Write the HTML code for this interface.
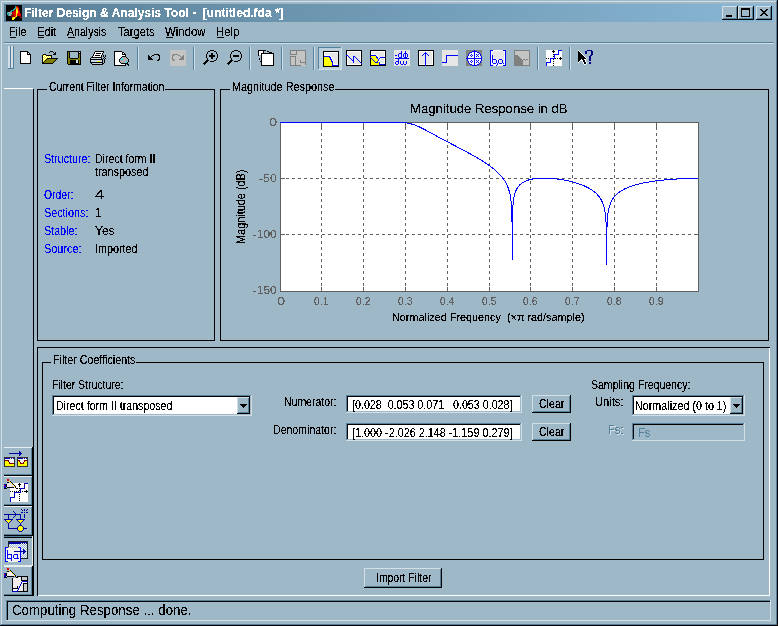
<!DOCTYPE html>
<html><head><meta charset="utf-8"><title>Filter Design &amp; Analysis Tool</title>
<style>
html,body{margin:0;padding:0;width:778px;height:626px;overflow:hidden;background:#9EB8C8}
#w{position:relative;width:778px;height:626px;overflow:hidden;will-change:transform}
#w>div{position:absolute}
.t{filter:url(#thr)}
</style></head><body><svg width="0" height="0" style="position:absolute"><filter id="thr"><feComponentTransfer><feFuncA type="discrete" tableValues="0 0 1 1 1"/></feComponentTransfer></filter></svg><div id="w">
<div style="left:0px;top:0px;width:778px;height:626px;background:#9EB8C8;"></div>
<div style="left:0px;top:0px;width:778px;height:1px;background:#9EB8C8;"></div>
<div style="left:0px;top:0px;width:1px;height:626px;background:#9EB8C8;"></div>
<div style="left:1px;top:1px;width:776px;height:1px;background:#D3DFE7;"></div>
<div style="left:1px;top:1px;width:1px;height:624px;background:#D3DFE7;"></div>
<div style="left:776px;top:1px;width:1px;height:624px;background:#54809C;"></div>
<div style="left:1px;top:624px;width:776px;height:1px;background:#54809C;"></div>
<div style="left:777px;top:0px;width:1px;height:626px;background:#000000;"></div>
<div style="left:0px;top:625px;width:778px;height:1px;background:#000000;"></div>
<div style="left:4px;top:4px;width:770px;height:18px;background:#9EB8C8;background:linear-gradient(to right,#5A8098,#88B6D4)"></div>
<svg style="position:absolute;left:6px;top:5px;" width="16" height="16" viewBox="0 0 16 16" shape-rendering="crispEdges"><rect x="0" y="0" width="16" height="1" fill="#000000"/><rect x="0" y="1" width="9" height="1" fill="#000000"/><rect x="9" y="1" width="1" height="1" fill="#20A8A8"/><rect x="10" y="1" width="1" height="1" fill="#900000"/><rect x="11" y="1" width="1" height="1" fill="#E00000"/><rect x="12" y="1" width="4" height="1" fill="#000000"/><rect x="0" y="2" width="9" height="1" fill="#000000"/><rect x="9" y="2" width="1" height="1" fill="#20A8A8"/><rect x="10" y="2" width="1" height="1" fill="#FF8000"/><rect x="11" y="2" width="1" height="1" fill="#E00000"/><rect x="12" y="2" width="1" height="1" fill="#900000"/><rect x="13" y="2" width="3" height="1" fill="#000000"/><rect x="0" y="3" width="8" height="1" fill="#000000"/><rect x="8" y="3" width="2" height="1" fill="#20A8A8"/><rect x="10" y="3" width="2" height="1" fill="#FF8000"/><rect x="12" y="3" width="1" height="1" fill="#E00000"/><rect x="13" y="3" width="3" height="1" fill="#000000"/><rect x="0" y="4" width="7" height="1" fill="#000000"/><rect x="7" y="4" width="2" height="1" fill="#20A8A8"/><rect x="9" y="4" width="1" height="1" fill="#900000"/><rect x="10" y="4" width="1" height="1" fill="#FFFF00"/><rect x="11" y="4" width="1" height="1" fill="#FF8000"/><rect x="12" y="4" width="1" height="1" fill="#E00000"/><rect x="13" y="4" width="3" height="1" fill="#000000"/><rect x="0" y="5" width="5" height="1" fill="#000000"/><rect x="5" y="5" width="3" height="1" fill="#20A8A8"/><rect x="8" y="5" width="2" height="1" fill="#900000"/><rect x="10" y="5" width="2" height="1" fill="#FFFF00"/><rect x="12" y="5" width="1" height="1" fill="#E00000"/><rect x="13" y="5" width="1" height="1" fill="#900000"/><rect x="14" y="5" width="2" height="1" fill="#000000"/><rect x="0" y="6" width="4" height="1" fill="#000000"/><rect x="4" y="6" width="2" height="1" fill="#20A8A8"/><rect x="6" y="6" width="1" height="1" fill="#000000"/><rect x="7" y="6" width="1" height="1" fill="#900000"/><rect x="8" y="6" width="2" height="1" fill="#E00000"/><rect x="10" y="6" width="2" height="1" fill="#FFFF00"/><rect x="12" y="6" width="2" height="1" fill="#E00000"/><rect x="14" y="6" width="2" height="1" fill="#000000"/><rect x="0" y="7" width="1" height="1" fill="#000000"/><rect x="1" y="7" width="1" height="1" fill="#20A8A8"/><rect x="2" y="7" width="4" height="1" fill="#A0A8A8"/><rect x="6" y="7" width="1" height="1" fill="#900000"/><rect x="7" y="7" width="3" height="1" fill="#E00000"/><rect x="10" y="7" width="2" height="1" fill="#FFFF00"/><rect x="12" y="7" width="2" height="1" fill="#E00000"/><rect x="14" y="7" width="2" height="1" fill="#000000"/><rect x="0" y="8" width="1" height="1" fill="#000000"/><rect x="1" y="8" width="2" height="1" fill="#20A8A8"/><rect x="3" y="8" width="3" height="1" fill="#A0A8A8"/><rect x="6" y="8" width="1" height="1" fill="#900000"/><rect x="7" y="8" width="3" height="1" fill="#E00000"/><rect x="10" y="8" width="1" height="1" fill="#FFFF00"/><rect x="11" y="8" width="1" height="1" fill="#FF8000"/><rect x="12" y="8" width="2" height="1" fill="#E00000"/><rect x="14" y="8" width="1" height="1" fill="#900000"/><rect x="15" y="8" width="1" height="1" fill="#000000"/><rect x="0" y="9" width="1" height="1" fill="#000000"/><rect x="1" y="9" width="2" height="1" fill="#20A8A8"/><rect x="3" y="9" width="2" height="1" fill="#A0A8A8"/><rect x="5" y="9" width="1" height="1" fill="#20A8A8"/><rect x="6" y="9" width="1" height="1" fill="#900000"/><rect x="7" y="9" width="3" height="1" fill="#E00000"/><rect x="10" y="9" width="1" height="1" fill="#FFFF00"/><rect x="11" y="9" width="4" height="1" fill="#E00000"/><rect x="15" y="9" width="1" height="1" fill="#000000"/><rect x="0" y="10" width="2" height="1" fill="#000000"/><rect x="2" y="10" width="1" height="1" fill="#20A8A8"/><rect x="3" y="10" width="2" height="1" fill="#A0A8A8"/><rect x="5" y="10" width="3" height="1" fill="#900000"/><rect x="8" y="10" width="2" height="1" fill="#E00000"/><rect x="10" y="10" width="1" height="1" fill="#FFFF00"/><rect x="11" y="10" width="4" height="1" fill="#E00000"/><rect x="15" y="10" width="1" height="1" fill="#000000"/><rect x="0" y="11" width="5" height="1" fill="#000000"/><rect x="5" y="11" width="4" height="1" fill="#900000"/><rect x="9" y="11" width="1" height="1" fill="#FF8000"/><rect x="10" y="11" width="1" height="1" fill="#FFFF00"/><rect x="11" y="11" width="2" height="1" fill="#000000"/><rect x="13" y="11" width="2" height="1" fill="#900000"/><rect x="15" y="11" width="1" height="1" fill="#000000"/><rect x="0" y="12" width="6" height="1" fill="#000000"/><rect x="6" y="12" width="1" height="1" fill="#FF8000"/><rect x="7" y="12" width="2" height="1" fill="#FFFF00"/><rect x="9" y="12" width="1" height="1" fill="#FF8000"/><rect x="10" y="12" width="4" height="1" fill="#000000"/><rect x="14" y="12" width="2" height="1" fill="#900000"/><rect x="0" y="13" width="6" height="1" fill="#000000"/><rect x="6" y="13" width="3" height="1" fill="#FFFF00"/><rect x="9" y="13" width="7" height="1" fill="#000000"/><rect x="0" y="14" width="6" height="1" fill="#000000"/><rect x="6" y="14" width="2" height="1" fill="#FFFF00"/><rect x="8" y="14" width="8" height="1" fill="#000000"/><rect x="0" y="15" width="16" height="1" fill="#000000"/></svg>
<div class="t" style="left:24px;top:7px;font:bold 12px/12px 'Liberation Sans', sans-serif;color:#FFF;white-space:pre;transform-origin:0 0;transform:scaleX(1.0009);">Filter Design &amp; Analysis Tool -  [untitled.fda *]</div>
<div style="left:722px;top:6px;width:16px;height:14px;background:#9EB8C8;"></div>
<div style="left:722px;top:6px;width:16px;height:1px;background:#D3DFE7;"></div>
<div style="left:722px;top:6px;width:1px;height:14px;background:#D3DFE7;"></div>
<div style="left:722px;top:19px;width:16px;height:1px;background:#000000;"></div>
<div style="left:737px;top:6px;width:1px;height:14px;background:#000000;"></div>
<div style="left:723px;top:7px;width:14px;height:1px;background:#9EB8C8;"></div>
<div style="left:723px;top:7px;width:1px;height:12px;background:#9EB8C8;"></div>
<div style="left:723px;top:18px;width:14px;height:1px;background:#54809C;"></div>
<div style="left:736px;top:7px;width:1px;height:12px;background:#54809C;"></div>
<div style="left:738px;top:6px;width:16px;height:14px;background:#9EB8C8;"></div>
<div style="left:738px;top:6px;width:16px;height:1px;background:#D3DFE7;"></div>
<div style="left:738px;top:6px;width:1px;height:14px;background:#D3DFE7;"></div>
<div style="left:738px;top:19px;width:16px;height:1px;background:#000000;"></div>
<div style="left:753px;top:6px;width:1px;height:14px;background:#000000;"></div>
<div style="left:739px;top:7px;width:14px;height:1px;background:#9EB8C8;"></div>
<div style="left:739px;top:7px;width:1px;height:12px;background:#9EB8C8;"></div>
<div style="left:739px;top:18px;width:14px;height:1px;background:#54809C;"></div>
<div style="left:752px;top:7px;width:1px;height:12px;background:#54809C;"></div>
<div style="left:756px;top:6px;width:16px;height:14px;background:#9EB8C8;"></div>
<div style="left:756px;top:6px;width:16px;height:1px;background:#D3DFE7;"></div>
<div style="left:756px;top:6px;width:1px;height:14px;background:#D3DFE7;"></div>
<div style="left:756px;top:19px;width:16px;height:1px;background:#000000;"></div>
<div style="left:771px;top:6px;width:1px;height:14px;background:#000000;"></div>
<div style="left:757px;top:7px;width:14px;height:1px;background:#9EB8C8;"></div>
<div style="left:757px;top:7px;width:1px;height:12px;background:#9EB8C8;"></div>
<div style="left:757px;top:18px;width:14px;height:1px;background:#54809C;"></div>
<div style="left:770px;top:7px;width:1px;height:12px;background:#54809C;"></div>
<div style="left:726px;top:15px;width:6px;height:2px;background:#000000;"></div>
<div style="left:741px;top:8px;width:9px;height:2px;background:#000000;"></div>
<div style="left:741px;top:8px;width:1px;height:9px;background:#000000;"></div>
<div style="left:749px;top:8px;width:1px;height:9px;background:#000000;"></div>
<div style="left:741px;top:16px;width:9px;height:1px;background:#000000;"></div>
<svg style="position:absolute;left:760px;top:9px;" width="8" height="7" viewBox="0 0 8 7" shape-rendering="crispEdges"><rect x="0" y="0" width="2" height="1" fill="#000000"/><rect x="6" y="0" width="2" height="1" fill="#000000"/><rect x="1" y="1" width="2" height="1" fill="#000000"/><rect x="5" y="1" width="2" height="1" fill="#000000"/><rect x="2" y="2" width="4" height="1" fill="#000000"/><rect x="3" y="3" width="2" height="1" fill="#000000"/><rect x="2" y="4" width="4" height="1" fill="#000000"/><rect x="1" y="5" width="2" height="1" fill="#000000"/><rect x="5" y="5" width="2" height="1" fill="#000000"/><rect x="0" y="6" width="2" height="1" fill="#000000"/><rect x="6" y="6" width="2" height="1" fill="#000000"/></svg>
<div class="t" style="left:9px;top:26px;font:normal 12px/12px 'Liberation Sans', sans-serif;color:#000;white-space:pre;transform-origin:0 0;transform:scaleX(0.9017);">File</div>
<div style="left:10px;top:37px;width:6px;height:1px;background:#000000;"></div>
<div class="t" style="left:37px;top:26px;font:normal 12px/12px 'Liberation Sans', sans-serif;color:#000;white-space:pre;transform-origin:0 0;transform:scaleX(0.9430);">Edit</div>
<div style="left:38px;top:37px;width:6px;height:1px;background:#000000;"></div>
<div class="t" style="left:67px;top:26px;font:normal 12px/12px 'Liberation Sans', sans-serif;color:#000;white-space:pre;transform-origin:0 0;transform:scaleX(0.8819);">Analysis</div>
<div style="left:68px;top:37px;width:7px;height:1px;background:#000000;"></div>
<div class="t" style="left:118px;top:26px;font:normal 12px/12px 'Liberation Sans', sans-serif;color:#000;white-space:pre;transform-origin:0 0;transform:scaleX(0.9269);">Targets</div>
<div style="left:132px;top:37px;width:6px;height:1px;background:#000000;"></div>
<div class="t" style="left:165px;top:26px;font:normal 12px/12px 'Liberation Sans', sans-serif;color:#000;white-space:pre;transform-origin:0 0;transform:scaleX(0.9492);">Window</div>
<div style="left:166px;top:37px;width:7px;height:1px;background:#000000;"></div>
<div class="t" style="left:216px;top:26px;font:normal 12px/12px 'Liberation Sans', sans-serif;color:#000;white-space:pre;transform-origin:0 0;transform:scaleX(0.9529);">Help</div>
<div style="left:217px;top:37px;width:7px;height:1px;background:#000000;"></div>
<div style="left:4px;top:42px;width:770px;height:1px;background:#54809C;"></div>
<div style="left:4px;top:43px;width:770px;height:1px;background:#D3DFE7;"></div>
<div style="left:8px;top:46px;width:1px;height:23px;background:#D3DFE7;"></div>
<div style="left:9px;top:46px;width:1px;height:23px;background:#D3DFE7;"></div>
<div style="left:10px;top:46px;width:1px;height:23px;background:#54809C;"></div>
<div style="left:8px;top:68px;width:3px;height:1px;background:#54809C;"></div>
<div style="left:11px;top:46px;width:1px;height:23px;background:#D3DFE7;"></div>
<div style="left:12px;top:46px;width:1px;height:23px;background:#D3DFE7;"></div>
<div style="left:13px;top:46px;width:1px;height:23px;background:#54809C;"></div>
<div style="left:11px;top:68px;width:3px;height:1px;background:#54809C;"></div>
<div style="left:137px;top:47px;width:1px;height:23px;background:#54809C;"></div>
<div style="left:138px;top:47px;width:1px;height:23px;background:#D3DFE7;"></div>
<div style="left:193px;top:47px;width:1px;height:23px;background:#54809C;"></div>
<div style="left:194px;top:47px;width:1px;height:23px;background:#D3DFE7;"></div>
<div style="left:249px;top:47px;width:1px;height:23px;background:#54809C;"></div>
<div style="left:250px;top:47px;width:1px;height:23px;background:#D3DFE7;"></div>
<div style="left:281px;top:47px;width:1px;height:23px;background:#54809C;"></div>
<div style="left:282px;top:47px;width:1px;height:23px;background:#D3DFE7;"></div>
<div style="left:313px;top:47px;width:1px;height:23px;background:#54809C;"></div>
<div style="left:314px;top:47px;width:1px;height:23px;background:#D3DFE7;"></div>
<div style="left:537px;top:47px;width:1px;height:23px;background:#54809C;"></div>
<div style="left:538px;top:47px;width:1px;height:23px;background:#D3DFE7;"></div>
<div style="left:569px;top:47px;width:1px;height:23px;background:#54809C;"></div>
<div style="left:570px;top:47px;width:1px;height:23px;background:#D3DFE7;"></div>
<svg style="position:absolute;left:18px;top:50px;" width="16" height="14" viewBox="0 0 16 14" shape-rendering="crispEdges"><rect x="2" y="1" width="8" height="1" fill="#000000"/><rect x="2" y="2" width="1" height="1" fill="#000000"/><rect x="3" y="2" width="6" height="1" fill="#FFFFFF"/><rect x="9" y="2" width="2" height="1" fill="#000000"/><rect x="2" y="3" width="1" height="1" fill="#000000"/><rect x="3" y="3" width="6" height="1" fill="#FFFFFF"/><rect x="9" y="3" width="1" height="1" fill="#000000"/><rect x="10" y="3" width="1" height="1" fill="#FFFFFF"/><rect x="11" y="3" width="1" height="1" fill="#000000"/><rect x="2" y="4" width="1" height="1" fill="#000000"/><rect x="3" y="4" width="6" height="1" fill="#FFFFFF"/><rect x="9" y="4" width="4" height="1" fill="#000000"/><rect x="2" y="5" width="1" height="1" fill="#000000"/><rect x="3" y="5" width="9" height="1" fill="#FFFFFF"/><rect x="12" y="5" width="1" height="1" fill="#000000"/><rect x="2" y="6" width="1" height="1" fill="#000000"/><rect x="3" y="6" width="9" height="1" fill="#FFFFFF"/><rect x="12" y="6" width="1" height="1" fill="#000000"/><rect x="2" y="7" width="1" height="1" fill="#000000"/><rect x="3" y="7" width="9" height="1" fill="#FFFFFF"/><rect x="12" y="7" width="1" height="1" fill="#000000"/><rect x="2" y="8" width="1" height="1" fill="#000000"/><rect x="3" y="8" width="9" height="1" fill="#FFFFFF"/><rect x="12" y="8" width="1" height="1" fill="#000000"/><rect x="2" y="9" width="1" height="1" fill="#000000"/><rect x="3" y="9" width="9" height="1" fill="#FFFFFF"/><rect x="12" y="9" width="1" height="1" fill="#000000"/><rect x="2" y="10" width="1" height="1" fill="#000000"/><rect x="3" y="10" width="9" height="1" fill="#FFFFFF"/><rect x="12" y="10" width="1" height="1" fill="#000000"/><rect x="2" y="11" width="1" height="1" fill="#000000"/><rect x="3" y="11" width="9" height="1" fill="#FFFFFF"/><rect x="12" y="11" width="1" height="1" fill="#000000"/><rect x="2" y="12" width="1" height="1" fill="#000000"/><rect x="3" y="12" width="9" height="1" fill="#FFFFFF"/><rect x="12" y="12" width="1" height="1" fill="#000000"/><rect x="2" y="13" width="11" height="1" fill="#000000"/></svg>
<svg style="position:absolute;left:42px;top:50px;" width="16" height="14" viewBox="0 0 16 14" shape-rendering="crispEdges"><rect x="8" y="1" width="3" height="1" fill="#000000"/><rect x="7" y="2" width="1" height="1" fill="#000000"/><rect x="11" y="2" width="1" height="1" fill="#000000"/><rect x="13" y="2" width="1" height="1" fill="#000000"/><rect x="12" y="3" width="2" height="1" fill="#000000"/><rect x="1" y="4" width="3" height="1" fill="#000000"/><rect x="11" y="4" width="3" height="1" fill="#000000"/><rect x="0" y="5" width="1" height="1" fill="#000000"/><rect x="1" y="5" width="1" height="1" fill="#FFFF00"/><rect x="2" y="5" width="1" height="1" fill="#FFFFFF"/><rect x="3" y="5" width="1" height="1" fill="#FFFF00"/><rect x="4" y="5" width="6" height="1" fill="#000000"/><rect x="0" y="6" width="1" height="1" fill="#000000"/><rect x="1" y="6" width="1" height="1" fill="#FFFFFF"/><rect x="2" y="6" width="1" height="1" fill="#FFFF00"/><rect x="3" y="6" width="1" height="1" fill="#FFFFFF"/><rect x="4" y="6" width="1" height="1" fill="#FFFF00"/><rect x="5" y="6" width="1" height="1" fill="#FFFFFF"/><rect x="6" y="6" width="1" height="1" fill="#FFFF00"/><rect x="7" y="6" width="1" height="1" fill="#FFFFFF"/><rect x="8" y="6" width="1" height="1" fill="#FFFF00"/><rect x="9" y="6" width="1" height="1" fill="#000000"/><rect x="0" y="7" width="1" height="1" fill="#000000"/><rect x="1" y="7" width="1" height="1" fill="#FFFF00"/><rect x="2" y="7" width="1" height="1" fill="#FFFFFF"/><rect x="3" y="7" width="1" height="1" fill="#FFFF00"/><rect x="4" y="7" width="1" height="1" fill="#FFFFFF"/><rect x="5" y="7" width="1" height="1" fill="#FFFF00"/><rect x="6" y="7" width="1" height="1" fill="#FFFFFF"/><rect x="7" y="7" width="1" height="1" fill="#FFFF00"/><rect x="8" y="7" width="1" height="1" fill="#FFFFFF"/><rect x="9" y="7" width="1" height="1" fill="#000000"/><rect x="0" y="8" width="1" height="1" fill="#000000"/><rect x="1" y="8" width="1" height="1" fill="#FFFFFF"/><rect x="2" y="8" width="1" height="1" fill="#FFFF00"/><rect x="3" y="8" width="1" height="1" fill="#FFFFFF"/><rect x="4" y="8" width="1" height="1" fill="#FFFF00"/><rect x="5" y="8" width="11" height="1" fill="#000000"/><rect x="0" y="9" width="1" height="1" fill="#000000"/><rect x="1" y="9" width="1" height="1" fill="#FFFF00"/><rect x="2" y="9" width="1" height="1" fill="#FFFFFF"/><rect x="3" y="9" width="1" height="1" fill="#FFFF00"/><rect x="4" y="9" width="1" height="1" fill="#000000"/><rect x="5" y="9" width="9" height="1" fill="#808000"/><rect x="14" y="9" width="1" height="1" fill="#000000"/><rect x="0" y="10" width="1" height="1" fill="#000000"/><rect x="1" y="10" width="1" height="1" fill="#FFFFFF"/><rect x="2" y="10" width="1" height="1" fill="#FFFF00"/><rect x="3" y="10" width="1" height="1" fill="#000000"/><rect x="4" y="10" width="9" height="1" fill="#808000"/><rect x="13" y="10" width="1" height="1" fill="#000000"/><rect x="0" y="11" width="1" height="1" fill="#000000"/><rect x="1" y="11" width="1" height="1" fill="#FFFF00"/><rect x="2" y="11" width="1" height="1" fill="#000000"/><rect x="3" y="11" width="9" height="1" fill="#808000"/><rect x="12" y="11" width="1" height="1" fill="#000000"/><rect x="0" y="12" width="2" height="1" fill="#000000"/><rect x="2" y="12" width="9" height="1" fill="#808000"/><rect x="11" y="12" width="1" height="1" fill="#000000"/><rect x="0" y="13" width="11" height="1" fill="#000000"/></svg>
<svg style="position:absolute;left:66px;top:50px;" width="16" height="15" viewBox="0 0 16 15" shape-rendering="crispEdges"><rect x="1" y="1" width="14" height="1" fill="#000000"/><rect x="1" y="2" width="1" height="1" fill="#000000"/><rect x="2" y="2" width="1" height="1" fill="#808000"/><rect x="3" y="2" width="1" height="1" fill="#000000"/><rect x="12" y="2" width="1" height="1" fill="#000000"/><rect x="13" y="2" width="1" height="1" fill="#D8E6EE"/><rect x="14" y="2" width="1" height="1" fill="#000000"/><rect x="1" y="3" width="1" height="1" fill="#000000"/><rect x="2" y="3" width="1" height="1" fill="#808000"/><rect x="3" y="3" width="1" height="1" fill="#000000"/><rect x="12" y="3" width="3" height="1" fill="#000000"/><rect x="1" y="4" width="1" height="1" fill="#000000"/><rect x="2" y="4" width="1" height="1" fill="#808000"/><rect x="3" y="4" width="1" height="1" fill="#000000"/><rect x="12" y="4" width="1" height="1" fill="#000000"/><rect x="13" y="4" width="1" height="1" fill="#808000"/><rect x="14" y="4" width="1" height="1" fill="#000000"/><rect x="1" y="5" width="1" height="1" fill="#000000"/><rect x="2" y="5" width="1" height="1" fill="#808000"/><rect x="3" y="5" width="1" height="1" fill="#000000"/><rect x="12" y="5" width="1" height="1" fill="#000000"/><rect x="13" y="5" width="1" height="1" fill="#808000"/><rect x="14" y="5" width="1" height="1" fill="#000000"/><rect x="1" y="6" width="1" height="1" fill="#000000"/><rect x="2" y="6" width="1" height="1" fill="#808000"/><rect x="3" y="6" width="1" height="1" fill="#000000"/><rect x="12" y="6" width="1" height="1" fill="#000000"/><rect x="13" y="6" width="1" height="1" fill="#808000"/><rect x="14" y="6" width="1" height="1" fill="#000000"/><rect x="1" y="7" width="1" height="1" fill="#000000"/><rect x="2" y="7" width="1" height="1" fill="#808000"/><rect x="3" y="7" width="1" height="1" fill="#000000"/><rect x="12" y="7" width="1" height="1" fill="#000000"/><rect x="13" y="7" width="1" height="1" fill="#808000"/><rect x="14" y="7" width="1" height="1" fill="#000000"/><rect x="1" y="8" width="1" height="1" fill="#000000"/><rect x="2" y="8" width="2" height="1" fill="#808000"/><rect x="4" y="8" width="8" height="1" fill="#000000"/><rect x="12" y="8" width="2" height="1" fill="#808000"/><rect x="14" y="8" width="1" height="1" fill="#000000"/><rect x="1" y="9" width="1" height="1" fill="#000000"/><rect x="2" y="9" width="12" height="1" fill="#808000"/><rect x="14" y="9" width="1" height="1" fill="#000000"/><rect x="1" y="10" width="1" height="1" fill="#000000"/><rect x="2" y="10" width="2" height="1" fill="#808000"/><rect x="4" y="10" width="6" height="1" fill="#000000"/><rect x="10" y="10" width="2" height="1" fill="#D8E6EE"/><rect x="12" y="10" width="1" height="1" fill="#000000"/><rect x="13" y="10" width="1" height="1" fill="#808000"/><rect x="14" y="10" width="1" height="1" fill="#000000"/><rect x="1" y="11" width="1" height="1" fill="#000000"/><rect x="2" y="11" width="2" height="1" fill="#808000"/><rect x="4" y="11" width="6" height="1" fill="#000000"/><rect x="10" y="11" width="2" height="1" fill="#D8E6EE"/><rect x="12" y="11" width="1" height="1" fill="#000000"/><rect x="13" y="11" width="1" height="1" fill="#808000"/><rect x="14" y="11" width="1" height="1" fill="#000000"/><rect x="1" y="12" width="1" height="1" fill="#000000"/><rect x="2" y="12" width="2" height="1" fill="#808000"/><rect x="4" y="12" width="6" height="1" fill="#000000"/><rect x="10" y="12" width="2" height="1" fill="#D8E6EE"/><rect x="12" y="12" width="1" height="1" fill="#000000"/><rect x="13" y="12" width="1" height="1" fill="#808000"/><rect x="14" y="12" width="1" height="1" fill="#000000"/><rect x="1" y="13" width="1" height="1" fill="#000000"/><rect x="2" y="13" width="2" height="1" fill="#808000"/><rect x="4" y="13" width="9" height="1" fill="#000000"/><rect x="13" y="13" width="1" height="1" fill="#808000"/><rect x="14" y="13" width="1" height="1" fill="#000000"/><rect x="2" y="14" width="13" height="1" fill="#000000"/></svg>
<svg style="position:absolute;left:90px;top:50px;" width="16" height="15" viewBox="0 0 16 15" shape-rendering="crispEdges"><rect x="5" y="1" width="9" height="1" fill="#000000"/><rect x="4" y="2" width="1" height="1" fill="#000000"/><rect x="5" y="2" width="8" height="1" fill="#FFFFFF"/><rect x="13" y="2" width="1" height="1" fill="#000000"/><rect x="4" y="3" width="1" height="1" fill="#000000"/><rect x="5" y="3" width="1" height="1" fill="#FFFFFF"/><rect x="6" y="3" width="5" height="1" fill="#000000"/><rect x="11" y="3" width="1" height="1" fill="#FFFFFF"/><rect x="12" y="3" width="1" height="1" fill="#000000"/><rect x="3" y="4" width="1" height="1" fill="#000000"/><rect x="4" y="4" width="8" height="1" fill="#FFFFFF"/><rect x="12" y="4" width="1" height="1" fill="#000000"/><rect x="3" y="5" width="1" height="1" fill="#000000"/><rect x="4" y="5" width="1" height="1" fill="#FFFFFF"/><rect x="5" y="5" width="5" height="1" fill="#000000"/><rect x="10" y="5" width="1" height="1" fill="#FFFFFF"/><rect x="11" y="5" width="1" height="1" fill="#000000"/><rect x="13" y="5" width="1" height="1" fill="#000000"/><rect x="15" y="5" width="1" height="1" fill="#000000"/><rect x="2" y="6" width="1" height="1" fill="#000000"/><rect x="3" y="6" width="8" height="1" fill="#FFFFFF"/><rect x="11" y="6" width="1" height="1" fill="#000000"/><rect x="13" y="6" width="1" height="1" fill="#000000"/><rect x="15" y="6" width="1" height="1" fill="#000000"/><rect x="1" y="7" width="11" height="1" fill="#000000"/><rect x="14" y="7" width="1" height="1" fill="#000000"/><rect x="0" y="8" width="1" height="1" fill="#000000"/><rect x="1" y="8" width="10" height="1" fill="#C0D8E6"/><rect x="11" y="8" width="1" height="1" fill="#000000"/><rect x="13" y="8" width="1" height="1" fill="#000000"/><rect x="15" y="8" width="1" height="1" fill="#000000"/><rect x="0" y="9" width="13" height="1" fill="#000000"/><rect x="14" y="9" width="1" height="1" fill="#000000"/><rect x="0" y="10" width="1" height="1" fill="#000000"/><rect x="1" y="10" width="11" height="1" fill="#C0D8E6"/><rect x="12" y="10" width="1" height="1" fill="#000000"/><rect x="14" y="10" width="1" height="1" fill="#000000"/><rect x="0" y="11" width="1" height="1" fill="#000000"/><rect x="1" y="11" width="6" height="1" fill="#C0D8E6"/><rect x="7" y="11" width="3" height="1" fill="#FFFF00"/><rect x="10" y="11" width="2" height="1" fill="#C0D8E6"/><rect x="12" y="11" width="1" height="1" fill="#000000"/><rect x="14" y="11" width="1" height="1" fill="#000000"/><rect x="0" y="12" width="13" height="1" fill="#000000"/><rect x="14" y="12" width="1" height="1" fill="#000000"/><rect x="1" y="13" width="1" height="1" fill="#000000"/><rect x="2" y="13" width="10" height="1" fill="#C0D8E6"/><rect x="12" y="13" width="2" height="1" fill="#000000"/><rect x="2" y="14" width="11" height="1" fill="#000000"/></svg>
<svg style="position:absolute;left:113px;top:50px;" width="16" height="16" viewBox="0 0 16 16" shape-rendering="crispEdges"><rect x="1" y="1" width="8" height="1" fill="#000000"/><rect x="1" y="2" width="1" height="1" fill="#000000"/><rect x="2" y="2" width="7" height="1" fill="#FFFFFF"/><rect x="9" y="2" width="2" height="1" fill="#000000"/><rect x="1" y="3" width="1" height="1" fill="#000000"/><rect x="2" y="3" width="7" height="1" fill="#FFFFFF"/><rect x="9" y="3" width="1" height="1" fill="#000000"/><rect x="10" y="3" width="1" height="1" fill="#FFFFFF"/><rect x="11" y="3" width="1" height="1" fill="#000000"/><rect x="1" y="4" width="1" height="1" fill="#000000"/><rect x="2" y="4" width="7" height="1" fill="#FFFFFF"/><rect x="9" y="4" width="4" height="1" fill="#000000"/><rect x="1" y="5" width="1" height="1" fill="#000000"/><rect x="2" y="5" width="10" height="1" fill="#FFFFFF"/><rect x="12" y="5" width="1" height="1" fill="#000000"/><rect x="1" y="6" width="1" height="1" fill="#000000"/><rect x="2" y="6" width="7" height="1" fill="#FFFFFF"/><rect x="9" y="6" width="4" height="1" fill="#000000"/><rect x="1" y="7" width="1" height="1" fill="#000000"/><rect x="2" y="7" width="6" height="1" fill="#FFFFFF"/><rect x="8" y="7" width="1" height="1" fill="#000000"/><rect x="9" y="7" width="4" height="1" fill="#B0B0B0"/><rect x="13" y="7" width="1" height="1" fill="#000000"/><rect x="1" y="8" width="1" height="1" fill="#000000"/><rect x="2" y="8" width="5" height="1" fill="#FFFFFF"/><rect x="7" y="8" width="1" height="1" fill="#000000"/><rect x="8" y="8" width="2" height="1" fill="#40E0F0"/><rect x="10" y="8" width="4" height="1" fill="#B0B0B0"/><rect x="14" y="8" width="1" height="1" fill="#000000"/><rect x="1" y="9" width="1" height="1" fill="#000000"/><rect x="2" y="9" width="4" height="1" fill="#FFFFFF"/><rect x="6" y="9" width="1" height="1" fill="#000000"/><rect x="7" y="9" width="1" height="1" fill="#B0B0B0"/><rect x="8" y="9" width="2" height="1" fill="#40E0F0"/><rect x="10" y="9" width="5" height="1" fill="#B0B0B0"/><rect x="15" y="9" width="1" height="1" fill="#000000"/><rect x="1" y="10" width="1" height="1" fill="#000000"/><rect x="2" y="10" width="4" height="1" fill="#FFFFFF"/><rect x="6" y="10" width="1" height="1" fill="#000000"/><rect x="7" y="10" width="8" height="1" fill="#B0B0B0"/><rect x="15" y="10" width="1" height="1" fill="#000000"/><rect x="1" y="11" width="1" height="1" fill="#000000"/><rect x="2" y="11" width="4" height="1" fill="#FFFFFF"/><rect x="6" y="11" width="1" height="1" fill="#000000"/><rect x="7" y="11" width="6" height="1" fill="#B0B0B0"/><rect x="13" y="11" width="1" height="1" fill="#40E0F0"/><rect x="14" y="11" width="1" height="1" fill="#B0B0B0"/><rect x="15" y="11" width="1" height="1" fill="#000000"/><rect x="1" y="12" width="1" height="1" fill="#000000"/><rect x="2" y="12" width="5" height="1" fill="#FFFFFF"/><rect x="7" y="12" width="1" height="1" fill="#000000"/><rect x="8" y="12" width="4" height="1" fill="#B0B0B0"/><rect x="12" y="12" width="2" height="1" fill="#40E0F0"/><rect x="14" y="12" width="1" height="1" fill="#000000"/><rect x="1" y="13" width="1" height="1" fill="#000000"/><rect x="2" y="13" width="6" height="1" fill="#FFFFFF"/><rect x="8" y="13" width="7" height="1" fill="#000000"/><rect x="1" y="14" width="1" height="1" fill="#000000"/><rect x="2" y="14" width="10" height="1" fill="#FFFFFF"/><rect x="12" y="14" width="1" height="1" fill="#000000"/><rect x="14" y="14" width="2" height="1" fill="#000000"/><rect x="1" y="15" width="12" height="1" fill="#000000"/><rect x="15" y="15" width="1" height="1" fill="#000000"/></svg>
<svg style="position:absolute;left:146px;top:50px;" width="16" height="11" viewBox="0 0 16 11" shape-rendering="crispEdges"><rect x="8" y="4" width="5" height="1" fill="#000000"/><rect x="2" y="5" width="1" height="1" fill="#000000"/><rect x="6" y="5" width="2" height="1" fill="#000000"/><rect x="12" y="5" width="2" height="1" fill="#000000"/><rect x="2" y="6" width="2" height="1" fill="#000000"/><rect x="5" y="6" width="1" height="1" fill="#000000"/><rect x="13" y="6" width="1" height="1" fill="#000000"/><rect x="2" y="7" width="3" height="1" fill="#000000"/><rect x="13" y="7" width="1" height="1" fill="#000000"/><rect x="2" y="8" width="4" height="1" fill="#000000"/><rect x="13" y="8" width="1" height="1" fill="#000000"/><rect x="2" y="9" width="5" height="1" fill="#000000"/><rect x="12" y="9" width="2" height="1" fill="#000000"/><rect x="11" y="10" width="2" height="1" fill="#000000"/></svg>
<div style="left:170px;top:50px;width:16px;height:16px;background:#C4C4C4;"></div>
<svg style="position:absolute;left:170px;top:50px;" width="16" height="11" viewBox="0 0 16 11" shape-rendering="crispEdges"><rect x="3" y="4" width="5" height="1" fill="#808080"/><rect x="2" y="5" width="2" height="1" fill="#808080"/><rect x="8" y="5" width="2" height="1" fill="#808080"/><rect x="13" y="5" width="1" height="1" fill="#808080"/><rect x="2" y="6" width="1" height="1" fill="#808080"/><rect x="10" y="6" width="1" height="1" fill="#808080"/><rect x="12" y="6" width="2" height="1" fill="#808080"/><rect x="2" y="7" width="1" height="1" fill="#808080"/><rect x="11" y="7" width="3" height="1" fill="#808080"/><rect x="2" y="8" width="1" height="1" fill="#808080"/><rect x="10" y="8" width="4" height="1" fill="#808080"/><rect x="2" y="9" width="2" height="1" fill="#808080"/><rect x="9" y="9" width="5" height="1" fill="#808080"/><rect x="3" y="10" width="2" height="1" fill="#808080"/></svg>
<svg style="position:absolute;left:202px;top:50px;" width="16" height="15" viewBox="0 0 16 15" shape-rendering="crispEdges"><rect x="8" y="0" width="4" height="1" fill="#000000"/><rect x="6" y="1" width="2" height="1" fill="#000000"/><rect x="12" y="1" width="2" height="1" fill="#000000"/><rect x="5" y="2" width="1" height="1" fill="#000000"/><rect x="14" y="2" width="1" height="1" fill="#000000"/><rect x="5" y="3" width="1" height="1" fill="#000000"/><rect x="9" y="3" width="2" height="1" fill="#000000"/><rect x="14" y="3" width="1" height="1" fill="#000000"/><rect x="4" y="4" width="1" height="1" fill="#000000"/><rect x="9" y="4" width="2" height="1" fill="#000000"/><rect x="15" y="4" width="1" height="1" fill="#000000"/><rect x="4" y="5" width="1" height="1" fill="#000000"/><rect x="7" y="5" width="6" height="1" fill="#000000"/><rect x="15" y="5" width="1" height="1" fill="#000000"/><rect x="4" y="6" width="1" height="1" fill="#000000"/><rect x="7" y="6" width="6" height="1" fill="#000000"/><rect x="15" y="6" width="1" height="1" fill="#000000"/><rect x="4" y="7" width="1" height="1" fill="#000000"/><rect x="9" y="7" width="2" height="1" fill="#000000"/><rect x="15" y="7" width="1" height="1" fill="#000000"/><rect x="5" y="8" width="1" height="1" fill="#000000"/><rect x="9" y="8" width="2" height="1" fill="#000000"/><rect x="14" y="8" width="1" height="1" fill="#000000"/><rect x="5" y="9" width="1" height="1" fill="#000000"/><rect x="14" y="9" width="1" height="1" fill="#000000"/><rect x="4" y="10" width="3" height="1" fill="#000000"/><rect x="12" y="10" width="2" height="1" fill="#000000"/><rect x="3" y="11" width="3" height="1" fill="#000000"/><rect x="8" y="11" width="4" height="1" fill="#000000"/><rect x="2" y="12" width="3" height="1" fill="#000000"/><rect x="1" y="13" width="3" height="1" fill="#000000"/><rect x="2" y="14" width="1" height="1" fill="#000000"/></svg>
<svg style="position:absolute;left:226px;top:50px;" width="16" height="15" viewBox="0 0 16 15" shape-rendering="crispEdges"><rect x="8" y="0" width="4" height="1" fill="#000000"/><rect x="6" y="1" width="2" height="1" fill="#000000"/><rect x="12" y="1" width="2" height="1" fill="#000000"/><rect x="5" y="2" width="1" height="1" fill="#000000"/><rect x="14" y="2" width="1" height="1" fill="#000000"/><rect x="5" y="3" width="1" height="1" fill="#000000"/><rect x="14" y="3" width="1" height="1" fill="#000000"/><rect x="4" y="4" width="1" height="1" fill="#000000"/><rect x="15" y="4" width="1" height="1" fill="#000000"/><rect x="4" y="5" width="1" height="1" fill="#000000"/><rect x="7" y="5" width="6" height="1" fill="#000000"/><rect x="15" y="5" width="1" height="1" fill="#000000"/><rect x="4" y="6" width="1" height="1" fill="#000000"/><rect x="7" y="6" width="6" height="1" fill="#000000"/><rect x="15" y="6" width="1" height="1" fill="#000000"/><rect x="4" y="7" width="1" height="1" fill="#000000"/><rect x="15" y="7" width="1" height="1" fill="#000000"/><rect x="5" y="8" width="1" height="1" fill="#000000"/><rect x="14" y="8" width="1" height="1" fill="#000000"/><rect x="5" y="9" width="1" height="1" fill="#000000"/><rect x="14" y="9" width="1" height="1" fill="#000000"/><rect x="4" y="10" width="3" height="1" fill="#000000"/><rect x="12" y="10" width="2" height="1" fill="#000000"/><rect x="3" y="11" width="3" height="1" fill="#000000"/><rect x="8" y="11" width="4" height="1" fill="#000000"/><rect x="2" y="12" width="3" height="1" fill="#000000"/><rect x="1" y="13" width="3" height="1" fill="#000000"/><rect x="2" y="14" width="1" height="1" fill="#000000"/></svg>
<svg style="position:absolute;left:258px;top:50px;" width="16" height="16" viewBox="0 0 16 16" shape-rendering="crispEdges"><rect x="0" y="0" width="8" height="1" fill="#000000"/><rect x="0" y="1" width="1" height="1" fill="#000000"/><rect x="1" y="1" width="4" height="1" fill="#FFFFFF"/><rect x="5" y="1" width="1" height="1" fill="#000000"/><rect x="9" y="1" width="2" height="1" fill="#000000"/><rect x="0" y="2" width="1" height="1" fill="#000000"/><rect x="1" y="2" width="4" height="1" fill="#FFFFFF"/><rect x="5" y="2" width="1" height="1" fill="#000000"/><rect x="11" y="2" width="3" height="1" fill="#000000"/><rect x="0" y="3" width="1" height="1" fill="#000000"/><rect x="1" y="3" width="2" height="1" fill="#FFFFFF"/><rect x="3" y="3" width="13" height="1" fill="#000000"/><rect x="0" y="4" width="1" height="1" fill="#000000"/><rect x="1" y="4" width="2" height="1" fill="#FFFFFF"/><rect x="3" y="4" width="1" height="1" fill="#000000"/><rect x="4" y="4" width="11" height="1" fill="#FFFFFF"/><rect x="15" y="4" width="1" height="1" fill="#000000"/><rect x="0" y="5" width="1" height="1" fill="#000000"/><rect x="3" y="5" width="1" height="1" fill="#000000"/><rect x="4" y="5" width="11" height="1" fill="#FFFFFF"/><rect x="15" y="5" width="1" height="1" fill="#000000"/><rect x="3" y="6" width="1" height="1" fill="#000000"/><rect x="4" y="6" width="11" height="1" fill="#FFFFFF"/><rect x="15" y="6" width="1" height="1" fill="#000000"/><rect x="3" y="7" width="1" height="1" fill="#000000"/><rect x="4" y="7" width="11" height="1" fill="#FFFFFF"/><rect x="15" y="7" width="1" height="1" fill="#000000"/><rect x="1" y="8" width="1" height="1" fill="#000000"/><rect x="3" y="8" width="1" height="1" fill="#000000"/><rect x="4" y="8" width="11" height="1" fill="#FFFFFF"/><rect x="15" y="8" width="1" height="1" fill="#000000"/><rect x="1" y="9" width="1" height="1" fill="#000000"/><rect x="3" y="9" width="1" height="1" fill="#000000"/><rect x="4" y="9" width="11" height="1" fill="#FFFFFF"/><rect x="15" y="9" width="1" height="1" fill="#000000"/><rect x="3" y="10" width="1" height="1" fill="#000000"/><rect x="4" y="10" width="11" height="1" fill="#FFFFFF"/><rect x="15" y="10" width="1" height="1" fill="#000000"/><rect x="2" y="11" width="2" height="1" fill="#000000"/><rect x="4" y="11" width="11" height="1" fill="#FFFFFF"/><rect x="15" y="11" width="1" height="1" fill="#000000"/><rect x="3" y="12" width="1" height="1" fill="#000000"/><rect x="4" y="12" width="11" height="1" fill="#FFFFFF"/><rect x="15" y="12" width="1" height="1" fill="#000000"/><rect x="3" y="13" width="1" height="1" fill="#000000"/><rect x="4" y="13" width="11" height="1" fill="#FFFFFF"/><rect x="15" y="13" width="1" height="1" fill="#000000"/><rect x="3" y="14" width="1" height="1" fill="#000000"/><rect x="4" y="14" width="11" height="1" fill="#FFFFFF"/><rect x="15" y="14" width="1" height="1" fill="#000000"/><rect x="3" y="15" width="13" height="1" fill="#000000"/></svg>
<svg style="position:absolute;left:290px;top:50px;" width="16" height="16" viewBox="0 0 16 16" shape-rendering="crispEdges"><rect x="0" y="0" width="16" height="1" fill="#808080"/><rect x="0" y="1" width="1" height="1" fill="#808080"/><rect x="1" y="1" width="5" height="1" fill="#C4C4C4"/><rect x="6" y="1" width="1" height="1" fill="#808080"/><rect x="7" y="1" width="8" height="1" fill="#C4C4C4"/><rect x="15" y="1" width="1" height="1" fill="#808080"/><rect x="0" y="2" width="1" height="1" fill="#808080"/><rect x="1" y="2" width="5" height="1" fill="#C4C4C4"/><rect x="6" y="2" width="1" height="1" fill="#808080"/><rect x="7" y="2" width="8" height="1" fill="#C4C4C4"/><rect x="15" y="2" width="1" height="1" fill="#808080"/><rect x="0" y="3" width="1" height="1" fill="#808080"/><rect x="1" y="3" width="5" height="1" fill="#C4C4C4"/><rect x="6" y="3" width="1" height="1" fill="#808080"/><rect x="7" y="3" width="8" height="1" fill="#C4C4C4"/><rect x="15" y="3" width="1" height="1" fill="#808080"/><rect x="0" y="4" width="7" height="1" fill="#808080"/><rect x="7" y="4" width="8" height="1" fill="#C4C4C4"/><rect x="15" y="4" width="1" height="1" fill="#808080"/><rect x="0" y="5" width="15" height="1" fill="#C4C4C4"/><rect x="15" y="5" width="1" height="1" fill="#808080"/><rect x="0" y="6" width="6" height="1" fill="#808080"/><rect x="6" y="6" width="9" height="1" fill="#C4C4C4"/><rect x="15" y="6" width="1" height="1" fill="#808080"/><rect x="0" y="7" width="1" height="1" fill="#808080"/><rect x="1" y="7" width="4" height="1" fill="#C4C4C4"/><rect x="5" y="7" width="1" height="1" fill="#808080"/><rect x="6" y="7" width="9" height="1" fill="#C4C4C4"/><rect x="15" y="7" width="1" height="1" fill="#808080"/><rect x="0" y="8" width="1" height="1" fill="#808080"/><rect x="1" y="8" width="4" height="1" fill="#C4C4C4"/><rect x="5" y="8" width="1" height="1" fill="#808080"/><rect x="6" y="8" width="9" height="1" fill="#C4C4C4"/><rect x="15" y="8" width="1" height="1" fill="#808080"/><rect x="0" y="9" width="1" height="1" fill="#808080"/><rect x="1" y="9" width="4" height="1" fill="#C4C4C4"/><rect x="5" y="9" width="1" height="1" fill="#808080"/><rect x="6" y="9" width="9" height="1" fill="#C4C4C4"/><rect x="15" y="9" width="1" height="1" fill="#808080"/><rect x="0" y="10" width="1" height="1" fill="#808080"/><rect x="1" y="10" width="4" height="1" fill="#C4C4C4"/><rect x="5" y="10" width="1" height="1" fill="#808080"/><rect x="6" y="10" width="4" height="1" fill="#C4C4C4"/><rect x="10" y="10" width="1" height="1" fill="#808080"/><rect x="11" y="10" width="4" height="1" fill="#C4C4C4"/><rect x="15" y="10" width="1" height="1" fill="#808080"/><rect x="0" y="11" width="1" height="1" fill="#808080"/><rect x="1" y="11" width="4" height="1" fill="#C4C4C4"/><rect x="5" y="11" width="1" height="1" fill="#808080"/><rect x="6" y="11" width="4" height="1" fill="#C4C4C4"/><rect x="10" y="11" width="1" height="1" fill="#808080"/><rect x="11" y="11" width="4" height="1" fill="#C4C4C4"/><rect x="15" y="11" width="1" height="1" fill="#808080"/><rect x="0" y="12" width="1" height="1" fill="#808080"/><rect x="1" y="12" width="4" height="1" fill="#C4C4C4"/><rect x="5" y="12" width="1" height="1" fill="#808080"/><rect x="6" y="12" width="4" height="1" fill="#C4C4C4"/><rect x="10" y="12" width="6" height="1" fill="#808080"/><rect x="0" y="13" width="1" height="1" fill="#808080"/><rect x="1" y="13" width="4" height="1" fill="#C4C4C4"/><rect x="5" y="13" width="1" height="1" fill="#808080"/><rect x="6" y="13" width="9" height="1" fill="#C4C4C4"/><rect x="15" y="13" width="1" height="1" fill="#808080"/><rect x="0" y="14" width="1" height="1" fill="#808080"/><rect x="1" y="14" width="4" height="1" fill="#C4C4C4"/><rect x="5" y="14" width="1" height="1" fill="#808080"/><rect x="6" y="14" width="9" height="1" fill="#C4C4C4"/><rect x="15" y="14" width="1" height="1" fill="#808080"/><rect x="0" y="15" width="11" height="1" fill="#808080"/><rect x="11" y="15" width="5" height="1" fill="#C4C4C4"/></svg>
<div style="left:318px;top:47px;width:24px;height:23px;background:#BCD0DC;"></div>
<div style="left:318px;top:47px;width:24px;height:1px;background:#54809C;"></div>
<div style="left:318px;top:47px;width:1px;height:23px;background:#54809C;"></div>
<div style="left:318px;top:69px;width:24px;height:1px;background:#D3DFE7;"></div>
<div style="left:341px;top:47px;width:1px;height:23px;background:#D3DFE7;"></div>
<svg style="position:absolute;left:323px;top:51px;" width="16" height="16" viewBox="0 0 16 16" shape-rendering="crispEdges"><rect x="0" y="0" width="16" height="1" fill="#000000"/><rect x="0" y="1" width="1" height="1" fill="#000000"/><rect x="1" y="1" width="14" height="1" fill="#FFFFFF"/><rect x="15" y="1" width="1" height="1" fill="#000000"/><rect x="0" y="2" width="1" height="1" fill="#000000"/><rect x="1" y="2" width="1" height="1" fill="#FFFFFF"/><rect x="2" y="2" width="13" height="1" fill="#E6E6E6"/><rect x="15" y="2" width="1" height="1" fill="#000000"/><rect x="0" y="3" width="1" height="1" fill="#000000"/><rect x="1" y="3" width="1" height="1" fill="#FFFFFF"/><rect x="2" y="3" width="13" height="1" fill="#E6E6E6"/><rect x="15" y="3" width="1" height="1" fill="#000000"/><rect x="0" y="4" width="1" height="1" fill="#000000"/><rect x="1" y="4" width="5" height="1" fill="#FFFFFF"/><rect x="6" y="4" width="9" height="1" fill="#E6E6E6"/><rect x="15" y="4" width="1" height="1" fill="#000000"/><rect x="0" y="5" width="1" height="1" fill="#000000"/><rect x="1" y="5" width="6" height="1" fill="#0000FF"/><rect x="7" y="5" width="1" height="1" fill="#FFFFFF"/><rect x="8" y="5" width="7" height="1" fill="#E6E6E6"/><rect x="15" y="5" width="1" height="1" fill="#000000"/><rect x="0" y="6" width="1" height="1" fill="#000000"/><rect x="1" y="6" width="5" height="1" fill="#FFFF00"/><rect x="6" y="6" width="2" height="1" fill="#0000FF"/><rect x="8" y="6" width="1" height="1" fill="#FFFFFF"/><rect x="9" y="6" width="6" height="1" fill="#E6E6E6"/><rect x="15" y="6" width="1" height="1" fill="#000000"/><rect x="0" y="7" width="1" height="1" fill="#000000"/><rect x="1" y="7" width="6" height="1" fill="#FFFF00"/><rect x="7" y="7" width="1" height="1" fill="#0000FF"/><rect x="8" y="7" width="1" height="1" fill="#FFFFFF"/><rect x="9" y="7" width="6" height="1" fill="#E6E6E6"/><rect x="15" y="7" width="1" height="1" fill="#000000"/><rect x="0" y="8" width="1" height="1" fill="#000000"/><rect x="1" y="8" width="6" height="1" fill="#FFFF00"/><rect x="7" y="8" width="2" height="1" fill="#0000FF"/><rect x="9" y="8" width="1" height="1" fill="#FFFFFF"/><rect x="10" y="8" width="5" height="1" fill="#E6E6E6"/><rect x="15" y="8" width="1" height="1" fill="#000000"/><rect x="0" y="9" width="1" height="1" fill="#000000"/><rect x="1" y="9" width="7" height="1" fill="#FFFF00"/><rect x="8" y="9" width="1" height="1" fill="#0000FF"/><rect x="9" y="9" width="1" height="1" fill="#FFFFFF"/><rect x="10" y="9" width="5" height="1" fill="#E6E6E6"/><rect x="15" y="9" width="1" height="1" fill="#000000"/><rect x="0" y="10" width="1" height="1" fill="#000000"/><rect x="1" y="10" width="7" height="1" fill="#FFFF00"/><rect x="8" y="10" width="2" height="1" fill="#0000FF"/><rect x="10" y="10" width="1" height="1" fill="#FFFFFF"/><rect x="11" y="10" width="4" height="1" fill="#E6E6E6"/><rect x="15" y="10" width="1" height="1" fill="#000000"/><rect x="0" y="11" width="1" height="1" fill="#000000"/><rect x="1" y="11" width="8" height="1" fill="#FFFF00"/><rect x="9" y="11" width="1" height="1" fill="#0000FF"/><rect x="10" y="11" width="1" height="1" fill="#FFFFFF"/><rect x="11" y="11" width="4" height="1" fill="#E6E6E6"/><rect x="15" y="11" width="1" height="1" fill="#000000"/><rect x="0" y="12" width="1" height="1" fill="#000000"/><rect x="1" y="12" width="8" height="1" fill="#FFFF00"/><rect x="9" y="12" width="1" height="1" fill="#0000FF"/><rect x="10" y="12" width="1" height="1" fill="#FFFFFF"/><rect x="11" y="12" width="4" height="1" fill="#E6E6E6"/><rect x="15" y="12" width="1" height="1" fill="#000000"/><rect x="0" y="13" width="1" height="1" fill="#000000"/><rect x="1" y="13" width="8" height="1" fill="#FFFF00"/><rect x="9" y="13" width="1" height="1" fill="#0000FF"/><rect x="10" y="13" width="5" height="1" fill="#FFFFFF"/><rect x="15" y="13" width="1" height="1" fill="#000000"/><rect x="0" y="14" width="1" height="1" fill="#000000"/><rect x="1" y="14" width="8" height="1" fill="#FFFF00"/><rect x="9" y="14" width="6" height="1" fill="#0000FF"/><rect x="15" y="14" width="1" height="1" fill="#000000"/><rect x="0" y="15" width="16" height="1" fill="#000000"/></svg>
<svg style="position:absolute;left:346px;top:50px;" width="16" height="16" viewBox="0 0 16 16" shape-rendering="crispEdges"><rect x="0" y="0" width="16" height="1" fill="#000000"/><rect x="0" y="1" width="1" height="1" fill="#000000"/><rect x="1" y="1" width="14" height="1" fill="#FFFFFF"/><rect x="15" y="1" width="1" height="1" fill="#000000"/><rect x="0" y="2" width="1" height="1" fill="#000000"/><rect x="1" y="2" width="1" height="1" fill="#FFFFFF"/><rect x="2" y="2" width="12" height="1" fill="#E6E6E6"/><rect x="14" y="2" width="1" height="1" fill="#FFFFFF"/><rect x="15" y="2" width="1" height="1" fill="#000000"/><rect x="0" y="3" width="1" height="1" fill="#000000"/><rect x="1" y="3" width="1" height="1" fill="#FFFFFF"/><rect x="2" y="3" width="12" height="1" fill="#E6E6E6"/><rect x="14" y="3" width="1" height="1" fill="#FFFFFF"/><rect x="15" y="3" width="1" height="1" fill="#000000"/><rect x="0" y="4" width="1" height="1" fill="#000000"/><rect x="1" y="4" width="1" height="1" fill="#FFFFFF"/><rect x="2" y="4" width="12" height="1" fill="#E6E6E6"/><rect x="14" y="4" width="1" height="1" fill="#FFFFFF"/><rect x="15" y="4" width="1" height="1" fill="#000000"/><rect x="0" y="5" width="2" height="1" fill="#0000FF"/><rect x="2" y="5" width="12" height="1" fill="#E6E6E6"/><rect x="14" y="5" width="1" height="1" fill="#FFFFFF"/><rect x="15" y="5" width="1" height="1" fill="#000000"/><rect x="0" y="6" width="1" height="1" fill="#000000"/><rect x="1" y="6" width="1" height="1" fill="#FFFFFF"/><rect x="2" y="6" width="1" height="1" fill="#0000FF"/><rect x="3" y="6" width="4" height="1" fill="#E6E6E6"/><rect x="7" y="6" width="2" height="1" fill="#0000FF"/><rect x="9" y="6" width="5" height="1" fill="#E6E6E6"/><rect x="14" y="6" width="1" height="1" fill="#FFFFFF"/><rect x="15" y="6" width="1" height="1" fill="#000000"/><rect x="0" y="7" width="1" height="1" fill="#000000"/><rect x="1" y="7" width="1" height="1" fill="#FFFFFF"/><rect x="2" y="7" width="1" height="1" fill="#E6E6E6"/><rect x="3" y="7" width="1" height="1" fill="#0000FF"/><rect x="4" y="7" width="3" height="1" fill="#E6E6E6"/><rect x="7" y="7" width="1" height="1" fill="#0000FF"/><rect x="8" y="7" width="1" height="1" fill="#E6E6E6"/><rect x="9" y="7" width="1" height="1" fill="#0000FF"/><rect x="10" y="7" width="4" height="1" fill="#E6E6E6"/><rect x="14" y="7" width="1" height="1" fill="#FFFFFF"/><rect x="15" y="7" width="1" height="1" fill="#000000"/><rect x="0" y="8" width="1" height="1" fill="#000000"/><rect x="1" y="8" width="1" height="1" fill="#FFFFFF"/><rect x="2" y="8" width="2" height="1" fill="#E6E6E6"/><rect x="4" y="8" width="1" height="1" fill="#0000FF"/><rect x="5" y="8" width="2" height="1" fill="#E6E6E6"/><rect x="7" y="8" width="1" height="1" fill="#0000FF"/><rect x="8" y="8" width="2" height="1" fill="#E6E6E6"/><rect x="10" y="8" width="1" height="1" fill="#0000FF"/><rect x="11" y="8" width="3" height="1" fill="#E6E6E6"/><rect x="14" y="8" width="1" height="1" fill="#FFFFFF"/><rect x="15" y="8" width="1" height="1" fill="#000000"/><rect x="0" y="9" width="1" height="1" fill="#000000"/><rect x="1" y="9" width="1" height="1" fill="#FFFFFF"/><rect x="2" y="9" width="3" height="1" fill="#E6E6E6"/><rect x="5" y="9" width="1" height="1" fill="#0000FF"/><rect x="6" y="9" width="1" height="1" fill="#E6E6E6"/><rect x="7" y="9" width="1" height="1" fill="#0000FF"/><rect x="8" y="9" width="3" height="1" fill="#E6E6E6"/><rect x="11" y="9" width="1" height="1" fill="#0000FF"/><rect x="12" y="9" width="2" height="1" fill="#E6E6E6"/><rect x="14" y="9" width="1" height="1" fill="#FFFFFF"/><rect x="15" y="9" width="1" height="1" fill="#000000"/><rect x="0" y="10" width="1" height="1" fill="#000000"/><rect x="1" y="10" width="1" height="1" fill="#FFFFFF"/><rect x="2" y="10" width="4" height="1" fill="#E6E6E6"/><rect x="6" y="10" width="2" height="1" fill="#0000FF"/><rect x="8" y="10" width="4" height="1" fill="#E6E6E6"/><rect x="12" y="10" width="1" height="1" fill="#0000FF"/><rect x="13" y="10" width="1" height="1" fill="#E6E6E6"/><rect x="14" y="10" width="1" height="1" fill="#FFFFFF"/><rect x="15" y="10" width="1" height="1" fill="#000000"/><rect x="0" y="11" width="1" height="1" fill="#000000"/><rect x="1" y="11" width="1" height="1" fill="#FFFFFF"/><rect x="2" y="11" width="5" height="1" fill="#E6E6E6"/><rect x="7" y="11" width="1" height="1" fill="#0000FF"/><rect x="8" y="11" width="5" height="1" fill="#E6E6E6"/><rect x="13" y="11" width="1" height="1" fill="#0000FF"/><rect x="14" y="11" width="1" height="1" fill="#FFFFFF"/><rect x="15" y="11" width="1" height="1" fill="#000000"/><rect x="0" y="12" width="1" height="1" fill="#000000"/><rect x="1" y="12" width="1" height="1" fill="#FFFFFF"/><rect x="2" y="12" width="5" height="1" fill="#E6E6E6"/><rect x="7" y="12" width="1" height="1" fill="#0000FF"/><rect x="8" y="12" width="6" height="1" fill="#E6E6E6"/><rect x="14" y="12" width="1" height="1" fill="#0000FF"/><rect x="15" y="12" width="1" height="1" fill="#000000"/><rect x="0" y="13" width="1" height="1" fill="#000000"/><rect x="1" y="13" width="1" height="1" fill="#FFFFFF"/><rect x="2" y="13" width="12" height="1" fill="#E6E6E6"/><rect x="14" y="13" width="1" height="1" fill="#FFFFFF"/><rect x="15" y="13" width="1" height="1" fill="#0000FF"/><rect x="0" y="14" width="1" height="1" fill="#000000"/><rect x="1" y="14" width="14" height="1" fill="#FFFFFF"/><rect x="15" y="14" width="1" height="1" fill="#000000"/><rect x="0" y="15" width="16" height="1" fill="#000000"/></svg>
<svg style="position:absolute;left:370px;top:50px;" width="16" height="16" viewBox="0 0 16 16" shape-rendering="crispEdges"><rect x="0" y="0" width="16" height="1" fill="#000000"/><rect x="0" y="1" width="1" height="1" fill="#000000"/><rect x="1" y="1" width="14" height="1" fill="#FFFFFF"/><rect x="15" y="1" width="1" height="1" fill="#000000"/><rect x="0" y="2" width="1" height="1" fill="#000000"/><rect x="1" y="2" width="1" height="1" fill="#FFFFFF"/><rect x="2" y="2" width="12" height="1" fill="#E6E6E6"/><rect x="14" y="2" width="1" height="1" fill="#FFFFFF"/><rect x="15" y="2" width="1" height="1" fill="#000000"/><rect x="0" y="3" width="1" height="1" fill="#000000"/><rect x="1" y="3" width="1" height="1" fill="#FFFFFF"/><rect x="2" y="3" width="12" height="1" fill="#E6E6E6"/><rect x="14" y="3" width="1" height="1" fill="#FFFFFF"/><rect x="15" y="3" width="1" height="1" fill="#000000"/><rect x="0" y="4" width="1" height="1" fill="#000000"/><rect x="1" y="4" width="5" height="1" fill="#FFFFFF"/><rect x="6" y="4" width="8" height="1" fill="#E6E6E6"/><rect x="14" y="4" width="1" height="1" fill="#FFFFFF"/><rect x="15" y="4" width="1" height="1" fill="#000000"/><rect x="0" y="5" width="6" height="1" fill="#0000FF"/><rect x="6" y="5" width="1" height="1" fill="#FFFFFF"/><rect x="7" y="5" width="7" height="1" fill="#E6E6E6"/><rect x="14" y="5" width="1" height="1" fill="#FFFFFF"/><rect x="15" y="5" width="1" height="1" fill="#000000"/><rect x="0" y="6" width="1" height="1" fill="#000000"/><rect x="1" y="6" width="5" height="1" fill="#FFFF00"/><rect x="6" y="6" width="1" height="1" fill="#0000FF"/><rect x="7" y="6" width="1" height="1" fill="#FFFFFF"/><rect x="8" y="6" width="6" height="1" fill="#E6E6E6"/><rect x="14" y="6" width="1" height="1" fill="#FFFFFF"/><rect x="15" y="6" width="1" height="1" fill="#000000"/><rect x="0" y="7" width="1" height="1" fill="#0000FF"/><rect x="1" y="7" width="5" height="1" fill="#FFFF00"/><rect x="6" y="7" width="2" height="1" fill="#0000FF"/><rect x="8" y="7" width="1" height="1" fill="#E6E6E6"/><rect x="9" y="7" width="1" height="1" fill="#FFFFFF"/><rect x="10" y="7" width="5" height="1" fill="#0000FF"/><rect x="15" y="7" width="1" height="1" fill="#000000"/><rect x="0" y="8" width="1" height="1" fill="#000000"/><rect x="1" y="8" width="1" height="1" fill="#0000FF"/><rect x="2" y="8" width="5" height="1" fill="#FFFF00"/><rect x="7" y="8" width="1" height="1" fill="#0000FF"/><rect x="8" y="8" width="1" height="1" fill="#FFFFFF"/><rect x="9" y="8" width="1" height="1" fill="#0000FF"/><rect x="10" y="8" width="1" height="1" fill="#FFFFFF"/><rect x="11" y="8" width="3" height="1" fill="#E6E6E6"/><rect x="14" y="8" width="1" height="1" fill="#FFFFFF"/><rect x="15" y="8" width="1" height="1" fill="#000000"/><rect x="0" y="9" width="1" height="1" fill="#000000"/><rect x="1" y="9" width="1" height="1" fill="#FFFF00"/><rect x="2" y="9" width="1" height="1" fill="#0000FF"/><rect x="3" y="9" width="5" height="1" fill="#FFFF00"/><rect x="8" y="9" width="1" height="1" fill="#0000FF"/><rect x="9" y="9" width="1" height="1" fill="#E6E6E6"/><rect x="10" y="9" width="1" height="1" fill="#FFFFFF"/><rect x="11" y="9" width="3" height="1" fill="#E6E6E6"/><rect x="14" y="9" width="1" height="1" fill="#FFFFFF"/><rect x="15" y="9" width="1" height="1" fill="#000000"/><rect x="0" y="10" width="1" height="1" fill="#000000"/><rect x="1" y="10" width="2" height="1" fill="#FFFF00"/><rect x="3" y="10" width="1" height="1" fill="#0000FF"/><rect x="4" y="10" width="4" height="1" fill="#FFFF00"/><rect x="8" y="10" width="1" height="1" fill="#0000FF"/><rect x="9" y="10" width="1" height="1" fill="#FFFFFF"/><rect x="10" y="10" width="4" height="1" fill="#E6E6E6"/><rect x="14" y="10" width="1" height="1" fill="#FFFFFF"/><rect x="15" y="10" width="1" height="1" fill="#000000"/><rect x="0" y="11" width="1" height="1" fill="#000000"/><rect x="1" y="11" width="3" height="1" fill="#FFFF00"/><rect x="4" y="11" width="1" height="1" fill="#0000FF"/><rect x="5" y="11" width="2" height="1" fill="#FFFF00"/><rect x="7" y="11" width="1" height="1" fill="#0000FF"/><rect x="8" y="11" width="2" height="1" fill="#FFFFFF"/><rect x="10" y="11" width="4" height="1" fill="#E6E6E6"/><rect x="14" y="11" width="1" height="1" fill="#FFFFFF"/><rect x="15" y="11" width="1" height="1" fill="#000000"/><rect x="0" y="12" width="1" height="1" fill="#000000"/><rect x="1" y="12" width="4" height="1" fill="#FFFF00"/><rect x="5" y="12" width="3" height="1" fill="#0000FF"/><rect x="8" y="12" width="1" height="1" fill="#FFFF00"/><rect x="9" y="12" width="1" height="1" fill="#0000FF"/><rect x="10" y="12" width="1" height="1" fill="#FFFFFF"/><rect x="11" y="12" width="3" height="1" fill="#E6E6E6"/><rect x="14" y="12" width="1" height="1" fill="#FFFFFF"/><rect x="15" y="12" width="1" height="1" fill="#000000"/><rect x="0" y="13" width="1" height="1" fill="#000000"/><rect x="1" y="13" width="8" height="1" fill="#FFFF00"/><rect x="9" y="13" width="1" height="1" fill="#0000FF"/><rect x="10" y="13" width="5" height="1" fill="#FFFFFF"/><rect x="15" y="13" width="1" height="1" fill="#000000"/><rect x="0" y="14" width="1" height="1" fill="#000000"/><rect x="1" y="14" width="8" height="1" fill="#FFFF00"/><rect x="9" y="14" width="6" height="1" fill="#0000FF"/><rect x="15" y="14" width="1" height="1" fill="#000000"/><rect x="0" y="15" width="16" height="1" fill="#000000"/></svg>
<svg style="position:absolute;left:394px;top:50px;" width="16" height="16" viewBox="0 0 16 16" shape-rendering="crispEdges"><rect x="0" y="0" width="16" height="1" fill="#E6E6E6"/><rect x="0" y="1" width="7" height="1" fill="#E6E6E6"/><rect x="7" y="1" width="1" height="1" fill="#0000FF"/><rect x="8" y="1" width="3" height="1" fill="#E6E6E6"/><rect x="11" y="1" width="1" height="1" fill="#0000FF"/><rect x="12" y="1" width="4" height="1" fill="#E6E6E6"/><rect x="0" y="2" width="7" height="1" fill="#E6E6E6"/><rect x="7" y="2" width="1" height="1" fill="#0000FF"/><rect x="8" y="2" width="3" height="1" fill="#E6E6E6"/><rect x="11" y="2" width="1" height="1" fill="#0000FF"/><rect x="12" y="2" width="4" height="1" fill="#E6E6E6"/><rect x="0" y="3" width="5" height="1" fill="#E6E6E6"/><rect x="5" y="3" width="3" height="1" fill="#0000FF"/><rect x="8" y="3" width="2" height="1" fill="#E6E6E6"/><rect x="10" y="3" width="3" height="1" fill="#0000FF"/><rect x="13" y="3" width="3" height="1" fill="#E6E6E6"/><rect x="0" y="4" width="4" height="1" fill="#E6E6E6"/><rect x="4" y="4" width="1" height="1" fill="#0000FF"/><rect x="5" y="4" width="2" height="1" fill="#E6E6E6"/><rect x="7" y="4" width="1" height="1" fill="#0000FF"/><rect x="8" y="4" width="1" height="1" fill="#E6E6E6"/><rect x="9" y="4" width="1" height="1" fill="#0000FF"/><rect x="10" y="4" width="1" height="1" fill="#E6E6E6"/><rect x="11" y="4" width="1" height="1" fill="#0000FF"/><rect x="12" y="4" width="1" height="1" fill="#E6E6E6"/><rect x="13" y="4" width="1" height="1" fill="#0000FF"/><rect x="14" y="4" width="2" height="1" fill="#E6E6E6"/><rect x="0" y="5" width="1" height="1" fill="#E6E6E6"/><rect x="1" y="5" width="2" height="1" fill="#0000FF"/><rect x="3" y="5" width="1" height="1" fill="#E6E6E6"/><rect x="4" y="5" width="1" height="1" fill="#0000FF"/><rect x="5" y="5" width="2" height="1" fill="#E6E6E6"/><rect x="7" y="5" width="1" height="1" fill="#0000FF"/><rect x="8" y="5" width="1" height="1" fill="#E6E6E6"/><rect x="9" y="5" width="1" height="1" fill="#0000FF"/><rect x="10" y="5" width="1" height="1" fill="#E6E6E6"/><rect x="11" y="5" width="1" height="1" fill="#0000FF"/><rect x="12" y="5" width="1" height="1" fill="#E6E6E6"/><rect x="13" y="5" width="1" height="1" fill="#0000FF"/><rect x="14" y="5" width="2" height="1" fill="#E6E6E6"/><rect x="0" y="6" width="4" height="1" fill="#E6E6E6"/><rect x="4" y="6" width="1" height="1" fill="#0000FF"/><rect x="5" y="6" width="2" height="1" fill="#E6E6E6"/><rect x="7" y="6" width="1" height="1" fill="#0000FF"/><rect x="8" y="6" width="1" height="1" fill="#E6E6E6"/><rect x="9" y="6" width="1" height="1" fill="#0000FF"/><rect x="10" y="6" width="1" height="1" fill="#E6E6E6"/><rect x="11" y="6" width="1" height="1" fill="#0000FF"/><rect x="12" y="6" width="1" height="1" fill="#E6E6E6"/><rect x="13" y="6" width="1" height="1" fill="#0000FF"/><rect x="14" y="6" width="2" height="1" fill="#E6E6E6"/><rect x="0" y="7" width="5" height="1" fill="#E6E6E6"/><rect x="5" y="7" width="3" height="1" fill="#0000FF"/><rect x="8" y="7" width="2" height="1" fill="#E6E6E6"/><rect x="10" y="7" width="3" height="1" fill="#0000FF"/><rect x="13" y="7" width="3" height="1" fill="#E6E6E6"/><rect x="0" y="8" width="1" height="1" fill="#E6E6E6"/><rect x="1" y="8" width="14" height="1" fill="#0000FF"/><rect x="15" y="8" width="1" height="1" fill="#E6E6E6"/><rect x="0" y="9" width="4" height="1" fill="#E6E6E6"/><rect x="4" y="9" width="1" height="1" fill="#0000FF"/><rect x="5" y="9" width="11" height="1" fill="#E6E6E6"/><rect x="0" y="10" width="4" height="1" fill="#E6E6E6"/><rect x="4" y="10" width="1" height="1" fill="#0000FF"/><rect x="5" y="10" width="11" height="1" fill="#E6E6E6"/><rect x="0" y="11" width="2" height="1" fill="#E6E6E6"/><rect x="2" y="11" width="3" height="1" fill="#0000FF"/><rect x="5" y="11" width="1" height="1" fill="#E6E6E6"/><rect x="6" y="11" width="1" height="1" fill="#0000FF"/><rect x="7" y="11" width="2" height="1" fill="#E6E6E6"/><rect x="9" y="11" width="1" height="1" fill="#0000FF"/><rect x="10" y="11" width="2" height="1" fill="#E6E6E6"/><rect x="12" y="11" width="1" height="1" fill="#0000FF"/><rect x="13" y="11" width="3" height="1" fill="#E6E6E6"/><rect x="0" y="12" width="1" height="1" fill="#E6E6E6"/><rect x="1" y="12" width="1" height="1" fill="#0000FF"/><rect x="2" y="12" width="2" height="1" fill="#E6E6E6"/><rect x="4" y="12" width="1" height="1" fill="#0000FF"/><rect x="5" y="12" width="1" height="1" fill="#E6E6E6"/><rect x="6" y="12" width="1" height="1" fill="#0000FF"/><rect x="7" y="12" width="2" height="1" fill="#E6E6E6"/><rect x="9" y="12" width="1" height="1" fill="#0000FF"/><rect x="10" y="12" width="2" height="1" fill="#E6E6E6"/><rect x="12" y="12" width="1" height="1" fill="#0000FF"/><rect x="13" y="12" width="3" height="1" fill="#E6E6E6"/><rect x="0" y="13" width="1" height="1" fill="#E6E6E6"/><rect x="1" y="13" width="1" height="1" fill="#0000FF"/><rect x="2" y="13" width="2" height="1" fill="#E6E6E6"/><rect x="4" y="13" width="1" height="1" fill="#0000FF"/><rect x="5" y="13" width="1" height="1" fill="#E6E6E6"/><rect x="6" y="13" width="1" height="1" fill="#0000FF"/><rect x="7" y="13" width="2" height="1" fill="#E6E6E6"/><rect x="9" y="13" width="1" height="1" fill="#0000FF"/><rect x="10" y="13" width="2" height="1" fill="#E6E6E6"/><rect x="12" y="13" width="1" height="1" fill="#0000FF"/><rect x="13" y="13" width="3" height="1" fill="#E6E6E6"/><rect x="0" y="14" width="2" height="1" fill="#E6E6E6"/><rect x="2" y="14" width="2" height="1" fill="#0000FF"/><rect x="4" y="14" width="3" height="1" fill="#E6E6E6"/><rect x="7" y="14" width="2" height="1" fill="#0000FF"/><rect x="9" y="14" width="1" height="1" fill="#E6E6E6"/><rect x="10" y="14" width="2" height="1" fill="#0000FF"/><rect x="12" y="14" width="4" height="1" fill="#E6E6E6"/><rect x="0" y="15" width="16" height="1" fill="#E6E6E6"/></svg>
<svg style="position:absolute;left:418px;top:50px;" width="16" height="16" viewBox="0 0 16 16" shape-rendering="crispEdges"><rect x="0" y="0" width="16" height="1" fill="#000000"/><rect x="0" y="1" width="1" height="1" fill="#000000"/><rect x="1" y="1" width="14" height="1" fill="#FFFFFF"/><rect x="15" y="1" width="1" height="1" fill="#000000"/><rect x="0" y="2" width="1" height="1" fill="#000000"/><rect x="1" y="2" width="1" height="1" fill="#FFFFFF"/><rect x="2" y="2" width="5" height="1" fill="#E6E6E6"/><rect x="7" y="2" width="1" height="1" fill="#0000FF"/><rect x="8" y="2" width="6" height="1" fill="#E6E6E6"/><rect x="14" y="2" width="1" height="1" fill="#FFFFFF"/><rect x="15" y="2" width="1" height="1" fill="#000000"/><rect x="0" y="3" width="1" height="1" fill="#000000"/><rect x="1" y="3" width="1" height="1" fill="#FFFFFF"/><rect x="2" y="3" width="4" height="1" fill="#E6E6E6"/><rect x="6" y="3" width="3" height="1" fill="#0000FF"/><rect x="9" y="3" width="5" height="1" fill="#E6E6E6"/><rect x="14" y="3" width="1" height="1" fill="#FFFFFF"/><rect x="15" y="3" width="1" height="1" fill="#000000"/><rect x="0" y="4" width="1" height="1" fill="#000000"/><rect x="1" y="4" width="1" height="1" fill="#FFFFFF"/><rect x="2" y="4" width="3" height="1" fill="#E6E6E6"/><rect x="5" y="4" width="1" height="1" fill="#0000FF"/><rect x="6" y="4" width="1" height="1" fill="#E6E6E6"/><rect x="7" y="4" width="1" height="1" fill="#0000FF"/><rect x="8" y="4" width="1" height="1" fill="#E6E6E6"/><rect x="9" y="4" width="1" height="1" fill="#0000FF"/><rect x="10" y="4" width="4" height="1" fill="#E6E6E6"/><rect x="14" y="4" width="1" height="1" fill="#FFFFFF"/><rect x="15" y="4" width="1" height="1" fill="#000000"/><rect x="0" y="5" width="1" height="1" fill="#000000"/><rect x="1" y="5" width="1" height="1" fill="#FFFFFF"/><rect x="2" y="5" width="2" height="1" fill="#E6E6E6"/><rect x="4" y="5" width="1" height="1" fill="#0000FF"/><rect x="5" y="5" width="2" height="1" fill="#E6E6E6"/><rect x="7" y="5" width="1" height="1" fill="#0000FF"/><rect x="8" y="5" width="2" height="1" fill="#E6E6E6"/><rect x="10" y="5" width="1" height="1" fill="#0000FF"/><rect x="11" y="5" width="3" height="1" fill="#E6E6E6"/><rect x="14" y="5" width="1" height="1" fill="#FFFFFF"/><rect x="15" y="5" width="1" height="1" fill="#000000"/><rect x="0" y="6" width="1" height="1" fill="#000000"/><rect x="1" y="6" width="1" height="1" fill="#FFFFFF"/><rect x="2" y="6" width="5" height="1" fill="#E6E6E6"/><rect x="7" y="6" width="1" height="1" fill="#0000FF"/><rect x="8" y="6" width="6" height="1" fill="#E6E6E6"/><rect x="14" y="6" width="1" height="1" fill="#FFFFFF"/><rect x="15" y="6" width="1" height="1" fill="#000000"/><rect x="0" y="7" width="1" height="1" fill="#000000"/><rect x="1" y="7" width="1" height="1" fill="#FFFFFF"/><rect x="2" y="7" width="5" height="1" fill="#E6E6E6"/><rect x="7" y="7" width="1" height="1" fill="#0000FF"/><rect x="8" y="7" width="6" height="1" fill="#E6E6E6"/><rect x="14" y="7" width="1" height="1" fill="#FFFFFF"/><rect x="15" y="7" width="1" height="1" fill="#000000"/><rect x="0" y="8" width="1" height="1" fill="#000000"/><rect x="1" y="8" width="1" height="1" fill="#FFFFFF"/><rect x="2" y="8" width="5" height="1" fill="#E6E6E6"/><rect x="7" y="8" width="1" height="1" fill="#0000FF"/><rect x="8" y="8" width="6" height="1" fill="#E6E6E6"/><rect x="14" y="8" width="1" height="1" fill="#FFFFFF"/><rect x="15" y="8" width="1" height="1" fill="#000000"/><rect x="0" y="9" width="1" height="1" fill="#000000"/><rect x="1" y="9" width="1" height="1" fill="#FFFFFF"/><rect x="2" y="9" width="5" height="1" fill="#E6E6E6"/><rect x="7" y="9" width="1" height="1" fill="#0000FF"/><rect x="8" y="9" width="6" height="1" fill="#E6E6E6"/><rect x="14" y="9" width="1" height="1" fill="#FFFFFF"/><rect x="15" y="9" width="1" height="1" fill="#000000"/><rect x="0" y="10" width="1" height="1" fill="#000000"/><rect x="1" y="10" width="1" height="1" fill="#FFFFFF"/><rect x="2" y="10" width="5" height="1" fill="#E6E6E6"/><rect x="7" y="10" width="1" height="1" fill="#0000FF"/><rect x="8" y="10" width="6" height="1" fill="#E6E6E6"/><rect x="14" y="10" width="1" height="1" fill="#FFFFFF"/><rect x="15" y="10" width="1" height="1" fill="#000000"/><rect x="0" y="11" width="1" height="1" fill="#000000"/><rect x="1" y="11" width="1" height="1" fill="#FFFFFF"/><rect x="2" y="11" width="5" height="1" fill="#E6E6E6"/><rect x="7" y="11" width="1" height="1" fill="#0000FF"/><rect x="8" y="11" width="6" height="1" fill="#E6E6E6"/><rect x="14" y="11" width="1" height="1" fill="#FFFFFF"/><rect x="15" y="11" width="1" height="1" fill="#000000"/><rect x="0" y="12" width="1" height="1" fill="#000000"/><rect x="1" y="12" width="1" height="1" fill="#FFFFFF"/><rect x="2" y="12" width="5" height="1" fill="#E6E6E6"/><rect x="7" y="12" width="1" height="1" fill="#0000FF"/><rect x="8" y="12" width="6" height="1" fill="#E6E6E6"/><rect x="14" y="12" width="1" height="1" fill="#FFFFFF"/><rect x="15" y="12" width="1" height="1" fill="#000000"/><rect x="0" y="13" width="1" height="1" fill="#000000"/><rect x="1" y="13" width="1" height="1" fill="#FFFFFF"/><rect x="2" y="13" width="5" height="1" fill="#E6E6E6"/><rect x="7" y="13" width="1" height="1" fill="#0000FF"/><rect x="8" y="13" width="6" height="1" fill="#E6E6E6"/><rect x="14" y="13" width="1" height="1" fill="#FFFFFF"/><rect x="15" y="13" width="1" height="1" fill="#000000"/><rect x="0" y="14" width="1" height="1" fill="#000000"/><rect x="1" y="14" width="6" height="1" fill="#FFFFFF"/><rect x="7" y="14" width="1" height="1" fill="#0000FF"/><rect x="8" y="14" width="7" height="1" fill="#FFFFFF"/><rect x="15" y="14" width="1" height="1" fill="#000000"/><rect x="0" y="15" width="7" height="1" fill="#000000"/><rect x="7" y="15" width="1" height="1" fill="#0000FF"/><rect x="8" y="15" width="8" height="1" fill="#000000"/></svg>
<svg style="position:absolute;left:442px;top:50px;" width="16" height="16" viewBox="0 0 16 16" shape-rendering="crispEdges"><rect x="0" y="0" width="16" height="1" fill="#E6E6E6"/><rect x="0" y="1" width="16" height="1" fill="#E6E6E6"/><rect x="0" y="2" width="16" height="1" fill="#E6E6E6"/><rect x="0" y="3" width="16" height="1" fill="#E6E6E6"/><rect x="0" y="4" width="16" height="1" fill="#E6E6E6"/><rect x="0" y="5" width="4" height="1" fill="#E6E6E6"/><rect x="4" y="5" width="12" height="1" fill="#0000FF"/><rect x="0" y="6" width="4" height="1" fill="#E6E6E6"/><rect x="4" y="6" width="1" height="1" fill="#0000FF"/><rect x="5" y="6" width="11" height="1" fill="#E6E6E6"/><rect x="0" y="7" width="4" height="1" fill="#E6E6E6"/><rect x="4" y="7" width="1" height="1" fill="#0000FF"/><rect x="5" y="7" width="11" height="1" fill="#E6E6E6"/><rect x="0" y="8" width="4" height="1" fill="#E6E6E6"/><rect x="4" y="8" width="1" height="1" fill="#0000FF"/><rect x="5" y="8" width="11" height="1" fill="#E6E6E6"/><rect x="0" y="9" width="4" height="1" fill="#E6E6E6"/><rect x="4" y="9" width="1" height="1" fill="#0000FF"/><rect x="5" y="9" width="11" height="1" fill="#E6E6E6"/><rect x="0" y="10" width="4" height="1" fill="#E6E6E6"/><rect x="4" y="10" width="1" height="1" fill="#0000FF"/><rect x="5" y="10" width="11" height="1" fill="#E6E6E6"/><rect x="0" y="11" width="4" height="1" fill="#E6E6E6"/><rect x="4" y="11" width="1" height="1" fill="#0000FF"/><rect x="5" y="11" width="11" height="1" fill="#E6E6E6"/><rect x="0" y="12" width="5" height="1" fill="#0000FF"/><rect x="5" y="12" width="11" height="1" fill="#E6E6E6"/><rect x="0" y="13" width="16" height="1" fill="#E6E6E6"/><rect x="0" y="14" width="16" height="1" fill="#E6E6E6"/><rect x="0" y="15" width="16" height="1" fill="#E6E6E6"/></svg>
<svg style="position:absolute;left:466px;top:50px;" width="16" height="16" viewBox="0 0 16 16" shape-rendering="crispEdges"><rect x="0" y="0" width="8" height="1" fill="#808080"/><rect x="8" y="0" width="1" height="1" fill="#0000FF"/><rect x="9" y="0" width="7" height="1" fill="#808080"/><rect x="0" y="1" width="6" height="1" fill="#808080"/><rect x="6" y="1" width="5" height="1" fill="#0000FF"/><rect x="11" y="1" width="5" height="1" fill="#808080"/><rect x="0" y="2" width="4" height="1" fill="#808080"/><rect x="4" y="2" width="2" height="1" fill="#0000FF"/><rect x="6" y="2" width="2" height="1" fill="#FFFFFF"/><rect x="8" y="2" width="1" height="1" fill="#0000FF"/><rect x="9" y="2" width="2" height="1" fill="#FFFFFF"/><rect x="11" y="2" width="2" height="1" fill="#0000FF"/><rect x="13" y="2" width="3" height="1" fill="#808080"/><rect x="0" y="3" width="3" height="1" fill="#808080"/><rect x="3" y="3" width="1" height="1" fill="#0000FF"/><rect x="4" y="3" width="4" height="1" fill="#FFFFFF"/><rect x="8" y="3" width="1" height="1" fill="#0000FF"/><rect x="9" y="3" width="4" height="1" fill="#FFFFFF"/><rect x="13" y="3" width="1" height="1" fill="#0000FF"/><rect x="14" y="3" width="2" height="1" fill="#808080"/><rect x="0" y="4" width="2" height="1" fill="#808080"/><rect x="2" y="4" width="1" height="1" fill="#0000FF"/><rect x="3" y="4" width="2" height="1" fill="#FFFFFF"/><rect x="5" y="4" width="1" height="1" fill="#0000FF"/><rect x="6" y="4" width="2" height="1" fill="#FFFFFF"/><rect x="8" y="4" width="1" height="1" fill="#0000FF"/><rect x="9" y="4" width="1" height="1" fill="#FFFFFF"/><rect x="10" y="4" width="1" height="1" fill="#0000FF"/><rect x="11" y="4" width="1" height="1" fill="#FFFFFF"/><rect x="12" y="4" width="1" height="1" fill="#0000FF"/><rect x="13" y="4" width="1" height="1" fill="#FFFFFF"/><rect x="14" y="4" width="1" height="1" fill="#0000FF"/><rect x="15" y="4" width="1" height="1" fill="#808080"/><rect x="0" y="5" width="2" height="1" fill="#808080"/><rect x="2" y="5" width="1" height="1" fill="#0000FF"/><rect x="3" y="5" width="1" height="1" fill="#FFFFFF"/><rect x="4" y="5" width="1" height="1" fill="#0000FF"/><rect x="5" y="5" width="1" height="1" fill="#FFFFFF"/><rect x="6" y="5" width="1" height="1" fill="#0000FF"/><rect x="7" y="5" width="1" height="1" fill="#FFFFFF"/><rect x="8" y="5" width="1" height="1" fill="#0000FF"/><rect x="9" y="5" width="2" height="1" fill="#FFFFFF"/><rect x="11" y="5" width="1" height="1" fill="#0000FF"/><rect x="12" y="5" width="2" height="1" fill="#FFFFFF"/><rect x="14" y="5" width="1" height="1" fill="#0000FF"/><rect x="15" y="5" width="1" height="1" fill="#808080"/><rect x="0" y="6" width="1" height="1" fill="#808080"/><rect x="1" y="6" width="1" height="1" fill="#0000FF"/><rect x="2" y="6" width="3" height="1" fill="#FFFFFF"/><rect x="5" y="6" width="1" height="1" fill="#0000FF"/><rect x="6" y="6" width="2" height="1" fill="#FFFFFF"/><rect x="8" y="6" width="1" height="1" fill="#0000FF"/><rect x="9" y="6" width="1" height="1" fill="#FFFFFF"/><rect x="10" y="6" width="1" height="1" fill="#0000FF"/><rect x="11" y="6" width="1" height="1" fill="#FFFFFF"/><rect x="12" y="6" width="1" height="1" fill="#0000FF"/><rect x="13" y="6" width="2" height="1" fill="#FFFFFF"/><rect x="15" y="6" width="1" height="1" fill="#0000FF"/><rect x="0" y="7" width="1" height="1" fill="#808080"/><rect x="1" y="7" width="1" height="1" fill="#0000FF"/><rect x="2" y="7" width="6" height="1" fill="#FFFFFF"/><rect x="8" y="7" width="1" height="1" fill="#0000FF"/><rect x="9" y="7" width="6" height="1" fill="#FFFFFF"/><rect x="15" y="7" width="1" height="1" fill="#0000FF"/><rect x="0" y="8" width="16" height="1" fill="#0000FF"/><rect x="0" y="9" width="1" height="1" fill="#808080"/><rect x="1" y="9" width="1" height="1" fill="#0000FF"/><rect x="2" y="9" width="6" height="1" fill="#FFFFFF"/><rect x="8" y="9" width="1" height="1" fill="#0000FF"/><rect x="9" y="9" width="6" height="1" fill="#FFFFFF"/><rect x="15" y="9" width="1" height="1" fill="#0000FF"/><rect x="0" y="10" width="1" height="1" fill="#808080"/><rect x="1" y="10" width="1" height="1" fill="#0000FF"/><rect x="2" y="10" width="3" height="1" fill="#FFFFFF"/><rect x="5" y="10" width="1" height="1" fill="#0000FF"/><rect x="6" y="10" width="2" height="1" fill="#FFFFFF"/><rect x="8" y="10" width="1" height="1" fill="#0000FF"/><rect x="9" y="10" width="1" height="1" fill="#FFFFFF"/><rect x="10" y="10" width="1" height="1" fill="#0000FF"/><rect x="11" y="10" width="1" height="1" fill="#FFFFFF"/><rect x="12" y="10" width="1" height="1" fill="#0000FF"/><rect x="13" y="10" width="2" height="1" fill="#FFFFFF"/><rect x="15" y="10" width="1" height="1" fill="#0000FF"/><rect x="0" y="11" width="2" height="1" fill="#808080"/><rect x="2" y="11" width="1" height="1" fill="#0000FF"/><rect x="3" y="11" width="1" height="1" fill="#FFFFFF"/><rect x="4" y="11" width="1" height="1" fill="#0000FF"/><rect x="5" y="11" width="1" height="1" fill="#FFFFFF"/><rect x="6" y="11" width="1" height="1" fill="#0000FF"/><rect x="7" y="11" width="1" height="1" fill="#FFFFFF"/><rect x="8" y="11" width="1" height="1" fill="#0000FF"/><rect x="9" y="11" width="2" height="1" fill="#FFFFFF"/><rect x="11" y="11" width="1" height="1" fill="#0000FF"/><rect x="12" y="11" width="2" height="1" fill="#FFFFFF"/><rect x="14" y="11" width="1" height="1" fill="#0000FF"/><rect x="15" y="11" width="1" height="1" fill="#808080"/><rect x="0" y="12" width="2" height="1" fill="#808080"/><rect x="2" y="12" width="1" height="1" fill="#0000FF"/><rect x="3" y="12" width="2" height="1" fill="#FFFFFF"/><rect x="5" y="12" width="1" height="1" fill="#0000FF"/><rect x="6" y="12" width="2" height="1" fill="#FFFFFF"/><rect x="8" y="12" width="1" height="1" fill="#0000FF"/><rect x="9" y="12" width="1" height="1" fill="#FFFFFF"/><rect x="10" y="12" width="1" height="1" fill="#0000FF"/><rect x="11" y="12" width="1" height="1" fill="#FFFFFF"/><rect x="12" y="12" width="1" height="1" fill="#0000FF"/><rect x="13" y="12" width="1" height="1" fill="#FFFFFF"/><rect x="14" y="12" width="1" height="1" fill="#0000FF"/><rect x="15" y="12" width="1" height="1" fill="#808080"/><rect x="0" y="13" width="3" height="1" fill="#808080"/><rect x="3" y="13" width="1" height="1" fill="#0000FF"/><rect x="4" y="13" width="4" height="1" fill="#FFFFFF"/><rect x="8" y="13" width="1" height="1" fill="#0000FF"/><rect x="9" y="13" width="4" height="1" fill="#FFFFFF"/><rect x="13" y="13" width="1" height="1" fill="#0000FF"/><rect x="14" y="13" width="2" height="1" fill="#808080"/><rect x="0" y="14" width="4" height="1" fill="#808080"/><rect x="4" y="14" width="2" height="1" fill="#0000FF"/><rect x="6" y="14" width="2" height="1" fill="#FFFFFF"/><rect x="8" y="14" width="1" height="1" fill="#0000FF"/><rect x="9" y="14" width="2" height="1" fill="#FFFFFF"/><rect x="11" y="14" width="2" height="1" fill="#0000FF"/><rect x="13" y="14" width="3" height="1" fill="#808080"/><rect x="0" y="15" width="6" height="1" fill="#808080"/><rect x="6" y="15" width="5" height="1" fill="#0000FF"/><rect x="11" y="15" width="5" height="1" fill="#808080"/></svg>
<svg style="position:absolute;left:490px;top:50px;" width="16" height="16" viewBox="0 0 16 16" shape-rendering="crispEdges"><rect x="0" y="0" width="3" height="1" fill="#0000FF"/><rect x="3" y="0" width="10" height="1" fill="#FFFFFF"/><rect x="13" y="0" width="3" height="1" fill="#0000FF"/><rect x="0" y="1" width="1" height="1" fill="#0000FF"/><rect x="1" y="1" width="3" height="1" fill="#FFFFFF"/><rect x="4" y="1" width="9" height="1" fill="#E6E6E6"/><rect x="13" y="1" width="2" height="1" fill="#FFFFFF"/><rect x="15" y="1" width="1" height="1" fill="#0000FF"/><rect x="0" y="2" width="1" height="1" fill="#0000FF"/><rect x="1" y="2" width="1" height="1" fill="#FFFFFF"/><rect x="2" y="2" width="12" height="1" fill="#E6E6E6"/><rect x="14" y="2" width="1" height="1" fill="#FFFFFF"/><rect x="15" y="2" width="1" height="1" fill="#0000FF"/><rect x="0" y="3" width="1" height="1" fill="#0000FF"/><rect x="1" y="3" width="1" height="1" fill="#FFFFFF"/><rect x="2" y="3" width="12" height="1" fill="#E6E6E6"/><rect x="14" y="3" width="1" height="1" fill="#FFFFFF"/><rect x="15" y="3" width="1" height="1" fill="#0000FF"/><rect x="0" y="4" width="1" height="1" fill="#0000FF"/><rect x="1" y="4" width="1" height="1" fill="#FFFFFF"/><rect x="2" y="4" width="12" height="1" fill="#E6E6E6"/><rect x="14" y="4" width="1" height="1" fill="#FFFFFF"/><rect x="15" y="4" width="1" height="1" fill="#0000FF"/><rect x="0" y="5" width="1" height="1" fill="#0000FF"/><rect x="1" y="5" width="1" height="1" fill="#FFFFFF"/><rect x="2" y="5" width="1" height="1" fill="#0000FF"/><rect x="3" y="5" width="11" height="1" fill="#E6E6E6"/><rect x="14" y="5" width="1" height="1" fill="#FFFFFF"/><rect x="15" y="5" width="1" height="1" fill="#0000FF"/><rect x="0" y="6" width="1" height="1" fill="#0000FF"/><rect x="1" y="6" width="1" height="1" fill="#FFFFFF"/><rect x="2" y="6" width="1" height="1" fill="#0000FF"/><rect x="3" y="6" width="11" height="1" fill="#E6E6E6"/><rect x="14" y="6" width="1" height="1" fill="#FFFFFF"/><rect x="15" y="6" width="1" height="1" fill="#0000FF"/><rect x="0" y="7" width="1" height="1" fill="#0000FF"/><rect x="1" y="7" width="1" height="1" fill="#FFFFFF"/><rect x="2" y="7" width="1" height="1" fill="#0000FF"/><rect x="3" y="7" width="11" height="1" fill="#E6E6E6"/><rect x="14" y="7" width="1" height="1" fill="#FFFFFF"/><rect x="15" y="7" width="1" height="1" fill="#0000FF"/><rect x="0" y="8" width="1" height="1" fill="#0000FF"/><rect x="1" y="8" width="1" height="1" fill="#FFFFFF"/><rect x="2" y="8" width="1" height="1" fill="#0000FF"/><rect x="3" y="8" width="11" height="1" fill="#E6E6E6"/><rect x="14" y="8" width="1" height="1" fill="#FFFFFF"/><rect x="15" y="8" width="1" height="1" fill="#0000FF"/><rect x="0" y="9" width="1" height="1" fill="#0000FF"/><rect x="1" y="9" width="1" height="1" fill="#FFFFFF"/><rect x="2" y="9" width="4" height="1" fill="#0000FF"/><rect x="6" y="9" width="1" height="1" fill="#FFFFFF"/><rect x="7" y="9" width="2" height="1" fill="#E6E6E6"/><rect x="9" y="9" width="3" height="1" fill="#0000FF"/><rect x="12" y="9" width="2" height="1" fill="#E6E6E6"/><rect x="14" y="9" width="1" height="1" fill="#FFFFFF"/><rect x="15" y="9" width="1" height="1" fill="#0000FF"/><rect x="0" y="10" width="1" height="1" fill="#0000FF"/><rect x="1" y="10" width="1" height="1" fill="#FFFFFF"/><rect x="2" y="10" width="1" height="1" fill="#0000FF"/><rect x="3" y="10" width="1" height="1" fill="#FFFFFF"/><rect x="4" y="10" width="2" height="1" fill="#E6E6E6"/><rect x="6" y="10" width="1" height="1" fill="#0000FF"/><rect x="7" y="10" width="1" height="1" fill="#FFFFFF"/><rect x="8" y="10" width="1" height="1" fill="#0000FF"/><rect x="9" y="10" width="1" height="1" fill="#FFFFFF"/><rect x="10" y="10" width="2" height="1" fill="#E6E6E6"/><rect x="12" y="10" width="1" height="1" fill="#0000FF"/><rect x="13" y="10" width="1" height="1" fill="#E6E6E6"/><rect x="14" y="10" width="1" height="1" fill="#FFFFFF"/><rect x="15" y="10" width="1" height="1" fill="#0000FF"/><rect x="0" y="11" width="1" height="1" fill="#0000FF"/><rect x="1" y="11" width="1" height="1" fill="#FFFFFF"/><rect x="2" y="11" width="1" height="1" fill="#0000FF"/><rect x="3" y="11" width="1" height="1" fill="#FFFFFF"/><rect x="4" y="11" width="2" height="1" fill="#E6E6E6"/><rect x="6" y="11" width="1" height="1" fill="#0000FF"/><rect x="7" y="11" width="1" height="1" fill="#FFFFFF"/><rect x="8" y="11" width="1" height="1" fill="#0000FF"/><rect x="9" y="11" width="1" height="1" fill="#FFFFFF"/><rect x="10" y="11" width="2" height="1" fill="#E6E6E6"/><rect x="12" y="11" width="1" height="1" fill="#0000FF"/><rect x="13" y="11" width="1" height="1" fill="#E6E6E6"/><rect x="14" y="11" width="1" height="1" fill="#FFFFFF"/><rect x="15" y="11" width="1" height="1" fill="#0000FF"/><rect x="0" y="12" width="1" height="1" fill="#0000FF"/><rect x="1" y="12" width="1" height="1" fill="#FFFFFF"/><rect x="2" y="12" width="1" height="1" fill="#0000FF"/><rect x="3" y="12" width="1" height="1" fill="#FFFFFF"/><rect x="4" y="12" width="2" height="1" fill="#E6E6E6"/><rect x="6" y="12" width="1" height="1" fill="#0000FF"/><rect x="7" y="12" width="1" height="1" fill="#FFFFFF"/><rect x="8" y="12" width="1" height="1" fill="#0000FF"/><rect x="9" y="12" width="1" height="1" fill="#FFFFFF"/><rect x="10" y="12" width="2" height="1" fill="#E6E6E6"/><rect x="12" y="12" width="1" height="1" fill="#0000FF"/><rect x="13" y="12" width="1" height="1" fill="#E6E6E6"/><rect x="14" y="12" width="1" height="1" fill="#FFFFFF"/><rect x="15" y="12" width="1" height="1" fill="#0000FF"/><rect x="0" y="13" width="1" height="1" fill="#0000FF"/><rect x="1" y="13" width="2" height="1" fill="#FFFFFF"/><rect x="3" y="13" width="3" height="1" fill="#0000FF"/><rect x="6" y="13" width="1" height="1" fill="#FFFFFF"/><rect x="7" y="13" width="1" height="1" fill="#0000FF"/><rect x="8" y="13" width="1" height="1" fill="#FFFFFF"/><rect x="9" y="13" width="3" height="1" fill="#0000FF"/><rect x="12" y="13" width="1" height="1" fill="#FFFFFF"/><rect x="13" y="13" width="1" height="1" fill="#0000FF"/><rect x="14" y="13" width="1" height="1" fill="#FFFFFF"/><rect x="15" y="13" width="1" height="1" fill="#0000FF"/><rect x="0" y="14" width="1" height="1" fill="#0000FF"/><rect x="1" y="14" width="6" height="1" fill="#FFFFFF"/><rect x="7" y="14" width="1" height="1" fill="#0000FF"/><rect x="8" y="14" width="7" height="1" fill="#FFFFFF"/><rect x="15" y="14" width="1" height="1" fill="#0000FF"/><rect x="0" y="15" width="3" height="1" fill="#0000FF"/><rect x="3" y="15" width="3" height="1" fill="#FFFFFF"/><rect x="6" y="15" width="1" height="1" fill="#0000FF"/><rect x="7" y="15" width="6" height="1" fill="#FFFFFF"/><rect x="13" y="15" width="3" height="1" fill="#0000FF"/></svg>
<svg style="position:absolute;left:514px;top:50px;" width="16" height="16" viewBox="0 0 16 16" shape-rendering="crispEdges"><rect x="0" y="0" width="16" height="1" fill="#808080"/><rect x="0" y="1" width="1" height="1" fill="#808080"/><rect x="1" y="1" width="14" height="1" fill="#C4C4C4"/><rect x="15" y="1" width="1" height="1" fill="#808080"/><rect x="0" y="2" width="1" height="1" fill="#808080"/><rect x="1" y="2" width="14" height="1" fill="#C4C4C4"/><rect x="15" y="2" width="1" height="1" fill="#808080"/><rect x="0" y="3" width="1" height="1" fill="#808080"/><rect x="1" y="3" width="14" height="1" fill="#C4C4C4"/><rect x="15" y="3" width="1" height="1" fill="#808080"/><rect x="0" y="4" width="1" height="1" fill="#808080"/><rect x="1" y="4" width="14" height="1" fill="#C4C4C4"/><rect x="15" y="4" width="1" height="1" fill="#808080"/><rect x="0" y="5" width="4" height="1" fill="#808080"/><rect x="4" y="5" width="11" height="1" fill="#C4C4C4"/><rect x="15" y="5" width="1" height="1" fill="#808080"/><rect x="0" y="6" width="5" height="1" fill="#808080"/><rect x="5" y="6" width="10" height="1" fill="#C4C4C4"/><rect x="15" y="6" width="1" height="1" fill="#808080"/><rect x="0" y="7" width="6" height="1" fill="#808080"/><rect x="6" y="7" width="9" height="1" fill="#C4C4C4"/><rect x="15" y="7" width="1" height="1" fill="#808080"/><rect x="0" y="8" width="7" height="1" fill="#808080"/><rect x="7" y="8" width="8" height="1" fill="#C4C4C4"/><rect x="15" y="8" width="1" height="1" fill="#808080"/><rect x="0" y="9" width="8" height="1" fill="#808080"/><rect x="8" y="9" width="1" height="1" fill="#C4C4C4"/><rect x="9" y="9" width="2" height="1" fill="#808080"/><rect x="11" y="9" width="1" height="1" fill="#C4C4C4"/><rect x="12" y="9" width="2" height="1" fill="#808080"/><rect x="14" y="9" width="1" height="1" fill="#C4C4C4"/><rect x="15" y="9" width="1" height="1" fill="#808080"/><rect x="0" y="10" width="9" height="1" fill="#808080"/><rect x="9" y="10" width="2" height="1" fill="#C4C4C4"/><rect x="11" y="10" width="1" height="1" fill="#808080"/><rect x="12" y="10" width="3" height="1" fill="#C4C4C4"/><rect x="15" y="10" width="1" height="1" fill="#808080"/><rect x="0" y="11" width="9" height="1" fill="#808080"/><rect x="9" y="11" width="6" height="1" fill="#C4C4C4"/><rect x="15" y="11" width="1" height="1" fill="#808080"/><rect x="0" y="12" width="9" height="1" fill="#808080"/><rect x="9" y="12" width="6" height="1" fill="#C4C4C4"/><rect x="15" y="12" width="1" height="1" fill="#808080"/><rect x="0" y="13" width="9" height="1" fill="#808080"/><rect x="9" y="13" width="6" height="1" fill="#C4C4C4"/><rect x="15" y="13" width="1" height="1" fill="#808080"/><rect x="0" y="14" width="9" height="1" fill="#808080"/><rect x="9" y="14" width="6" height="1" fill="#C4C4C4"/><rect x="15" y="14" width="1" height="1" fill="#808080"/><rect x="0" y="15" width="16" height="1" fill="#808080"/></svg>
<svg style="position:absolute;left:546px;top:50px;" width="16" height="16" viewBox="0 0 16 16" shape-rendering="crispEdges"><rect x="0" y="0" width="7" height="1" fill="#FFFFFF"/><rect x="7" y="0" width="1" height="1" fill="#000000"/><rect x="8" y="0" width="4" height="1" fill="#FFFFFF"/><rect x="12" y="0" width="4" height="1" fill="#0000FF"/><rect x="0" y="1" width="6" height="1" fill="#FFFFFF"/><rect x="6" y="1" width="3" height="1" fill="#000000"/><rect x="9" y="1" width="3" height="1" fill="#FFFFFF"/><rect x="12" y="1" width="1" height="1" fill="#0000FF"/><rect x="13" y="1" width="3" height="1" fill="#FFFFFF"/><rect x="0" y="2" width="7" height="1" fill="#FFFFFF"/><rect x="7" y="2" width="1" height="1" fill="#000000"/><rect x="8" y="2" width="4" height="1" fill="#FFFFFF"/><rect x="12" y="2" width="1" height="1" fill="#0000FF"/><rect x="13" y="2" width="3" height="1" fill="#FFFFFF"/><rect x="0" y="3" width="12" height="1" fill="#FFFFFF"/><rect x="12" y="3" width="1" height="1" fill="#0000FF"/><rect x="13" y="3" width="3" height="1" fill="#FFFFFF"/><rect x="0" y="4" width="7" height="1" fill="#FFFFFF"/><rect x="7" y="4" width="1" height="1" fill="#000000"/><rect x="8" y="4" width="5" height="1" fill="#0000FF"/><rect x="13" y="4" width="3" height="1" fill="#FFFFFF"/><rect x="0" y="5" width="8" height="1" fill="#FFFFFF"/><rect x="8" y="5" width="1" height="1" fill="#0000FF"/><rect x="9" y="5" width="7" height="1" fill="#FFFFFF"/><rect x="0" y="6" width="7" height="1" fill="#FFFFFF"/><rect x="7" y="6" width="1" height="1" fill="#000000"/><rect x="8" y="6" width="1" height="1" fill="#0000FF"/><rect x="9" y="6" width="7" height="1" fill="#FFFFFF"/><rect x="0" y="7" width="8" height="1" fill="#FFFFFF"/><rect x="8" y="7" width="1" height="1" fill="#0000FF"/><rect x="9" y="7" width="5" height="1" fill="#FFFFFF"/><rect x="14" y="7" width="1" height="1" fill="#000000"/><rect x="15" y="7" width="1" height="1" fill="#FFFFFF"/><rect x="0" y="8" width="1" height="1" fill="#000000"/><rect x="1" y="8" width="1" height="1" fill="#FFFFFF"/><rect x="2" y="8" width="1" height="1" fill="#000000"/><rect x="3" y="8" width="1" height="1" fill="#FFFFFF"/><rect x="4" y="8" width="5" height="1" fill="#0000FF"/><rect x="9" y="8" width="1" height="1" fill="#000000"/><rect x="10" y="8" width="1" height="1" fill="#FFFFFF"/><rect x="11" y="8" width="1" height="1" fill="#000000"/><rect x="12" y="8" width="1" height="1" fill="#FFFFFF"/><rect x="13" y="8" width="3" height="1" fill="#000000"/><rect x="0" y="9" width="4" height="1" fill="#FFFFFF"/><rect x="4" y="9" width="1" height="1" fill="#0000FF"/><rect x="5" y="9" width="2" height="1" fill="#FFFFFF"/><rect x="7" y="9" width="1" height="1" fill="#000000"/><rect x="8" y="9" width="6" height="1" fill="#FFFFFF"/><rect x="14" y="9" width="1" height="1" fill="#000000"/><rect x="15" y="9" width="1" height="1" fill="#FFFFFF"/><rect x="0" y="10" width="4" height="1" fill="#FFFFFF"/><rect x="4" y="10" width="1" height="1" fill="#0000FF"/><rect x="5" y="10" width="11" height="1" fill="#FFFFFF"/><rect x="0" y="11" width="4" height="1" fill="#FFFFFF"/><rect x="4" y="11" width="1" height="1" fill="#0000FF"/><rect x="5" y="11" width="2" height="1" fill="#FFFFFF"/><rect x="7" y="11" width="1" height="1" fill="#000000"/><rect x="8" y="11" width="8" height="1" fill="#FFFFFF"/><rect x="0" y="12" width="5" height="1" fill="#0000FF"/><rect x="5" y="12" width="11" height="1" fill="#FFFFFF"/><rect x="0" y="13" width="1" height="1" fill="#0000FF"/><rect x="1" y="13" width="6" height="1" fill="#FFFFFF"/><rect x="7" y="13" width="1" height="1" fill="#000000"/><rect x="8" y="13" width="8" height="1" fill="#FFFFFF"/><rect x="0" y="14" width="1" height="1" fill="#0000FF"/><rect x="1" y="14" width="15" height="1" fill="#FFFFFF"/><rect x="0" y="15" width="1" height="1" fill="#0000FF"/><rect x="1" y="15" width="6" height="1" fill="#FFFFFF"/><rect x="7" y="15" width="1" height="1" fill="#000000"/><rect x="8" y="15" width="8" height="1" fill="#FFFFFF"/></svg>
<svg style="position:absolute;left:578px;top:50px;" width="16" height="15" viewBox="0 0 16 15" shape-rendering="crispEdges"><rect x="0" y="0" width="1" height="1" fill="#FFFFFF"/><rect x="9" y="0" width="5" height="1" fill="#000080"/><rect x="0" y="1" width="1" height="1" fill="#000000"/><rect x="1" y="1" width="1" height="1" fill="#FFFFFF"/><rect x="7" y="1" width="2" height="1" fill="#000080"/><rect x="13" y="1" width="2" height="1" fill="#000080"/><rect x="0" y="2" width="2" height="1" fill="#000000"/><rect x="2" y="2" width="1" height="1" fill="#FFFFFF"/><rect x="7" y="2" width="2" height="1" fill="#000080"/><rect x="13" y="2" width="2" height="1" fill="#000080"/><rect x="0" y="3" width="3" height="1" fill="#000000"/><rect x="3" y="3" width="1" height="1" fill="#FFFFFF"/><rect x="7" y="3" width="2" height="1" fill="#000080"/><rect x="13" y="3" width="2" height="1" fill="#000080"/><rect x="0" y="4" width="4" height="1" fill="#000000"/><rect x="4" y="4" width="1" height="1" fill="#FFFFFF"/><rect x="13" y="4" width="2" height="1" fill="#000080"/><rect x="0" y="5" width="5" height="1" fill="#000000"/><rect x="5" y="5" width="1" height="1" fill="#FFFFFF"/><rect x="12" y="5" width="2" height="1" fill="#000080"/><rect x="0" y="6" width="6" height="1" fill="#000000"/><rect x="6" y="6" width="1" height="1" fill="#FFFFFF"/><rect x="11" y="6" width="2" height="1" fill="#000080"/><rect x="0" y="7" width="7" height="1" fill="#000000"/><rect x="7" y="7" width="1" height="1" fill="#FFFFFF"/><rect x="11" y="7" width="2" height="1" fill="#000080"/><rect x="0" y="8" width="8" height="1" fill="#000000"/><rect x="8" y="8" width="1" height="1" fill="#FFFFFF"/><rect x="11" y="8" width="2" height="1" fill="#000080"/><rect x="0" y="9" width="3" height="1" fill="#000000"/><rect x="3" y="9" width="1" height="1" fill="#FFFFFF"/><rect x="4" y="9" width="2" height="1" fill="#000000"/><rect x="6" y="9" width="2" height="1" fill="#FFFFFF"/><rect x="11" y="9" width="2" height="1" fill="#000080"/><rect x="0" y="10" width="2" height="1" fill="#000000"/><rect x="2" y="10" width="3" height="1" fill="#FFFFFF"/><rect x="5" y="10" width="2" height="1" fill="#000000"/><rect x="7" y="10" width="1" height="1" fill="#FFFFFF"/><rect x="11" y="10" width="2" height="1" fill="#000080"/><rect x="0" y="11" width="1" height="1" fill="#000000"/><rect x="1" y="11" width="1" height="1" fill="#FFFFFF"/><rect x="4" y="11" width="1" height="1" fill="#FFFFFF"/><rect x="5" y="11" width="2" height="1" fill="#000000"/><rect x="7" y="11" width="1" height="1" fill="#FFFFFF"/><rect x="0" y="12" width="1" height="1" fill="#FFFFFF"/><rect x="5" y="12" width="1" height="1" fill="#FFFFFF"/><rect x="6" y="12" width="2" height="1" fill="#000000"/><rect x="8" y="12" width="1" height="1" fill="#FFFFFF"/><rect x="11" y="12" width="2" height="1" fill="#000080"/><rect x="5" y="13" width="1" height="1" fill="#FFFFFF"/><rect x="6" y="13" width="2" height="1" fill="#000000"/><rect x="8" y="13" width="1" height="1" fill="#FFFFFF"/><rect x="11" y="13" width="2" height="1" fill="#000080"/><rect x="6" y="14" width="2" height="1" fill="#FFFFFF"/></svg>
<div style="left:4px;top:88px;width:29px;height:1px;background:#FFFFFF;"></div>
<div style="left:33px;top:89px;width:1px;height:507px;background:#000000;"></div>
<div style="left:4px;top:447px;width:29px;height:29px;background:#9EB8C8;"></div>
<div style="left:4px;top:447px;width:29px;height:1px;background:#E6EEF2;"></div>
<div style="left:32px;top:447px;width:1px;height:29px;background:#000000;"></div>
<div style="left:4px;top:475px;width:29px;height:1px;background:#000000;"></div>
<div style="left:31px;top:448px;width:1px;height:27px;background:#54809C;"></div>
<div style="left:4px;top:474px;width:28px;height:1px;background:#54809C;"></div>
<div style="left:4px;top:476px;width:29px;height:30px;background:#9EB8C8;"></div>
<div style="left:4px;top:476px;width:29px;height:1px;background:#E6EEF2;"></div>
<div style="left:32px;top:476px;width:1px;height:30px;background:#000000;"></div>
<div style="left:4px;top:505px;width:29px;height:1px;background:#000000;"></div>
<div style="left:31px;top:477px;width:1px;height:28px;background:#54809C;"></div>
<div style="left:4px;top:504px;width:28px;height:1px;background:#54809C;"></div>
<div style="left:4px;top:506px;width:29px;height:30px;background:#9EB8C8;"></div>
<div style="left:4px;top:506px;width:29px;height:1px;background:#E6EEF2;"></div>
<div style="left:32px;top:506px;width:1px;height:30px;background:#000000;"></div>
<div style="left:4px;top:535px;width:29px;height:1px;background:#000000;"></div>
<div style="left:31px;top:507px;width:1px;height:28px;background:#54809C;"></div>
<div style="left:4px;top:534px;width:28px;height:1px;background:#54809C;"></div>
<div style="left:4px;top:536px;width:29px;height:30px;background:#9EB8C8;"></div>
<div style="left:4px;top:536px;width:29px;height:1px;background:#54809C;"></div>
<div style="left:4px;top:537px;width:29px;height:1px;background:#000000;"></div>
<div style="left:4px;top:565px;width:29px;height:1px;background:#E6EEF2;"></div>
<div style="left:32px;top:536px;width:1px;height:30px;background:#E6EEF2;"></div>
<div style="left:4px;top:566px;width:29px;height:30px;background:#9EB8C8;"></div>
<div style="left:4px;top:566px;width:29px;height:1px;background:#E6EEF2;"></div>
<div style="left:32px;top:566px;width:1px;height:30px;background:#000000;"></div>
<div style="left:4px;top:595px;width:29px;height:1px;background:#000000;"></div>
<div style="left:31px;top:567px;width:1px;height:28px;background:#54809C;"></div>
<div style="left:4px;top:594px;width:28px;height:1px;background:#54809C;"></div>
<svg style="position:absolute;left:4px;top:457px;" width="11" height="10" viewBox="0 0 11 10" shape-rendering="crispEdges"><rect x="0" y="0" width="11" height="1" fill="#303030"/><rect x="0" y="1" width="1" height="1" fill="#303030"/><rect x="1" y="1" width="5" height="1" fill="#0000C0"/><rect x="6" y="1" width="1" height="1" fill="#F4F4F4"/><rect x="7" y="1" width="1" height="1" fill="#0000C0"/><rect x="8" y="1" width="1" height="1" fill="#F4F4F4"/><rect x="9" y="1" width="1" height="1" fill="#0000C0"/><rect x="10" y="1" width="1" height="1" fill="#303030"/><rect x="0" y="2" width="1" height="1" fill="#303030"/><rect x="1" y="2" width="9" height="1" fill="#F4F4F4"/><rect x="10" y="2" width="1" height="1" fill="#303030"/><rect x="0" y="3" width="1" height="1" fill="#303030"/><rect x="1" y="3" width="4" height="1" fill="#800000"/><rect x="5" y="3" width="5" height="1" fill="#F4F4F4"/><rect x="10" y="3" width="1" height="1" fill="#303030"/><rect x="0" y="4" width="1" height="1" fill="#303030"/><rect x="1" y="4" width="3" height="1" fill="#FFFF00"/><rect x="4" y="4" width="1" height="1" fill="#800000"/><rect x="5" y="4" width="5" height="1" fill="#F4F4F4"/><rect x="10" y="4" width="1" height="1" fill="#303030"/><rect x="0" y="5" width="1" height="1" fill="#303030"/><rect x="1" y="5" width="4" height="1" fill="#FFFF00"/><rect x="5" y="5" width="1" height="1" fill="#800000"/><rect x="6" y="5" width="4" height="1" fill="#F4F4F4"/><rect x="10" y="5" width="1" height="1" fill="#303030"/><rect x="0" y="6" width="1" height="1" fill="#303030"/><rect x="1" y="6" width="4" height="1" fill="#FFFF00"/><rect x="5" y="6" width="5" height="1" fill="#800000"/><rect x="10" y="6" width="1" height="1" fill="#303030"/><rect x="0" y="7" width="1" height="1" fill="#303030"/><rect x="1" y="7" width="9" height="1" fill="#FFFF00"/><rect x="10" y="7" width="1" height="1" fill="#303030"/><rect x="0" y="8" width="1" height="1" fill="#303030"/><rect x="1" y="8" width="9" height="1" fill="#FFFF00"/><rect x="10" y="8" width="1" height="1" fill="#303030"/><rect x="0" y="9" width="11" height="1" fill="#303030"/></svg>
<svg style="position:absolute;left:17px;top:457px;" width="11" height="10" viewBox="0 0 11 10" shape-rendering="crispEdges"><rect x="0" y="0" width="11" height="1" fill="#303030"/><rect x="0" y="1" width="1" height="1" fill="#303030"/><rect x="1" y="1" width="5" height="1" fill="#0000C0"/><rect x="6" y="1" width="1" height="1" fill="#F4F4F4"/><rect x="7" y="1" width="1" height="1" fill="#0000C0"/><rect x="8" y="1" width="1" height="1" fill="#F4F4F4"/><rect x="9" y="1" width="1" height="1" fill="#0000C0"/><rect x="10" y="1" width="1" height="1" fill="#303030"/><rect x="0" y="2" width="1" height="1" fill="#303030"/><rect x="1" y="2" width="9" height="1" fill="#F4F4F4"/><rect x="10" y="2" width="1" height="1" fill="#303030"/><rect x="0" y="3" width="1" height="1" fill="#303030"/><rect x="1" y="3" width="2" height="1" fill="#800000"/><rect x="3" y="3" width="4" height="1" fill="#F4F4F4"/><rect x="7" y="3" width="3" height="1" fill="#800000"/><rect x="10" y="3" width="1" height="1" fill="#303030"/><rect x="0" y="4" width="1" height="1" fill="#303030"/><rect x="1" y="4" width="1" height="1" fill="#FFFF00"/><rect x="2" y="4" width="1" height="1" fill="#800000"/><rect x="3" y="4" width="4" height="1" fill="#F4F4F4"/><rect x="7" y="4" width="1" height="1" fill="#800000"/><rect x="8" y="4" width="2" height="1" fill="#FFFF00"/><rect x="10" y="4" width="1" height="1" fill="#303030"/><rect x="0" y="5" width="1" height="1" fill="#303030"/><rect x="1" y="5" width="2" height="1" fill="#FFFF00"/><rect x="3" y="5" width="1" height="1" fill="#800000"/><rect x="4" y="5" width="2" height="1" fill="#F4F4F4"/><rect x="6" y="5" width="1" height="1" fill="#800000"/><rect x="7" y="5" width="3" height="1" fill="#FFFF00"/><rect x="10" y="5" width="1" height="1" fill="#303030"/><rect x="0" y="6" width="1" height="1" fill="#303030"/><rect x="1" y="6" width="2" height="1" fill="#FFFF00"/><rect x="3" y="6" width="4" height="1" fill="#800000"/><rect x="7" y="6" width="3" height="1" fill="#FFFF00"/><rect x="10" y="6" width="1" height="1" fill="#303030"/><rect x="0" y="7" width="1" height="1" fill="#303030"/><rect x="1" y="7" width="9" height="1" fill="#FFFF00"/><rect x="10" y="7" width="1" height="1" fill="#303030"/><rect x="0" y="8" width="1" height="1" fill="#303030"/><rect x="1" y="8" width="9" height="1" fill="#FFFF00"/><rect x="10" y="8" width="1" height="1" fill="#303030"/><rect x="0" y="9" width="11" height="1" fill="#303030"/></svg>
<svg style="position:absolute;left:9px;top:451px;" width="13" height="5" viewBox="0 0 13 5" shape-rendering="crispEdges"><rect x="10" y="0" width="1" height="1" fill="#0000A0"/><rect x="10" y="1" width="2" height="1" fill="#0000A0"/><rect x="0" y="2" width="13" height="1" fill="#0000A0"/><rect x="10" y="3" width="2" height="1" fill="#0000A0"/><rect x="10" y="4" width="1" height="1" fill="#0000A0"/></svg>
<svg style="position:absolute;left:4px;top:476px;" width="30" height="30" viewBox="0 0 30 30" shape-rendering="crispEdges"><rect x="3" y="3" width="2" height="1" fill="#E00000"/><rect x="3" y="4" width="2" height="1" fill="#E00000"/><rect x="5" y="5" width="1" height="1" fill="#FFFF00"/><rect x="6" y="5" width="1" height="1" fill="#000000"/><rect x="3" y="6" width="2" height="1" fill="#000000"/><rect x="6" y="6" width="1" height="1" fill="#FFFF00"/><rect x="7" y="6" width="1" height="1" fill="#000000"/><rect x="3" y="7" width="5" height="1" fill="#E8E4E8"/><rect x="8" y="7" width="1" height="1" fill="#000000"/><rect x="9" y="7" width="6" height="1" fill="#FFFFFF"/><rect x="15" y="7" width="1" height="1" fill="#000000"/><rect x="16" y="7" width="4" height="1" fill="#FFFFFF"/><rect x="20" y="7" width="4" height="1" fill="#0000C0"/><rect x="0" y="8" width="2" height="1" fill="#0000C0"/><rect x="2" y="8" width="1" height="1" fill="#000000"/><rect x="3" y="8" width="5" height="1" fill="#E8E4E8"/><rect x="8" y="8" width="1" height="1" fill="#FFFF00"/><rect x="9" y="8" width="1" height="1" fill="#000000"/><rect x="10" y="8" width="4" height="1" fill="#FFFFFF"/><rect x="14" y="8" width="3" height="1" fill="#000000"/><rect x="17" y="8" width="3" height="1" fill="#FFFFFF"/><rect x="20" y="8" width="1" height="1" fill="#800000"/><rect x="21" y="8" width="3" height="1" fill="#FFFFFF"/><rect x="0" y="9" width="1" height="1" fill="#E00000"/><rect x="1" y="9" width="1" height="1" fill="#0000C0"/><rect x="2" y="9" width="1" height="1" fill="#000000"/><rect x="3" y="9" width="7" height="1" fill="#E8E4E8"/><rect x="10" y="9" width="1" height="1" fill="#000000"/><rect x="11" y="9" width="4" height="1" fill="#FFFFFF"/><rect x="15" y="9" width="1" height="1" fill="#000000"/><rect x="16" y="9" width="4" height="1" fill="#FFFFFF"/><rect x="20" y="9" width="1" height="1" fill="#0000C0"/><rect x="21" y="9" width="3" height="1" fill="#FFFFFF"/><rect x="0" y="10" width="2" height="1" fill="#0000C0"/><rect x="2" y="10" width="1" height="1" fill="#000000"/><rect x="3" y="10" width="7" height="1" fill="#E8E4E8"/><rect x="10" y="10" width="1" height="1" fill="#FFFF00"/><rect x="11" y="10" width="1" height="1" fill="#000000"/><rect x="12" y="10" width="3" height="1" fill="#FFFFFF"/><rect x="15" y="10" width="1" height="1" fill="#000000"/><rect x="16" y="10" width="4" height="1" fill="#FFFFFF"/><rect x="20" y="10" width="1" height="1" fill="#0000C0"/><rect x="21" y="10" width="3" height="1" fill="#FFFFFF"/><rect x="0" y="11" width="2" height="1" fill="#0000C0"/><rect x="3" y="11" width="7" height="1" fill="#000000"/><rect x="10" y="11" width="1" height="1" fill="#FFFFFF"/><rect x="11" y="11" width="1" height="1" fill="#000000"/><rect x="12" y="11" width="8" height="1" fill="#FFFFFF"/><rect x="20" y="11" width="1" height="1" fill="#0000C0"/><rect x="21" y="11" width="3" height="1" fill="#FFFFFF"/><rect x="0" y="12" width="3" height="1" fill="#000000"/><rect x="6" y="12" width="6" height="1" fill="#FFFFFF"/><rect x="12" y="12" width="2" height="1" fill="#000000"/><rect x="14" y="12" width="1" height="1" fill="#FFFFFF"/><rect x="15" y="12" width="1" height="1" fill="#000000"/><rect x="16" y="12" width="4" height="1" fill="#0000C0"/><rect x="20" y="12" width="1" height="1" fill="#800000"/><rect x="21" y="12" width="3" height="1" fill="#FFFFFF"/><rect x="6" y="13" width="10" height="1" fill="#FFFFFF"/><rect x="16" y="13" width="1" height="1" fill="#0000C0"/><rect x="17" y="13" width="7" height="1" fill="#FFFFFF"/><rect x="6" y="14" width="9" height="1" fill="#FFFFFF"/><rect x="15" y="14" width="1" height="1" fill="#000000"/><rect x="16" y="14" width="1" height="1" fill="#0000C0"/><rect x="17" y="14" width="5" height="1" fill="#FFFFFF"/><rect x="22" y="14" width="1" height="1" fill="#000000"/><rect x="23" y="14" width="1" height="1" fill="#FFFFFF"/><rect x="6" y="15" width="1" height="1" fill="#000000"/><rect x="7" y="15" width="1" height="1" fill="#FFFFFF"/><rect x="8" y="15" width="1" height="1" fill="#000000"/><rect x="9" y="15" width="1" height="1" fill="#FFFFFF"/><rect x="10" y="15" width="1" height="1" fill="#000000"/><rect x="11" y="15" width="1" height="1" fill="#FFFFFF"/><rect x="12" y="15" width="1" height="1" fill="#000000"/><rect x="13" y="15" width="1" height="1" fill="#FFFFFF"/><rect x="14" y="15" width="1" height="1" fill="#000000"/><rect x="15" y="15" width="1" height="1" fill="#FFFFFF"/><rect x="16" y="15" width="1" height="1" fill="#0000C0"/><rect x="17" y="15" width="1" height="1" fill="#FFFFFF"/><rect x="18" y="15" width="1" height="1" fill="#000000"/><rect x="19" y="15" width="1" height="1" fill="#FFFFFF"/><rect x="20" y="15" width="4" height="1" fill="#000000"/><rect x="6" y="16" width="4" height="1" fill="#FFFFFF"/><rect x="10" y="16" width="7" height="1" fill="#0000C0"/><rect x="17" y="16" width="5" height="1" fill="#FFFFFF"/><rect x="22" y="16" width="1" height="1" fill="#000000"/><rect x="23" y="16" width="1" height="1" fill="#FFFFFF"/><rect x="6" y="17" width="4" height="1" fill="#FFFFFF"/><rect x="10" y="17" width="1" height="1" fill="#0000C0"/><rect x="11" y="17" width="13" height="1" fill="#FFFFFF"/><rect x="6" y="18" width="4" height="1" fill="#FFFFFF"/><rect x="10" y="18" width="1" height="1" fill="#0000C0"/><rect x="11" y="18" width="4" height="1" fill="#FFFFFF"/><rect x="15" y="18" width="1" height="1" fill="#000000"/><rect x="16" y="18" width="8" height="1" fill="#FFFFFF"/><rect x="6" y="19" width="4" height="1" fill="#FFFFFF"/><rect x="10" y="19" width="1" height="1" fill="#0000C0"/><rect x="11" y="19" width="13" height="1" fill="#FFFFFF"/><rect x="6" y="20" width="4" height="1" fill="#FFFFFF"/><rect x="10" y="20" width="1" height="1" fill="#0000C0"/><rect x="11" y="20" width="4" height="1" fill="#FFFFFF"/><rect x="15" y="20" width="1" height="1" fill="#000000"/><rect x="16" y="20" width="8" height="1" fill="#FFFFFF"/><rect x="6" y="21" width="5" height="1" fill="#0000C0"/><rect x="11" y="21" width="13" height="1" fill="#FFFFFF"/><rect x="6" y="22" width="1" height="1" fill="#0000C0"/><rect x="7" y="22" width="8" height="1" fill="#FFFFFF"/><rect x="15" y="22" width="1" height="1" fill="#000000"/><rect x="16" y="22" width="8" height="1" fill="#FFFFFF"/><rect x="6" y="23" width="1" height="1" fill="#0000C0"/><rect x="7" y="23" width="17" height="1" fill="#FFFFFF"/><rect x="6" y="24" width="1" height="1" fill="#0000C0"/><rect x="7" y="24" width="8" height="1" fill="#FFFFFF"/><rect x="15" y="24" width="1" height="1" fill="#000000"/><rect x="16" y="24" width="8" height="1" fill="#FFFFFF"/><rect x="6" y="25" width="1" height="1" fill="#0000C0"/><rect x="7" y="25" width="17" height="1" fill="#FFFFFF"/></svg>
<svg style="position:absolute;left:4px;top:506px;" width="30" height="30" viewBox="0 0 30 30" shape-rendering="crispEdges"><rect x="17" y="3" width="1" height="1" fill="#0000A0"/><rect x="20" y="3" width="1" height="1" fill="#0000A0"/><rect x="23" y="3" width="1" height="1" fill="#0000A0"/><rect x="18" y="4" width="1" height="1" fill="#0000A0"/><rect x="20" y="4" width="1" height="1" fill="#0000A0"/><rect x="22" y="4" width="1" height="1" fill="#0000A0"/><rect x="9" y="5" width="1" height="1" fill="#0000A0"/><rect x="10" y="6" width="1" height="1" fill="#0000A0"/><rect x="17" y="6" width="2" height="1" fill="#0000A0"/><rect x="20" y="6" width="1" height="1" fill="#0000A0"/><rect x="22" y="6" width="2" height="1" fill="#0000A0"/><rect x="11" y="7" width="1" height="1" fill="#0000A0"/><rect x="0" y="8" width="17" height="1" fill="#0000A0"/><rect x="20" y="8" width="1" height="1" fill="#0000A0"/><rect x="4" y="9" width="1" height="1" fill="#0000A0"/><rect x="11" y="9" width="1" height="1" fill="#0000A0"/><rect x="16" y="9" width="1" height="1" fill="#0000A0"/><rect x="20" y="9" width="1" height="1" fill="#0000A0"/><rect x="4" y="10" width="1" height="1" fill="#0000A0"/><rect x="10" y="10" width="1" height="1" fill="#0000A0"/><rect x="16" y="10" width="1" height="1" fill="#0000A0"/><rect x="20" y="10" width="1" height="1" fill="#0000A0"/><rect x="4" y="11" width="1" height="1" fill="#0000A0"/><rect x="9" y="11" width="1" height="1" fill="#0000A0"/><rect x="16" y="11" width="1" height="1" fill="#0000A0"/><rect x="20" y="11" width="1" height="1" fill="#0000A0"/><rect x="4" y="12" width="1" height="1" fill="#0000A0"/><rect x="16" y="12" width="1" height="1" fill="#0000A0"/><rect x="0" y="13" width="9" height="1" fill="#0000A0"/><rect x="12" y="13" width="9" height="1" fill="#0000A0"/><rect x="1" y="14" width="1" height="1" fill="#0000A0"/><rect x="2" y="14" width="5" height="1" fill="#FFFF00"/><rect x="7" y="14" width="1" height="1" fill="#0000A0"/><rect x="13" y="14" width="1" height="1" fill="#0000A0"/><rect x="14" y="14" width="5" height="1" fill="#FFFF00"/><rect x="19" y="14" width="1" height="1" fill="#0000A0"/><rect x="2" y="15" width="1" height="1" fill="#0000A0"/><rect x="3" y="15" width="3" height="1" fill="#FFFF00"/><rect x="6" y="15" width="1" height="1" fill="#0000A0"/><rect x="14" y="15" width="1" height="1" fill="#0000A0"/><rect x="15" y="15" width="3" height="1" fill="#FFFF00"/><rect x="18" y="15" width="1" height="1" fill="#0000A0"/><rect x="3" y="16" width="1" height="1" fill="#0000A0"/><rect x="4" y="16" width="1" height="1" fill="#FFFF00"/><rect x="5" y="16" width="1" height="1" fill="#0000A0"/><rect x="15" y="16" width="1" height="1" fill="#0000A0"/><rect x="16" y="16" width="1" height="1" fill="#FFFF00"/><rect x="17" y="16" width="1" height="1" fill="#0000A0"/><rect x="4" y="17" width="1" height="1" fill="#0000A0"/><rect x="16" y="17" width="1" height="1" fill="#0000A0"/><rect x="4" y="18" width="1" height="1" fill="#0000A0"/><rect x="16" y="18" width="1" height="1" fill="#0000A0"/><rect x="4" y="19" width="1" height="1" fill="#0000A0"/><rect x="15" y="19" width="3" height="1" fill="#0000A0"/><rect x="4" y="20" width="1" height="1" fill="#0000A0"/><rect x="14" y="20" width="1" height="1" fill="#0000A0"/><rect x="15" y="20" width="3" height="1" fill="#FFFF00"/><rect x="18" y="20" width="1" height="1" fill="#0000A0"/><rect x="4" y="21" width="1" height="1" fill="#0000A0"/><rect x="13" y="21" width="1" height="1" fill="#0000A0"/><rect x="14" y="21" width="5" height="1" fill="#FFFF00"/><rect x="19" y="21" width="1" height="1" fill="#0000A0"/><rect x="4" y="22" width="10" height="1" fill="#0000A0"/><rect x="14" y="22" width="5" height="1" fill="#FFFF00"/><rect x="19" y="22" width="4" height="1" fill="#0000A0"/><rect x="13" y="23" width="1" height="1" fill="#0000A0"/><rect x="14" y="23" width="5" height="1" fill="#FFFF00"/><rect x="19" y="23" width="1" height="1" fill="#0000A0"/><rect x="14" y="24" width="1" height="1" fill="#0000A0"/><rect x="15" y="24" width="3" height="1" fill="#FFFF00"/><rect x="18" y="24" width="1" height="1" fill="#0000A0"/><rect x="15" y="25" width="3" height="1" fill="#0000A0"/></svg>
<svg style="position:absolute;left:4px;top:536px;" width="30" height="30" viewBox="0 0 30 30" shape-rendering="crispEdges"><rect x="4" y="5" width="20" height="1" fill="#202020"/><rect x="4" y="6" width="1" height="1" fill="#202020"/><rect x="5" y="6" width="18" height="1" fill="#0000A0"/><rect x="23" y="6" width="1" height="1" fill="#202020"/><rect x="4" y="7" width="1" height="1" fill="#202020"/><rect x="5" y="7" width="12" height="1" fill="#0000A0"/><rect x="17" y="7" width="1" height="1" fill="#FFFFFF"/><rect x="18" y="7" width="1" height="1" fill="#0000A0"/><rect x="19" y="7" width="1" height="1" fill="#FFFFFF"/><rect x="20" y="7" width="1" height="1" fill="#0000A0"/><rect x="21" y="7" width="1" height="1" fill="#FFFFFF"/><rect x="22" y="7" width="1" height="1" fill="#0000A0"/><rect x="23" y="7" width="1" height="1" fill="#202020"/><rect x="4" y="8" width="1" height="1" fill="#202020"/><rect x="5" y="8" width="1" height="1" fill="#90B4D8"/><rect x="6" y="8" width="1" height="1" fill="#FFFFFF"/><rect x="7" y="8" width="1" height="1" fill="#90B4D8"/><rect x="8" y="8" width="1" height="1" fill="#FFFFFF"/><rect x="9" y="8" width="1" height="1" fill="#90B4D8"/><rect x="10" y="8" width="1" height="1" fill="#FFFFFF"/><rect x="11" y="8" width="1" height="1" fill="#90B4D8"/><rect x="12" y="8" width="1" height="1" fill="#FFFFFF"/><rect x="13" y="8" width="1" height="1" fill="#90B4D8"/><rect x="14" y="8" width="1" height="1" fill="#FFFFFF"/><rect x="15" y="8" width="1" height="1" fill="#90B4D8"/><rect x="16" y="8" width="1" height="1" fill="#FFFFFF"/><rect x="17" y="8" width="1" height="1" fill="#90B4D8"/><rect x="18" y="8" width="1" height="1" fill="#FFFFFF"/><rect x="19" y="8" width="1" height="1" fill="#90B4D8"/><rect x="20" y="8" width="1" height="1" fill="#FFFFFF"/><rect x="21" y="8" width="1" height="1" fill="#90B4D8"/><rect x="22" y="8" width="1" height="1" fill="#FFFFFF"/><rect x="23" y="8" width="1" height="1" fill="#202020"/><rect x="4" y="9" width="1" height="1" fill="#202020"/><rect x="5" y="9" width="1" height="1" fill="#FFFFFF"/><rect x="6" y="9" width="1" height="1" fill="#90B4D8"/><rect x="7" y="9" width="1" height="1" fill="#FFFFFF"/><rect x="8" y="9" width="1" height="1" fill="#90B4D8"/><rect x="9" y="9" width="1" height="1" fill="#FFFFFF"/><rect x="10" y="9" width="1" height="1" fill="#90B4D8"/><rect x="11" y="9" width="1" height="1" fill="#FFFFFF"/><rect x="12" y="9" width="1" height="1" fill="#90B4D8"/><rect x="13" y="9" width="1" height="1" fill="#FFFFFF"/><rect x="14" y="9" width="1" height="1" fill="#90B4D8"/><rect x="15" y="9" width="1" height="1" fill="#FFFFFF"/><rect x="16" y="9" width="1" height="1" fill="#90B4D8"/><rect x="17" y="9" width="1" height="1" fill="#FFFFFF"/><rect x="18" y="9" width="1" height="1" fill="#90B4D8"/><rect x="19" y="9" width="1" height="1" fill="#FFFFFF"/><rect x="20" y="9" width="1" height="1" fill="#90B4D8"/><rect x="21" y="9" width="1" height="1" fill="#FFFFFF"/><rect x="22" y="9" width="1" height="1" fill="#90B4D8"/><rect x="23" y="9" width="1" height="1" fill="#202020"/><rect x="4" y="10" width="1" height="1" fill="#202020"/><rect x="5" y="10" width="1" height="1" fill="#90B4D8"/><rect x="6" y="10" width="1" height="1" fill="#FFFFFF"/><rect x="7" y="10" width="1" height="1" fill="#90B4D8"/><rect x="8" y="10" width="1" height="1" fill="#FFFFFF"/><rect x="9" y="10" width="1" height="1" fill="#90B4D8"/><rect x="10" y="10" width="1" height="1" fill="#FFFFFF"/><rect x="11" y="10" width="1" height="1" fill="#90B4D8"/><rect x="12" y="10" width="1" height="1" fill="#FFFFFF"/><rect x="13" y="10" width="1" height="1" fill="#90B4D8"/><rect x="14" y="10" width="1" height="1" fill="#FFFFFF"/><rect x="15" y="10" width="1" height="1" fill="#90B4D8"/><rect x="16" y="10" width="1" height="1" fill="#FFFFFF"/><rect x="17" y="10" width="1" height="1" fill="#90B4D8"/><rect x="18" y="10" width="1" height="1" fill="#FFFFFF"/><rect x="19" y="10" width="1" height="1" fill="#90B4D8"/><rect x="20" y="10" width="1" height="1" fill="#FFFFFF"/><rect x="21" y="10" width="1" height="1" fill="#90B4D8"/><rect x="22" y="10" width="1" height="1" fill="#FFFFFF"/><rect x="23" y="10" width="1" height="1" fill="#202020"/><rect x="1" y="11" width="3" height="1" fill="#0000FF"/><rect x="4" y="11" width="1" height="1" fill="#C0A080"/><rect x="5" y="11" width="1" height="1" fill="#F4F4EE"/><rect x="6" y="11" width="1" height="1" fill="#C0A080"/><rect x="7" y="11" width="1" height="1" fill="#F4F4EE"/><rect x="8" y="11" width="1" height="1" fill="#C0A080"/><rect x="9" y="11" width="1" height="1" fill="#F4F4EE"/><rect x="10" y="11" width="1" height="1" fill="#C0A080"/><rect x="11" y="11" width="1" height="1" fill="#F4F4EE"/><rect x="12" y="11" width="1" height="1" fill="#C0A080"/><rect x="13" y="11" width="1" height="1" fill="#F4F4EE"/><rect x="14" y="11" width="3" height="1" fill="#0000FF"/><rect x="17" y="11" width="1" height="1" fill="#FFFFFF"/><rect x="18" y="11" width="1" height="1" fill="#90B4D8"/><rect x="19" y="11" width="1" height="1" fill="#FFFFFF"/><rect x="20" y="11" width="1" height="1" fill="#90B4D8"/><rect x="21" y="11" width="1" height="1" fill="#FFFFFF"/><rect x="22" y="11" width="1" height="1" fill="#90B4D8"/><rect x="23" y="11" width="1" height="1" fill="#202020"/><rect x="1" y="12" width="1" height="1" fill="#0000FF"/><rect x="2" y="12" width="14" height="1" fill="#F4F4EE"/><rect x="16" y="12" width="1" height="1" fill="#0000FF"/><rect x="17" y="12" width="1" height="1" fill="#90B4D8"/><rect x="18" y="12" width="1" height="1" fill="#FFFFFF"/><rect x="19" y="12" width="1" height="1" fill="#90B4D8"/><rect x="20" y="12" width="1" height="1" fill="#FFFFFF"/><rect x="21" y="12" width="1" height="1" fill="#90B4D8"/><rect x="22" y="12" width="1" height="1" fill="#FFFFFF"/><rect x="23" y="12" width="1" height="1" fill="#202020"/><rect x="1" y="13" width="1" height="1" fill="#0000FF"/><rect x="2" y="13" width="14" height="1" fill="#F4F4EE"/><rect x="16" y="13" width="1" height="1" fill="#0000FF"/><rect x="17" y="13" width="1" height="1" fill="#FFFFFF"/><rect x="18" y="13" width="1" height="1" fill="#90B4D8"/><rect x="19" y="13" width="1" height="1" fill="#0000A0"/><rect x="20" y="13" width="1" height="1" fill="#90B4D8"/><rect x="21" y="13" width="1" height="1" fill="#FFFFFF"/><rect x="22" y="13" width="1" height="1" fill="#90B4D8"/><rect x="23" y="13" width="1" height="1" fill="#202020"/><rect x="1" y="14" width="1" height="1" fill="#0000FF"/><rect x="2" y="14" width="1" height="1" fill="#F4F4EE"/><rect x="3" y="14" width="1" height="1" fill="#0000FF"/><rect x="4" y="14" width="12" height="1" fill="#F4F4EE"/><rect x="16" y="14" width="1" height="1" fill="#0000FF"/><rect x="17" y="14" width="1" height="1" fill="#90B4D8"/><rect x="18" y="14" width="1" height="1" fill="#FFFFFF"/><rect x="19" y="14" width="2" height="1" fill="#0000A0"/><rect x="21" y="14" width="1" height="1" fill="#90B4D8"/><rect x="22" y="14" width="1" height="1" fill="#FFFFFF"/><rect x="23" y="14" width="1" height="1" fill="#202020"/><rect x="1" y="15" width="1" height="1" fill="#0000FF"/><rect x="2" y="15" width="1" height="1" fill="#F4F4EE"/><rect x="3" y="15" width="1" height="1" fill="#0000FF"/><rect x="4" y="15" width="6" height="1" fill="#F4F4EE"/><rect x="10" y="15" width="12" height="1" fill="#0000A0"/><rect x="22" y="15" width="1" height="1" fill="#90B4D8"/><rect x="23" y="15" width="1" height="1" fill="#202020"/><rect x="1" y="16" width="1" height="1" fill="#0000FF"/><rect x="2" y="16" width="1" height="1" fill="#F4F4EE"/><rect x="3" y="16" width="1" height="1" fill="#0000FF"/><rect x="4" y="16" width="12" height="1" fill="#F4F4EE"/><rect x="16" y="16" width="1" height="1" fill="#0000FF"/><rect x="17" y="16" width="1" height="1" fill="#90B4D8"/><rect x="18" y="16" width="1" height="1" fill="#FFFFFF"/><rect x="19" y="16" width="2" height="1" fill="#0000A0"/><rect x="21" y="16" width="1" height="1" fill="#90B4D8"/><rect x="22" y="16" width="1" height="1" fill="#FFFFFF"/><rect x="23" y="16" width="1" height="1" fill="#202020"/><rect x="1" y="17" width="1" height="1" fill="#0000FF"/><rect x="2" y="17" width="1" height="1" fill="#F4F4EE"/><rect x="3" y="17" width="1" height="1" fill="#0000FF"/><rect x="4" y="17" width="12" height="1" fill="#F4F4EE"/><rect x="16" y="17" width="1" height="1" fill="#0000FF"/><rect x="17" y="17" width="1" height="1" fill="#FFFFFF"/><rect x="18" y="17" width="1" height="1" fill="#90B4D8"/><rect x="19" y="17" width="1" height="1" fill="#0000A0"/><rect x="20" y="17" width="1" height="1" fill="#90B4D8"/><rect x="21" y="17" width="1" height="1" fill="#FFFFFF"/><rect x="22" y="17" width="1" height="1" fill="#90B4D8"/><rect x="23" y="17" width="1" height="1" fill="#202020"/><rect x="1" y="18" width="1" height="1" fill="#0000FF"/><rect x="2" y="18" width="1" height="1" fill="#F4F4EE"/><rect x="3" y="18" width="5" height="1" fill="#0000FF"/><rect x="8" y="18" width="2" height="1" fill="#F4F4EE"/><rect x="10" y="18" width="4" height="1" fill="#0000FF"/><rect x="14" y="18" width="2" height="1" fill="#F4F4EE"/><rect x="16" y="18" width="1" height="1" fill="#0000FF"/><rect x="17" y="18" width="1" height="1" fill="#90B4D8"/><rect x="18" y="18" width="1" height="1" fill="#FFFFFF"/><rect x="19" y="18" width="1" height="1" fill="#90B4D8"/><rect x="20" y="18" width="1" height="1" fill="#FFFFFF"/><rect x="21" y="18" width="1" height="1" fill="#90B4D8"/><rect x="22" y="18" width="1" height="1" fill="#FFFFFF"/><rect x="23" y="18" width="1" height="1" fill="#202020"/><rect x="1" y="19" width="1" height="1" fill="#0000FF"/><rect x="2" y="19" width="1" height="1" fill="#F4F4EE"/><rect x="3" y="19" width="1" height="1" fill="#0000FF"/><rect x="4" y="19" width="3" height="1" fill="#F4F4EE"/><rect x="7" y="19" width="1" height="1" fill="#0000FF"/><rect x="8" y="19" width="1" height="1" fill="#F4F4EE"/><rect x="9" y="19" width="1" height="1" fill="#0000FF"/><rect x="10" y="19" width="3" height="1" fill="#F4F4EE"/><rect x="13" y="19" width="1" height="1" fill="#0000FF"/><rect x="14" y="19" width="2" height="1" fill="#F4F4EE"/><rect x="16" y="19" width="1" height="1" fill="#0000FF"/><rect x="17" y="19" width="1" height="1" fill="#FFFFFF"/><rect x="18" y="19" width="1" height="1" fill="#90B4D8"/><rect x="19" y="19" width="1" height="1" fill="#FFFFFF"/><rect x="20" y="19" width="1" height="1" fill="#90B4D8"/><rect x="21" y="19" width="1" height="1" fill="#FFFFFF"/><rect x="22" y="19" width="1" height="1" fill="#90B4D8"/><rect x="23" y="19" width="1" height="1" fill="#202020"/><rect x="1" y="20" width="1" height="1" fill="#0000FF"/><rect x="2" y="20" width="1" height="1" fill="#F4F4EE"/><rect x="3" y="20" width="1" height="1" fill="#0000FF"/><rect x="4" y="20" width="3" height="1" fill="#F4F4EE"/><rect x="7" y="20" width="1" height="1" fill="#0000FF"/><rect x="8" y="20" width="1" height="1" fill="#F4F4EE"/><rect x="9" y="20" width="1" height="1" fill="#0000FF"/><rect x="10" y="20" width="3" height="1" fill="#F4F4EE"/><rect x="13" y="20" width="1" height="1" fill="#0000FF"/><rect x="14" y="20" width="2" height="1" fill="#F4F4EE"/><rect x="16" y="20" width="1" height="1" fill="#0000FF"/><rect x="17" y="20" width="1" height="1" fill="#90B4D8"/><rect x="18" y="20" width="1" height="1" fill="#FFFFFF"/><rect x="19" y="20" width="1" height="1" fill="#90B4D8"/><rect x="20" y="20" width="1" height="1" fill="#FFFFFF"/><rect x="21" y="20" width="1" height="1" fill="#90B4D8"/><rect x="22" y="20" width="1" height="1" fill="#FFFFFF"/><rect x="23" y="20" width="1" height="1" fill="#202020"/><rect x="1" y="21" width="1" height="1" fill="#0000FF"/><rect x="2" y="21" width="1" height="1" fill="#F4F4EE"/><rect x="3" y="21" width="1" height="1" fill="#0000FF"/><rect x="4" y="21" width="3" height="1" fill="#F4F4EE"/><rect x="7" y="21" width="1" height="1" fill="#0000FF"/><rect x="8" y="21" width="1" height="1" fill="#F4F4EE"/><rect x="9" y="21" width="1" height="1" fill="#0000FF"/><rect x="10" y="21" width="3" height="1" fill="#F4F4EE"/><rect x="13" y="21" width="1" height="1" fill="#0000FF"/><rect x="14" y="21" width="2" height="1" fill="#F4F4EE"/><rect x="16" y="21" width="1" height="1" fill="#0000FF"/><rect x="17" y="21" width="1" height="1" fill="#FFFFFF"/><rect x="18" y="21" width="1" height="1" fill="#90B4D8"/><rect x="19" y="21" width="1" height="1" fill="#FFFFFF"/><rect x="20" y="21" width="1" height="1" fill="#90B4D8"/><rect x="21" y="21" width="1" height="1" fill="#FFFFFF"/><rect x="22" y="21" width="1" height="1" fill="#90B4D8"/><rect x="23" y="21" width="1" height="1" fill="#202020"/><rect x="1" y="22" width="1" height="1" fill="#0000FF"/><rect x="2" y="22" width="1" height="1" fill="#F4F4EE"/><rect x="3" y="22" width="5" height="1" fill="#0000FF"/><rect x="8" y="22" width="2" height="1" fill="#F4F4EE"/><rect x="10" y="22" width="5" height="1" fill="#0000FF"/><rect x="15" y="22" width="1" height="1" fill="#F4F4EE"/><rect x="16" y="22" width="1" height="1" fill="#0000FF"/><rect x="17" y="22" width="7" height="1" fill="#202020"/><rect x="1" y="23" width="1" height="1" fill="#0000FF"/><rect x="2" y="23" width="5" height="1" fill="#F4F4EE"/><rect x="7" y="23" width="1" height="1" fill="#0000FF"/><rect x="8" y="23" width="8" height="1" fill="#F4F4EE"/><rect x="16" y="23" width="1" height="1" fill="#0000FF"/><rect x="1" y="24" width="1" height="1" fill="#0000FF"/><rect x="2" y="24" width="5" height="1" fill="#F4F4EE"/><rect x="7" y="24" width="1" height="1" fill="#0000FF"/><rect x="8" y="24" width="8" height="1" fill="#F4F4EE"/><rect x="16" y="24" width="1" height="1" fill="#0000FF"/><rect x="1" y="25" width="3" height="1" fill="#0000FF"/><rect x="4" y="25" width="10" height="1" fill="#F4F4EE"/><rect x="14" y="25" width="3" height="1" fill="#0000FF"/></svg>
<svg style="position:absolute;left:4px;top:566px;" width="30" height="30" viewBox="0 0 30 30" shape-rendering="crispEdges"><rect x="3" y="2" width="2" height="1" fill="#E00000"/><rect x="3" y="3" width="2" height="1" fill="#E00000"/><rect x="5" y="4" width="1" height="1" fill="#FFFF00"/><rect x="6" y="4" width="1" height="1" fill="#000000"/><rect x="3" y="5" width="2" height="1" fill="#000000"/><rect x="6" y="5" width="1" height="1" fill="#FFFF00"/><rect x="7" y="5" width="1" height="1" fill="#000000"/><rect x="3" y="6" width="5" height="1" fill="#F0ECF0"/><rect x="8" y="6" width="1" height="1" fill="#000000"/><rect x="0" y="7" width="2" height="1" fill="#0000C0"/><rect x="2" y="7" width="1" height="1" fill="#000000"/><rect x="3" y="7" width="5" height="1" fill="#F0ECF0"/><rect x="8" y="7" width="1" height="1" fill="#FFFF00"/><rect x="9" y="7" width="1" height="1" fill="#000000"/><rect x="0" y="8" width="1" height="1" fill="#E00000"/><rect x="1" y="8" width="1" height="1" fill="#0000C0"/><rect x="2" y="8" width="1" height="1" fill="#000000"/><rect x="3" y="8" width="7" height="1" fill="#F0ECF0"/><rect x="10" y="8" width="1" height="1" fill="#000000"/><rect x="0" y="9" width="2" height="1" fill="#0000C0"/><rect x="2" y="9" width="1" height="1" fill="#000000"/><rect x="3" y="9" width="7" height="1" fill="#F0ECF0"/><rect x="10" y="9" width="1" height="1" fill="#FFFF00"/><rect x="11" y="9" width="1" height="1" fill="#000000"/><rect x="0" y="10" width="2" height="1" fill="#0000C0"/><rect x="3" y="10" width="7" height="1" fill="#000000"/><rect x="11" y="10" width="1" height="1" fill="#000000"/><rect x="13" y="10" width="11" height="1" fill="#000000"/><rect x="0" y="11" width="3" height="1" fill="#000000"/><rect x="12" y="11" width="2" height="1" fill="#000000"/><rect x="14" y="11" width="3" height="1" fill="#F0ECF0"/><rect x="17" y="11" width="1" height="1" fill="#000000"/><rect x="18" y="11" width="5" height="1" fill="#C8C8C8"/><rect x="23" y="11" width="1" height="1" fill="#000000"/><rect x="8" y="12" width="1" height="1" fill="#000000"/><rect x="9" y="12" width="8" height="1" fill="#F0ECF0"/><rect x="17" y="12" width="1" height="1" fill="#000000"/><rect x="18" y="12" width="5" height="1" fill="#C8C8C8"/><rect x="23" y="12" width="1" height="1" fill="#000000"/><rect x="8" y="13" width="1" height="1" fill="#000000"/><rect x="9" y="13" width="8" height="1" fill="#F0ECF0"/><rect x="17" y="13" width="1" height="1" fill="#000000"/><rect x="18" y="13" width="5" height="1" fill="#C8C8C8"/><rect x="23" y="13" width="1" height="1" fill="#000000"/><rect x="8" y="14" width="1" height="1" fill="#000000"/><rect x="9" y="14" width="8" height="1" fill="#F0ECF0"/><rect x="17" y="14" width="7" height="1" fill="#000000"/><rect x="8" y="15" width="1" height="1" fill="#000000"/><rect x="9" y="15" width="9" height="1" fill="#F0ECF0"/><rect x="18" y="15" width="6" height="1" fill="#0000C0"/><rect x="8" y="16" width="1" height="1" fill="#000000"/><rect x="9" y="16" width="8" height="1" fill="#F0ECF0"/><rect x="17" y="16" width="1" height="1" fill="#0000C0"/><rect x="18" y="16" width="5" height="1" fill="#F0ECF0"/><rect x="23" y="16" width="1" height="1" fill="#000000"/><rect x="8" y="17" width="1" height="1" fill="#000000"/><rect x="9" y="17" width="8" height="1" fill="#F0ECF0"/><rect x="17" y="17" width="1" height="1" fill="#0000C0"/><rect x="18" y="17" width="1" height="1" fill="#F0ECF0"/><rect x="19" y="17" width="5" height="1" fill="#000000"/><rect x="8" y="18" width="1" height="1" fill="#000000"/><rect x="9" y="18" width="7" height="1" fill="#F0ECF0"/><rect x="16" y="18" width="1" height="1" fill="#0000C0"/><rect x="17" y="18" width="2" height="1" fill="#F0ECF0"/><rect x="19" y="18" width="1" height="1" fill="#000000"/><rect x="20" y="18" width="3" height="1" fill="#C8C8C8"/><rect x="23" y="18" width="1" height="1" fill="#000000"/><rect x="8" y="19" width="1" height="1" fill="#000000"/><rect x="9" y="19" width="7" height="1" fill="#F0ECF0"/><rect x="16" y="19" width="1" height="1" fill="#0000C0"/><rect x="17" y="19" width="2" height="1" fill="#F0ECF0"/><rect x="19" y="19" width="1" height="1" fill="#000000"/><rect x="20" y="19" width="3" height="1" fill="#C8C8C8"/><rect x="23" y="19" width="1" height="1" fill="#000000"/><rect x="8" y="20" width="1" height="1" fill="#000000"/><rect x="9" y="20" width="4" height="1" fill="#F0ECF0"/><rect x="13" y="20" width="1" height="1" fill="#000000"/><rect x="14" y="20" width="1" height="1" fill="#F0ECF0"/><rect x="15" y="20" width="1" height="1" fill="#0000C0"/><rect x="16" y="20" width="3" height="1" fill="#F0ECF0"/><rect x="19" y="20" width="1" height="1" fill="#000000"/><rect x="20" y="20" width="3" height="1" fill="#C8C8C8"/><rect x="23" y="20" width="1" height="1" fill="#000000"/><rect x="8" y="21" width="1" height="1" fill="#000000"/><rect x="9" y="21" width="4" height="1" fill="#F0ECF0"/><rect x="13" y="21" width="1" height="1" fill="#000000"/><rect x="14" y="21" width="1" height="1" fill="#F0ECF0"/><rect x="15" y="21" width="1" height="1" fill="#0000C0"/><rect x="16" y="21" width="3" height="1" fill="#F0ECF0"/><rect x="19" y="21" width="1" height="1" fill="#000000"/><rect x="20" y="21" width="3" height="1" fill="#C8C8C8"/><rect x="23" y="21" width="1" height="1" fill="#000000"/><rect x="8" y="22" width="6" height="1" fill="#000000"/><rect x="14" y="22" width="1" height="1" fill="#0000C0"/><rect x="15" y="22" width="4" height="1" fill="#F0ECF0"/><rect x="19" y="22" width="1" height="1" fill="#000000"/><rect x="20" y="22" width="3" height="1" fill="#C8C8C8"/><rect x="23" y="22" width="1" height="1" fill="#000000"/><rect x="8" y="23" width="1" height="1" fill="#000000"/><rect x="9" y="23" width="4" height="1" fill="#FFFFFF"/><rect x="13" y="23" width="1" height="1" fill="#F0ECF0"/><rect x="14" y="23" width="1" height="1" fill="#0000C0"/><rect x="15" y="23" width="4" height="1" fill="#F0ECF0"/><rect x="19" y="23" width="1" height="1" fill="#000000"/><rect x="20" y="23" width="3" height="1" fill="#C8C8C8"/><rect x="23" y="23" width="1" height="1" fill="#000000"/><rect x="8" y="24" width="1" height="1" fill="#000000"/><rect x="9" y="24" width="4" height="1" fill="#FFFFFF"/><rect x="13" y="24" width="1" height="1" fill="#0000C0"/><rect x="14" y="24" width="5" height="1" fill="#F0ECF0"/><rect x="19" y="24" width="1" height="1" fill="#000000"/><rect x="20" y="24" width="3" height="1" fill="#C8C8C8"/><rect x="23" y="24" width="1" height="1" fill="#000000"/><rect x="8" y="25" width="6" height="1" fill="#0000C0"/><rect x="14" y="25" width="10" height="1" fill="#000000"/></svg>
<div style="left:37px;top:89px;width:178px;height:1px;background:#000000;"></div>
<div style="left:37px;top:340px;width:178px;height:1px;background:#000000;"></div>
<div style="left:37px;top:89px;width:1px;height:252px;background:#000000;"></div>
<div style="left:214px;top:89px;width:1px;height:252px;background:#000000;"></div>
<div style="left:47px;top:89px;width:118px;height:1px;background:#9EB8C8;"></div>
<div class="t" style="left:49px;top:81px;font:normal 12px/12px 'Liberation Sans', sans-serif;color:#000;white-space:pre;transform-origin:0 0;transform:scaleX(0.8650);">Current Filter Information</div>
<div style="left:220px;top:89px;width:549px;height:1px;background:#000000;"></div>
<div style="left:220px;top:340px;width:549px;height:1px;background:#000000;"></div>
<div style="left:220px;top:89px;width:1px;height:252px;background:#000000;"></div>
<div style="left:768px;top:89px;width:1px;height:252px;background:#000000;"></div>
<div style="left:230px;top:89px;width:105px;height:1px;background:#9EB8C8;"></div>
<div class="t" style="left:232px;top:81px;font:normal 12px/12px 'Liberation Sans', sans-serif;color:#000;white-space:pre;transform-origin:0 0;transform:scaleX(0.9032);">Magnitude Response</div>
<div style="left:37px;top:347px;width:733px;height:1px;background:#000000;"></div>
<div style="left:37px;top:347px;width:1px;height:249px;background:#000000;"></div>
<div style="left:769px;top:348px;width:1px;height:248px;background:#FFFFFF;"></div>
<div style="left:38px;top:595px;width:732px;height:1px;background:#FFFFFF;"></div>
<div style="left:42px;top:362px;width:722px;height:1px;background:#000000;"></div>
<div style="left:42px;top:559px;width:722px;height:1px;background:#000000;"></div>
<div style="left:42px;top:362px;width:1px;height:198px;background:#000000;"></div>
<div style="left:763px;top:362px;width:1px;height:198px;background:#000000;"></div>
<div style="left:51px;top:362px;width:85px;height:1px;background:#9EB8C8;"></div>
<div class="t" style="left:53px;top:354px;font:normal 12px/12px 'Liberation Sans', sans-serif;color:#000;white-space:pre;transform-origin:0 0;transform:scaleX(0.8912);">Filter Coefficients</div>
<div class="t" style="left:44px;top:153px;font:normal 12px/12px 'Liberation Sans', sans-serif;color:#0000FF;white-space:pre;transform-origin:0 0;transform:scaleX(0.8923);">Structure:</div>
<div class="t" style="left:95px;top:153px;font:normal 12px/12px 'Liberation Sans', sans-serif;color:#000;white-space:pre;transform-origin:0 0;transform:scaleX(0.8797);">Direct form II</div>
<div class="t" style="left:95px;top:166px;font:normal 12px/12px 'Liberation Sans', sans-serif;color:#000;white-space:pre;transform-origin:0 0;transform:scaleX(0.9000);">transposed</div>
<div class="t" style="left:44px;top:189px;font:normal 12px/12px 'Liberation Sans', sans-serif;color:#0000FF;white-space:pre;transform-origin:0 0;transform:scaleX(0.8638);">Order:</div>
<div class="t" style="left:95px;top:189px;font:normal 12px/12px 'Liberation Sans', sans-serif;color:#000;white-space:pre;transform-origin:0 0;transform:scaleX(1.3759);">4</div>
<div class="t" style="left:44px;top:207px;font:normal 12px/12px 'Liberation Sans', sans-serif;color:#0000FF;white-space:pre;transform-origin:0 0;transform:scaleX(0.9003);">Sections:</div>
<div class="t" style="left:95px;top:207px;font:normal 12px/12px 'Liberation Sans', sans-serif;color:#000;white-space:pre;transform-origin:0 0;transform:scaleX(0.9828);">1</div>
<div class="t" style="left:44px;top:225px;font:normal 12px/12px 'Liberation Sans', sans-serif;color:#0000FF;white-space:pre;transform-origin:0 0;transform:scaleX(0.8949);">Stable:</div>
<div class="t" style="left:95px;top:225px;font:normal 12px/12px 'Liberation Sans', sans-serif;color:#000;white-space:pre;transform-origin:0 0;transform:scaleX(1.0012);">Yes</div>
<div class="t" style="left:44px;top:243px;font:normal 12px/12px 'Liberation Sans', sans-serif;color:#0000FF;white-space:pre;transform-origin:0 0;transform:scaleX(0.9054);">Source:</div>
<div class="t" style="left:95px;top:243px;font:normal 12px/12px 'Liberation Sans', sans-serif;color:#000;white-space:pre;transform-origin:0 0;transform:scaleX(0.8960);">Imported</div>
<div style="left:280px;top:122px;width:419px;height:170px;background:#FFFFFF;"></div>
<svg style="position:absolute;left:280px;top:122px;overflow:visible" width="419" height="170" viewBox="0 0 419 170" shape-rendering="crispEdges"><line x1="41.5" y1="5" x2="41.5" y2="169" stroke="#606060" stroke-dasharray="3 3"/><rect x="41" y="1" width="1" height="4" fill="#606060"/><rect x="41" y="165" width="1" height="4" fill="#606060"/><line x1="83.5" y1="5" x2="83.5" y2="169" stroke="#606060" stroke-dasharray="3 3"/><rect x="83" y="1" width="1" height="4" fill="#606060"/><rect x="83" y="165" width="1" height="4" fill="#606060"/><line x1="125.5" y1="5" x2="125.5" y2="169" stroke="#606060" stroke-dasharray="3 3"/><rect x="125" y="1" width="1" height="4" fill="#606060"/><rect x="125" y="165" width="1" height="4" fill="#606060"/><line x1="167.5" y1="5" x2="167.5" y2="169" stroke="#606060" stroke-dasharray="3 3"/><rect x="167" y="1" width="1" height="4" fill="#606060"/><rect x="167" y="165" width="1" height="4" fill="#606060"/><line x1="209.5" y1="5" x2="209.5" y2="169" stroke="#606060" stroke-dasharray="3 3"/><rect x="209" y="1" width="1" height="4" fill="#606060"/><rect x="209" y="165" width="1" height="4" fill="#606060"/><line x1="250.5" y1="5" x2="250.5" y2="169" stroke="#606060" stroke-dasharray="3 3"/><rect x="250" y="1" width="1" height="4" fill="#606060"/><rect x="250" y="165" width="1" height="4" fill="#606060"/><line x1="292.5" y1="5" x2="292.5" y2="169" stroke="#606060" stroke-dasharray="3 3"/><rect x="292" y="1" width="1" height="4" fill="#606060"/><rect x="292" y="165" width="1" height="4" fill="#606060"/><line x1="334.5" y1="5" x2="334.5" y2="169" stroke="#606060" stroke-dasharray="3 3"/><rect x="334" y="1" width="1" height="4" fill="#606060"/><rect x="334" y="165" width="1" height="4" fill="#606060"/><line x1="376.5" y1="5" x2="376.5" y2="169" stroke="#606060" stroke-dasharray="3 3"/><rect x="376" y="1" width="1" height="4" fill="#606060"/><rect x="376" y="165" width="1" height="4" fill="#606060"/><line x1="6" y1="56.5" x2="418" y2="56.5" stroke="#606060" stroke-dasharray="3 3"/><rect x="1" y="56" width="4" height="1" fill="#606060"/><rect x="414" y="56" width="4" height="1" fill="#606060"/><line x1="6" y1="112.5" x2="418" y2="112.5" stroke="#606060" stroke-dasharray="3 3"/><rect x="1" y="112" width="4" height="1" fill="#606060"/><rect x="414" y="112" width="4" height="1" fill="#606060"/><rect x="0.5" y="0.5" width="418" height="169" fill="none" stroke="#606060"/><path d="M0.00 0.87 L0.42 0.87 L0.84 0.87 L1.25 0.87 L1.67 0.87 L2.09 0.87 L2.51 0.87 L2.93 0.87 L3.34 0.87 L3.76 0.87 L4.18 0.86 L4.60 0.86 L5.02 0.86 L5.44 0.86 L5.85 0.86 L6.27 0.86 L6.69 0.86 L7.11 0.86 L7.53 0.85 L7.94 0.85 L8.36 0.85 L8.78 0.85 L9.20 0.85 L9.62 0.85 L10.03 0.84 L10.45 0.84 L10.87 0.84 L11.29 0.84 L11.71 0.84 L12.13 0.83 L12.54 0.83 L12.96 0.83 L13.38 0.83 L13.80 0.82 L14.22 0.82 L14.63 0.82 L15.05 0.81 L15.47 0.81 L15.89 0.81 L16.31 0.81 L16.72 0.80 L17.14 0.80 L17.56 0.80 L17.98 0.79 L18.40 0.79 L18.81 0.79 L19.23 0.78 L19.65 0.78 L20.07 0.78 L20.49 0.77 L20.91 0.77 L21.32 0.76 L21.74 0.76 L22.16 0.76 L22.58 0.75 L23.00 0.75 L23.41 0.75 L23.83 0.74 L24.25 0.74 L24.67 0.73 L25.09 0.73 L25.50 0.73 L25.92 0.72 L26.34 0.72 L26.76 0.71 L27.18 0.71 L27.59 0.71 L28.01 0.70 L28.43 0.70 L28.85 0.69 L29.27 0.69 L29.69 0.69 L30.10 0.68 L30.52 0.68 L30.94 0.67 L31.36 0.67 L31.78 0.66 L32.19 0.66 L32.61 0.66 L33.03 0.65 L33.45 0.65 L33.87 0.64 L34.28 0.64 L34.70 0.64 L35.12 0.63 L35.54 0.63 L35.96 0.63 L36.38 0.62 L36.79 0.62 L37.21 0.61 L37.63 0.61 L38.05 0.61 L38.47 0.60 L38.88 0.60 L39.30 0.60 L39.72 0.59 L40.14 0.59 L40.56 0.59 L40.97 0.58 L41.39 0.58 L41.81 0.58 L42.23 0.57 L42.65 0.57 L43.06 0.57 L43.48 0.57 L43.90 0.56 L44.32 0.56 L44.74 0.56 L45.16 0.56 L45.57 0.55 L45.99 0.55 L46.41 0.55 L46.83 0.55 L47.25 0.55 L47.66 0.54 L48.08 0.54 L48.50 0.54 L48.92 0.54 L49.34 0.54 L49.75 0.54 L50.17 0.53 L50.59 0.53 L51.01 0.53 L51.43 0.53 L51.84 0.53 L52.26 0.53 L52.68 0.53 L53.10 0.53 L53.52 0.53 L53.94 0.53 L54.35 0.53 L54.77 0.53 L55.19 0.53 L55.61 0.53 L56.03 0.53 L56.44 0.53 L56.86 0.53 L57.28 0.53 L57.70 0.53 L58.12 0.54 L58.53 0.54 L58.95 0.54 L59.37 0.54 L59.79 0.54 L60.21 0.54 L60.63 0.55 L61.04 0.55 L61.46 0.55 L61.88 0.55 L62.30 0.56 L62.72 0.56 L63.13 0.56 L63.55 0.56 L63.97 0.57 L64.39 0.57 L64.81 0.57 L65.22 0.58 L65.64 0.58 L66.06 0.58 L66.48 0.59 L66.90 0.59 L67.31 0.59 L67.73 0.60 L68.15 0.60 L68.57 0.61 L68.99 0.61 L69.41 0.62 L69.82 0.62 L70.24 0.62 L70.66 0.63 L71.08 0.63 L71.50 0.64 L71.91 0.64 L72.33 0.65 L72.75 0.65 L73.17 0.66 L73.59 0.66 L74.00 0.67 L74.42 0.67 L74.84 0.68 L75.26 0.68 L75.68 0.69 L76.10 0.69 L76.51 0.70 L76.93 0.70 L77.35 0.71 L77.77 0.72 L78.19 0.72 L78.60 0.73 L79.02 0.73 L79.44 0.74 L79.86 0.74 L80.28 0.75 L80.69 0.75 L81.11 0.76 L81.53 0.76 L81.95 0.77 L82.37 0.77 L82.78 0.78 L83.20 0.78 L83.62 0.79 L84.04 0.79 L84.46 0.80 L84.88 0.80 L85.29 0.80 L85.71 0.81 L86.13 0.81 L86.55 0.82 L86.97 0.82 L87.38 0.82 L87.80 0.83 L88.22 0.83 L88.64 0.83 L89.06 0.84 L89.47 0.84 L89.89 0.84 L90.31 0.84 L90.73 0.85 L91.15 0.85 L91.56 0.85 L91.98 0.85 L92.40 0.85 L92.82 0.85 L93.24 0.85 L93.66 0.85 L94.07 0.86 L94.49 0.86 L94.91 0.85 L95.33 0.85 L95.75 0.85 L96.16 0.85 L96.58 0.85 L97.00 0.85 L97.42 0.85 L97.84 0.84 L98.25 0.84 L98.67 0.84 L99.09 0.84 L99.51 0.83 L99.93 0.83 L100.35 0.82 L100.76 0.82 L101.18 0.81 L101.60 0.81 L102.02 0.80 L102.44 0.80 L102.85 0.79 L103.27 0.79 L103.69 0.78 L104.11 0.77 L104.53 0.76 L104.94 0.76 L105.36 0.75 L105.78 0.74 L106.20 0.73 L106.62 0.72 L107.03 0.71 L107.45 0.71 L107.87 0.70 L108.29 0.69 L108.71 0.68 L109.13 0.67 L109.54 0.66 L109.96 0.65 L110.38 0.64 L110.80 0.63 L111.22 0.62 L111.63 0.61 L112.05 0.60 L112.47 0.59 L112.89 0.58 L113.31 0.57 L113.72 0.56 L114.14 0.56 L114.56 0.55 L114.98 0.54 L115.40 0.54 L115.81 0.53 L116.23 0.52 L116.65 0.52 L117.07 0.52 L117.49 0.52 L117.91 0.52 L118.32 0.52 L118.74 0.52 L119.16 0.52 L119.58 0.53 L120.00 0.54 L120.41 0.54 L120.83 0.56 L121.25 0.57 L121.67 0.59 L122.09 0.60 L122.50 0.63 L122.92 0.65 L123.34 0.68 L123.76 0.71 L124.18 0.74 L124.60 0.78 L125.01 0.82 L125.43 0.86 L125.85 0.91 L126.27 0.96 L126.69 1.02 L127.10 1.08 L127.52 1.15 L127.94 1.22 L128.36 1.29 L128.78 1.37 L129.19 1.45 L129.61 1.54 L130.03 1.64 L130.45 1.74 L130.87 1.84 L131.28 1.95 L131.70 2.07 L132.12 2.19 L132.54 2.31 L132.96 2.44 L133.38 2.57 L133.79 2.71 L134.21 2.86 L134.63 3.00 L135.05 3.16 L135.47 3.32 L135.88 3.48 L136.30 3.64 L136.72 3.81 L137.14 3.99 L137.56 4.16 L137.97 4.35 L138.39 4.53 L138.81 4.72 L139.23 4.91 L139.65 5.10 L140.07 5.30 L140.48 5.50 L140.90 5.70 L141.32 5.91 L141.74 6.11 L142.16 6.32 L142.57 6.53 L142.99 6.74 L143.41 6.96 L143.83 7.17 L144.25 7.39 L144.66 7.61 L145.08 7.83 L145.50 8.05 L145.92 8.27 L146.34 8.49 L146.75 8.71 L147.17 8.94 L147.59 9.16 L148.01 9.39 L148.43 9.61 L148.85 9.84 L149.26 10.07 L149.68 10.29 L150.10 10.52 L150.52 10.75 L150.94 10.97 L151.35 11.20 L151.77 11.43 L152.19 11.66 L152.61 11.88 L153.03 12.11 L153.44 12.34 L153.86 12.57 L154.28 12.79 L154.70 13.02 L155.12 13.25 L155.53 13.47 L155.95 13.70 L156.37 13.93 L156.79 14.15 L157.21 14.38 L157.63 14.61 L158.04 14.83 L158.46 15.06 L158.88 15.28 L159.30 15.51 L159.72 15.73 L160.13 15.96 L160.55 16.18 L160.97 16.40 L161.39 16.63 L161.81 16.85 L162.22 17.07 L162.64 17.30 L163.06 17.52 L163.48 17.74 L163.90 17.96 L164.32 18.18 L164.73 18.41 L165.15 18.63 L165.57 18.85 L165.99 19.07 L166.41 19.29 L166.82 19.51 L167.24 19.73 L167.66 19.95 L168.08 20.17 L168.50 20.39 L168.91 20.61 L169.33 20.83 L169.75 21.05 L170.17 21.27 L170.59 21.49 L171.00 21.71 L171.42 21.93 L171.84 22.14 L172.26 22.36 L172.68 22.58 L173.10 22.80 L173.51 23.02 L173.93 23.24 L174.35 23.46 L174.77 23.67 L175.19 23.89 L175.60 24.11 L176.02 24.33 L176.44 24.55 L176.86 24.77 L177.28 24.99 L177.69 25.21 L178.11 25.43 L178.53 25.64 L178.95 25.86 L179.37 26.08 L179.78 26.30 L180.20 26.52 L180.62 26.74 L181.04 26.96 L181.46 27.18 L181.88 27.40 L182.29 27.63 L182.71 27.85 L183.13 28.07 L183.55 28.29 L183.97 28.51 L184.38 28.73 L184.80 28.96 L185.22 29.18 L185.64 29.40 L186.06 29.63 L186.47 29.85 L186.89 30.08 L187.31 30.30 L187.73 30.53 L188.15 30.75 L188.57 30.98 L188.98 31.21 L189.40 31.44 L189.82 31.67 L190.24 31.90 L190.66 32.13 L191.07 32.36 L191.49 32.59 L191.91 32.82 L192.33 33.05 L192.75 33.29 L193.16 33.52 L193.58 33.75 L194.00 33.99 L194.42 34.23 L194.84 34.47 L195.25 34.70 L195.67 34.94 L196.09 35.18 L196.51 35.43 L196.93 35.67 L197.35 35.91 L197.76 36.16 L198.18 36.40 L198.60 36.65 L199.02 36.90 L199.44 37.15 L199.85 37.40 L200.27 37.65 L200.69 37.91 L201.11 38.16 L201.53 38.42 L201.94 38.68 L202.36 38.94 L202.78 39.20 L203.20 39.47 L203.62 39.73 L204.04 40.00 L204.45 40.27 L204.87 40.54 L205.29 40.82 L205.71 41.09 L206.13 41.37 L206.54 41.65 L206.96 41.93 L207.38 42.22 L207.80 42.51 L208.22 42.80 L208.63 43.09 L209.05 43.39 L209.47 43.69 L209.89 43.99 L210.31 44.30 L210.72 44.60 L211.14 44.92 L211.56 45.23 L211.98 45.55 L212.40 45.88 L212.82 46.21 L213.23 46.54 L213.65 46.88 L214.07 47.22 L214.49 47.57 L214.91 47.92 L215.32 48.28 L215.74 48.64 L216.16 49.01 L216.58 49.39 L217.00 49.78 L217.41 50.17 L217.83 50.57 L218.25 50.97 L218.67 51.39 L219.09 51.82 L219.50 52.25 L219.92 52.70 L220.34 53.15 L220.76 53.62 L221.18 54.10 L221.60 54.60 L222.01 55.11 L222.43 55.64 L222.85 56.18 L223.27 56.75 L223.69 57.34 L224.10 57.95 L224.52 58.58 L224.94 59.25 L225.36 59.95 L225.78 60.68 L226.19 61.46 L226.61 62.28 L227.03 63.16 L227.45 64.11 L227.87 65.13 L228.29 66.24 L228.70 67.47 L229.12 68.84 L229.54 70.40 L229.96 72.20 L230.38 74.37 L230.79 77.08 L231.21 80.74 L231.63 86.49 L232.05 101.54 L232.36 96.30 L232.78 85.39 L233.20 80.48 L233.62 77.29 L234.03 74.95 L234.45 73.11 L234.87 71.59 L235.29 70.31 L235.71 69.21 L236.12 68.24 L236.54 67.39 L236.96 66.62 L237.38 65.92 L237.80 65.29 L238.22 64.71 L238.63 64.18 L239.05 63.69 L239.47 63.23 L239.89 62.81 L240.31 62.42 L240.72 62.05 L241.14 61.70 L241.56 61.38 L241.98 61.07 L242.40 60.79 L242.81 60.52 L243.23 60.26 L243.65 60.02 L244.07 59.79 L244.49 59.57 L244.90 59.37 L245.32 59.17 L245.74 58.99 L246.16 58.81 L246.58 58.65 L247.00 58.49 L247.41 58.34 L247.83 58.20 L248.25 58.06 L248.67 57.93 L249.09 57.81 L249.50 57.69 L249.92 57.58 L250.34 57.48 L250.76 57.38 L251.18 57.28 L251.59 57.19 L252.01 57.11 L252.43 57.03 L252.85 56.95 L253.27 56.88 L253.68 56.81 L254.10 56.74 L254.52 56.68 L254.94 56.63 L255.36 56.57 L255.78 56.52 L256.19 56.47 L256.61 56.43 L257.03 56.39 L257.45 56.35 L257.87 56.32 L258.28 56.28 L258.70 56.26 L259.12 56.23 L259.54 56.20 L259.96 56.18 L260.37 56.16 L260.79 56.15 L261.21 56.13 L261.63 56.12 L262.05 56.11 L262.47 56.10 L262.88 56.10 L263.30 56.09 L263.72 56.09 L264.14 56.09 L264.56 56.10 L264.97 56.10 L265.39 56.11 L265.81 56.12 L266.23 56.13 L266.65 56.14 L267.06 56.15 L267.48 56.17 L267.90 56.19 L268.32 56.20 L268.74 56.23 L269.15 56.25 L269.57 56.27 L269.99 56.30 L270.41 56.33 L270.83 56.36 L271.25 56.39 L271.66 56.42 L272.08 56.45 L272.50 56.49 L272.92 56.52 L273.34 56.56 L273.75 56.60 L274.17 56.64 L274.59 56.69 L275.01 56.73 L275.43 56.78 L275.84 56.83 L276.26 56.87 L276.68 56.92 L277.10 56.98 L277.52 57.03 L277.93 57.08 L278.35 57.14 L278.77 57.20 L279.19 57.26 L279.61 57.32 L280.03 57.38 L280.44 57.44 L280.86 57.51 L281.28 57.57 L281.70 57.64 L282.12 57.71 L282.53 57.78 L282.95 57.85 L283.37 57.93 L283.79 58.00 L284.21 58.08 L284.62 58.16 L285.04 58.24 L285.46 58.32 L285.88 58.40 L286.30 58.48 L286.72 58.57 L287.13 58.66 L287.55 58.74 L287.97 58.83 L288.39 58.93 L288.81 59.02 L289.22 59.12 L289.64 59.21 L290.06 59.31 L290.48 59.41 L290.90 59.51 L291.31 59.62 L291.73 59.72 L292.15 59.83 L292.57 59.94 L292.99 60.05 L293.40 60.16 L293.82 60.28 L294.24 60.40 L294.66 60.52 L295.08 60.64 L295.50 60.76 L295.91 60.88 L296.33 61.01 L296.75 61.14 L297.17 61.27 L297.59 61.41 L298.00 61.54 L298.42 61.68 L298.84 61.82 L299.26 61.97 L299.68 62.12 L300.09 62.26 L300.51 62.42 L300.93 62.57 L301.35 62.73 L301.77 62.89 L302.19 63.05 L302.60 63.22 L303.02 63.39 L303.44 63.56 L303.86 63.74 L304.28 63.92 L304.69 64.10 L305.11 64.29 L305.53 64.48 L305.95 64.68 L306.37 64.88 L306.78 65.09 L307.20 65.29 L307.62 65.51 L308.04 65.73 L308.46 65.95 L308.87 66.18 L309.29 66.42 L309.71 66.66 L310.13 66.91 L310.55 67.16 L310.97 67.42 L311.38 67.69 L311.80 67.96 L312.22 68.25 L312.64 68.54 L313.06 68.84 L313.47 69.15 L313.89 69.47 L314.31 69.80 L314.73 70.14 L315.15 70.50 L315.56 70.87 L315.98 71.25 L316.40 71.65 L316.82 72.06 L317.24 72.49 L317.65 72.94 L318.07 73.42 L318.49 73.91 L318.91 74.44 L319.33 74.99 L319.75 75.57 L320.16 76.19 L320.58 76.85 L321.00 77.56 L321.42 78.33 L321.84 79.15 L322.25 80.06 L322.67 81.05 L323.09 82.15 L323.51 83.39 L323.93 84.81 L324.34 86.47 L324.76 88.47 L325.18 90.99 L325.60 94.37 L326.02 99.60 L326.44 111.63 L326.75 113.44 L327.17 100.12 L327.58 94.71 L328.00 91.26 L328.42 88.73 L328.84 86.72 L329.26 85.07 L329.68 83.65 L330.09 82.42 L330.51 81.34 L330.93 80.36 L331.35 79.47 L331.77 78.67 L332.18 77.92 L332.60 77.23 L333.02 76.59 L333.44 75.99 L333.86 75.43 L334.27 74.90 L334.69 74.39 L335.11 73.92 L335.53 73.47 L335.95 73.04 L336.37 72.62 L336.78 72.23 L337.20 71.86 L337.62 71.50 L338.04 71.15 L338.46 70.81 L338.87 70.49 L339.29 70.18 L339.71 69.88 L340.13 69.60 L340.55 69.32 L340.96 69.04 L341.38 68.78 L341.80 68.53 L342.22 68.28 L342.64 68.04 L343.05 67.81 L343.47 67.58 L343.89 67.36 L344.31 67.15 L344.73 66.94 L345.15 66.73 L345.56 66.54 L345.98 66.34 L346.40 66.15 L346.82 65.97 L347.24 65.79 L347.65 65.61 L348.07 65.44 L348.49 65.27 L348.91 65.11 L349.33 64.94 L349.74 64.79 L350.16 64.63 L350.58 64.48 L351.00 64.33 L351.42 64.19 L351.83 64.04 L352.25 63.90 L352.67 63.77 L353.09 63.63 L353.51 63.50 L353.93 63.37 L354.34 63.25 L354.76 63.12 L355.18 63.00 L355.60 62.88 L356.02 62.76 L356.43 62.65 L356.85 62.53 L357.27 62.42 L357.69 62.31 L358.11 62.20 L358.52 62.10 L358.94 61.99 L359.36 61.89 L359.78 61.79 L360.20 61.69 L360.62 61.59 L361.03 61.50 L361.45 61.40 L361.87 61.31 L362.29 61.22 L362.71 61.13 L363.12 61.04 L363.54 60.95 L363.96 60.87 L364.38 60.78 L364.80 60.70 L365.21 60.62 L365.63 60.54 L366.05 60.46 L366.47 60.38 L366.89 60.31 L367.30 60.23 L367.72 60.16 L368.14 60.08 L368.56 60.01 L368.98 59.94 L369.40 59.87 L369.81 59.80 L370.23 59.73 L370.65 59.67 L371.07 59.60 L371.49 59.54 L371.90 59.47 L372.32 59.41 L372.74 59.35 L373.16 59.29 L373.58 59.23 L373.99 59.17 L374.41 59.11 L374.83 59.05 L375.25 58.99 L375.67 58.94 L376.09 58.88 L376.50 58.83 L376.92 58.78 L377.34 58.72 L377.76 58.67 L378.18 58.62 L378.59 58.57 L379.01 58.52 L379.43 58.47 L379.85 58.43 L380.27 58.38 L380.68 58.33 L381.10 58.29 L381.52 58.24 L381.94 58.20 L382.36 58.15 L382.77 58.11 L383.19 58.07 L383.61 58.03 L384.03 57.99 L384.45 57.95 L384.87 57.91 L385.28 57.87 L385.70 57.83 L386.12 57.79 L386.54 57.76 L386.96 57.72 L387.37 57.68 L387.79 57.65 L388.21 57.61 L388.63 57.58 L389.05 57.55 L389.46 57.51 L389.88 57.48 L390.30 57.45 L390.72 57.42 L391.14 57.39 L391.55 57.36 L391.97 57.33 L392.39 57.30 L392.81 57.27 L393.23 57.24 L393.65 57.22 L394.06 57.19 L394.48 57.16 L394.90 57.14 L395.32 57.11 L395.74 57.09 L396.15 57.06 L396.57 57.04 L396.99 57.02 L397.41 56.99 L397.83 56.97 L398.24 56.95 L398.66 56.93 L399.08 56.91 L399.50 56.89 L399.92 56.87 L400.34 56.85 L400.75 56.83 L401.17 56.81 L401.59 56.80 L402.01 56.78 L402.43 56.76 L402.84 56.74 L403.26 56.73 L403.68 56.71 L404.10 56.70 L404.52 56.68 L404.93 56.67 L405.35 56.66 L405.77 56.64 L406.19 56.63 L406.61 56.62 L407.02 56.61 L407.44 56.60 L407.86 56.59 L408.28 56.57 L408.70 56.56 L409.12 56.56 L409.53 56.55 L409.95 56.54 L410.37 56.53 L410.79 56.52 L411.21 56.51 L411.62 56.51 L412.04 56.50 L412.46 56.50 L412.88 56.49 L413.30 56.49 L413.71 56.48 L414.13 56.48 L414.55 56.47 L414.97 56.47 L415.39 56.47 L415.80 56.46 L416.22 56.46 L416.64 56.46 L417.06 56.46 L417.48 56.46 L417.90 56.46 L418.00 56.46" fill="none" stroke="#0000FF" stroke-width="1"/><rect x="232" y="98" width="1" height="40" fill="#0000FF"/><rect x="326" y="103" width="1" height="40" fill="#0000FF"/></svg>
<div class="t" style="left:410px;top:102px;font:normal 13px/13px 'Liberation Sans', sans-serif;color:#000;white-space:pre;transform-origin:0 0;transform:scaleX(1.0096);">Magnitude Response in dB</div>
<div class="t" style="left:269px;top:117px;font:normal 11px/11px 'Liberation Sans', sans-serif;color:#606060;white-space:pre;transform-origin:0 0;transform:scaleX(1.3260);">0</div>
<div class="t" style="left:259px;top:173px;font:normal 11px/11px 'Liberation Sans', sans-serif;color:#606060;white-space:pre;transform-origin:0 0;transform:scaleX(1.1184);">-50</div>
<div class="t" style="left:253px;top:229px;font:normal 11px/11px 'Liberation Sans', sans-serif;color:#606060;white-space:pre;transform-origin:0 0;transform:scaleX(1.0768);">-100</div>
<div class="t" style="left:253px;top:285px;font:normal 11px/11px 'Liberation Sans', sans-serif;color:#606060;white-space:pre;transform-origin:0 0;transform:scaleX(1.0768);">-150</div>
<div class="t" style="left:277px;top:296px;font:normal 11px/11px 'Liberation Sans', sans-serif;color:#606060;white-space:pre;transform-origin:0 0;transform:scaleX(1.3260);">0</div>
<div class="t" style="left:314px;top:296px;font:normal 11px/11px 'Liberation Sans', sans-serif;color:#606060;white-space:pre;transform-origin:0 0;transform:scaleX(0.9491);">0.1</div>
<div class="t" style="left:356px;top:296px;font:normal 11px/11px 'Liberation Sans', sans-serif;color:#606060;white-space:pre;transform-origin:0 0;transform:scaleX(0.9491);">0.2</div>
<div class="t" style="left:398px;top:296px;font:normal 11px/11px 'Liberation Sans', sans-serif;color:#606060;white-space:pre;transform-origin:0 0;transform:scaleX(0.9491);">0.3</div>
<div class="t" style="left:440px;top:296px;font:normal 11px/11px 'Liberation Sans', sans-serif;color:#606060;white-space:pre;transform-origin:0 0;transform:scaleX(0.9491);">0.4</div>
<div class="t" style="left:482px;top:296px;font:normal 11px/11px 'Liberation Sans', sans-serif;color:#606060;white-space:pre;transform-origin:0 0;transform:scaleX(0.9491);">0.5</div>
<div class="t" style="left:523px;top:296px;font:normal 11px/11px 'Liberation Sans', sans-serif;color:#606060;white-space:pre;transform-origin:0 0;transform:scaleX(0.9491);">0.6</div>
<div class="t" style="left:565px;top:296px;font:normal 11px/11px 'Liberation Sans', sans-serif;color:#606060;white-space:pre;transform-origin:0 0;transform:scaleX(0.9491);">0.7</div>
<div class="t" style="left:607px;top:296px;font:normal 11px/11px 'Liberation Sans', sans-serif;color:#606060;white-space:pre;transform-origin:0 0;transform:scaleX(0.9491);">0.8</div>
<div class="t" style="left:649px;top:296px;font:normal 11px/11px 'Liberation Sans', sans-serif;color:#606060;white-space:pre;transform-origin:0 0;transform:scaleX(0.9491);">0.9</div>
<div class="t" style="left:392px;top:312px;font:normal 11px/11px 'Liberation Sans', sans-serif;color:#000;white-space:pre;transform-origin:0 0;transform:scaleX(0.9846);">Normalized Frequency  (×π rad/sample)</div>
<div class="t" style="left:235px;top:244px;transform-origin:0 0;transform:rotate(-90deg) scaleX(0.9080);font:12px/12px 'Liberation Sans', sans-serif;color:#000;white-space:pre">Magnitude (dB)</div>
<div class="t" style="left:52px;top:379px;font:normal 12px/12px 'Liberation Sans', sans-serif;color:#000;white-space:pre;transform-origin:0 0;transform:scaleX(0.8703);">Filter Structure:</div>
<div style="left:52px;top:395px;width:200px;height:21px;background:#FFFFFF;"></div>
<div style="left:52px;top:395px;width:200px;height:1px;background:#54809C;"></div>
<div style="left:52px;top:395px;width:1px;height:21px;background:#54809C;"></div>
<div style="left:52px;top:415px;width:200px;height:1px;background:#D3DFE7;"></div>
<div style="left:251px;top:395px;width:1px;height:21px;background:#D3DFE7;"></div>
<div style="left:53px;top:396px;width:198px;height:1px;background:#000000;"></div>
<div style="left:53px;top:396px;width:1px;height:19px;background:#000000;"></div>
<div style="left:53px;top:414px;width:198px;height:1px;background:#9EB8C8;"></div>
<div style="left:250px;top:396px;width:1px;height:19px;background:#9EB8C8;"></div>
<div class="t" style="left:56px;top:400px;font:normal 12px/12px 'Liberation Sans', sans-serif;color:#000;white-space:pre;transform-origin:0 0;transform:scaleX(0.8860);">Direct form II transposed</div>
<div style="left:237px;top:397px;width:13px;height:17px;background:#9EB8C8;"></div>
<div style="left:237px;top:397px;width:13px;height:1px;background:#D3DFE7;"></div>
<div style="left:237px;top:397px;width:1px;height:17px;background:#D3DFE7;"></div>
<div style="left:237px;top:413px;width:13px;height:1px;background:#000000;"></div>
<div style="left:249px;top:397px;width:1px;height:17px;background:#000000;"></div>
<div style="left:238px;top:398px;width:11px;height:1px;background:#9EB8C8;"></div>
<div style="left:238px;top:398px;width:1px;height:15px;background:#9EB8C8;"></div>
<div style="left:238px;top:412px;width:11px;height:1px;background:#54809C;"></div>
<div style="left:248px;top:398px;width:1px;height:15px;background:#54809C;"></div>
<svg style="position:absolute;left:240px;top:404px;" width="7" height="4" viewBox="0 0 7 4" shape-rendering="crispEdges"><rect x="0" y="0" width="7" height="1" fill="#000000"/><rect x="1" y="1" width="5" height="1" fill="#000000"/><rect x="2" y="2" width="3" height="1" fill="#000000"/><rect x="3" y="3" width="1" height="1" fill="#000000"/></svg>
<div class="t" style="left:284px;top:396px;font:normal 12px/12px 'Liberation Sans', sans-serif;color:#000;white-space:pre;transform-origin:0 0;transform:scaleX(0.8728);">Numerator:</div>
<div class="t" style="left:273px;top:424px;font:normal 12px/12px 'Liberation Sans', sans-serif;color:#000;white-space:pre;transform-origin:0 0;transform:scaleX(0.8801);">Denominator:</div>
<div style="left:346px;top:395px;width:176px;height:18px;background:#FFFFFF;"></div>
<div style="left:346px;top:395px;width:176px;height:1px;background:#54809C;"></div>
<div style="left:346px;top:395px;width:1px;height:18px;background:#54809C;"></div>
<div style="left:346px;top:412px;width:176px;height:1px;background:#D3DFE7;"></div>
<div style="left:521px;top:395px;width:1px;height:18px;background:#D3DFE7;"></div>
<div style="left:347px;top:396px;width:174px;height:1px;background:#000000;"></div>
<div style="left:347px;top:396px;width:1px;height:16px;background:#000000;"></div>
<div style="left:347px;top:411px;width:174px;height:1px;background:#9EB8C8;"></div>
<div style="left:520px;top:396px;width:1px;height:16px;background:#9EB8C8;"></div>
<div style="left:346px;top:423px;width:176px;height:18px;background:#FFFFFF;"></div>
<div style="left:346px;top:423px;width:176px;height:1px;background:#54809C;"></div>
<div style="left:346px;top:423px;width:1px;height:18px;background:#54809C;"></div>
<div style="left:346px;top:440px;width:176px;height:1px;background:#D3DFE7;"></div>
<div style="left:521px;top:423px;width:1px;height:18px;background:#D3DFE7;"></div>
<div style="left:347px;top:424px;width:174px;height:1px;background:#000000;"></div>
<div style="left:347px;top:424px;width:1px;height:16px;background:#000000;"></div>
<div style="left:347px;top:439px;width:174px;height:1px;background:#9EB8C8;"></div>
<div style="left:520px;top:424px;width:1px;height:16px;background:#9EB8C8;"></div>
<div class="t" style="left:352px;top:399px;font:normal 12px/12px 'Liberation Sans', sans-serif;color:#000;white-space:pre;transform-origin:0 0;transform:scaleX(0.8905);">[0.028  0.053 0.071   0.053 0.028]</div>
<div class="t" style="left:352px;top:427px;font:normal 12px/12px 'Liberation Sans', sans-serif;color:#000;white-space:pre;transform-origin:0 0;transform:scaleX(0.9006);">[1.000 -2.026 2.148 -1.159 0.279]</div>
<div style="left:532px;top:395px;width:39px;height:18px;background:#9EB8C8;"></div>
<div style="left:532px;top:395px;width:39px;height:1px;background:#D3DFE7;"></div>
<div style="left:532px;top:395px;width:1px;height:18px;background:#D3DFE7;"></div>
<div style="left:532px;top:412px;width:39px;height:1px;background:#000000;"></div>
<div style="left:570px;top:395px;width:1px;height:18px;background:#000000;"></div>
<div style="left:533px;top:396px;width:37px;height:1px;background:#9EB8C8;"></div>
<div style="left:533px;top:396px;width:1px;height:16px;background:#9EB8C8;"></div>
<div style="left:533px;top:411px;width:37px;height:1px;background:#54809C;"></div>
<div style="left:569px;top:396px;width:1px;height:16px;background:#54809C;"></div>
<div class="t" style="left:539px;top:398px;font:normal 12px/12px 'Liberation Sans', sans-serif;color:#000;white-space:pre;transform-origin:0 0;transform:scaleX(0.8860);">Clear</div>
<div style="left:532px;top:423px;width:39px;height:18px;background:#9EB8C8;"></div>
<div style="left:532px;top:423px;width:39px;height:1px;background:#D3DFE7;"></div>
<div style="left:532px;top:423px;width:1px;height:18px;background:#D3DFE7;"></div>
<div style="left:532px;top:440px;width:39px;height:1px;background:#000000;"></div>
<div style="left:570px;top:423px;width:1px;height:18px;background:#000000;"></div>
<div style="left:533px;top:424px;width:37px;height:1px;background:#9EB8C8;"></div>
<div style="left:533px;top:424px;width:1px;height:16px;background:#9EB8C8;"></div>
<div style="left:533px;top:439px;width:37px;height:1px;background:#54809C;"></div>
<div style="left:569px;top:424px;width:1px;height:16px;background:#54809C;"></div>
<div class="t" style="left:539px;top:426px;font:normal 12px/12px 'Liberation Sans', sans-serif;color:#000;white-space:pre;transform-origin:0 0;transform:scaleX(0.8860);">Clear</div>
<div class="t" style="left:591px;top:379px;font:normal 12px/12px 'Liberation Sans', sans-serif;color:#000;white-space:pre;transform-origin:0 0;transform:scaleX(0.8766);">Sampling Frequency:</div>
<div class="t" style="left:595px;top:396px;font:normal 12px/12px 'Liberation Sans', sans-serif;color:#000;white-space:pre;transform-origin:0 0;transform:scaleX(0.9282);">Units:</div>
<div style="left:632px;top:395px;width:113px;height:21px;background:#FFFFFF;"></div>
<div style="left:632px;top:395px;width:113px;height:1px;background:#54809C;"></div>
<div style="left:632px;top:395px;width:1px;height:21px;background:#54809C;"></div>
<div style="left:632px;top:415px;width:113px;height:1px;background:#D3DFE7;"></div>
<div style="left:744px;top:395px;width:1px;height:21px;background:#D3DFE7;"></div>
<div style="left:633px;top:396px;width:111px;height:1px;background:#000000;"></div>
<div style="left:633px;top:396px;width:1px;height:19px;background:#000000;"></div>
<div style="left:633px;top:414px;width:111px;height:1px;background:#9EB8C8;"></div>
<div style="left:743px;top:396px;width:1px;height:19px;background:#9EB8C8;"></div>
<div class="t" style="left:635px;top:400px;font:normal 12px/12px 'Liberation Sans', sans-serif;color:#000;white-space:pre;transform-origin:0 0;transform:scaleX(0.8960);">Normalized (0 to 1)</div>
<div style="left:730px;top:397px;width:13px;height:17px;background:#9EB8C8;"></div>
<div style="left:730px;top:397px;width:13px;height:1px;background:#D3DFE7;"></div>
<div style="left:730px;top:397px;width:1px;height:17px;background:#D3DFE7;"></div>
<div style="left:730px;top:413px;width:13px;height:1px;background:#000000;"></div>
<div style="left:742px;top:397px;width:1px;height:17px;background:#000000;"></div>
<div style="left:731px;top:398px;width:11px;height:1px;background:#9EB8C8;"></div>
<div style="left:731px;top:398px;width:1px;height:15px;background:#9EB8C8;"></div>
<div style="left:731px;top:412px;width:11px;height:1px;background:#54809C;"></div>
<div style="left:741px;top:398px;width:1px;height:15px;background:#54809C;"></div>
<svg style="position:absolute;left:733px;top:404px;" width="7" height="4" viewBox="0 0 7 4" shape-rendering="crispEdges"><rect x="0" y="0" width="7" height="1" fill="#000000"/><rect x="1" y="1" width="5" height="1" fill="#000000"/><rect x="2" y="2" width="3" height="1" fill="#000000"/><rect x="3" y="3" width="1" height="1" fill="#000000"/></svg>
<div class="t" style="left:609px;top:425px;font:normal 12px/12px 'Liberation Sans', sans-serif;color:#D3DFE7;white-space:pre;transform-origin:0 0;transform:scaleX(0.9289);">Fs:</div>
<div class="t" style="left:608px;top:424px;font:normal 12px/12px 'Liberation Sans', sans-serif;color:#54809C;white-space:pre;transform-origin:0 0;transform:scaleX(0.9289);">Fs:</div>
<div style="left:632px;top:423px;width:113px;height:18px;background:#9EB8C8;"></div>
<div style="left:632px;top:423px;width:113px;height:1px;background:#54809C;"></div>
<div style="left:632px;top:423px;width:1px;height:18px;background:#54809C;"></div>
<div style="left:632px;top:440px;width:113px;height:1px;background:#D3DFE7;"></div>
<div style="left:744px;top:423px;width:1px;height:18px;background:#D3DFE7;"></div>
<div style="left:633px;top:424px;width:111px;height:1px;background:#000000;"></div>
<div style="left:633px;top:424px;width:1px;height:16px;background:#000000;"></div>
<div style="left:633px;top:439px;width:111px;height:1px;background:#9EB8C8;"></div>
<div style="left:743px;top:424px;width:1px;height:16px;background:#9EB8C8;"></div>
<div class="t" style="left:638px;top:427px;font:normal 12px/12px 'Liberation Sans', sans-serif;color:#54809C;white-space:pre;transform-origin:0 0;transform:scaleX(0.9367);">Fs</div>
<div style="left:364px;top:568px;width:78px;height:20px;background:#9EB8C8;"></div>
<div style="left:364px;top:568px;width:78px;height:1px;background:#D3DFE7;"></div>
<div style="left:364px;top:568px;width:1px;height:20px;background:#D3DFE7;"></div>
<div style="left:364px;top:587px;width:78px;height:1px;background:#000000;"></div>
<div style="left:441px;top:568px;width:1px;height:20px;background:#000000;"></div>
<div style="left:365px;top:569px;width:76px;height:1px;background:#9EB8C8;"></div>
<div style="left:365px;top:569px;width:1px;height:18px;background:#9EB8C8;"></div>
<div style="left:365px;top:586px;width:76px;height:1px;background:#54809C;"></div>
<div style="left:440px;top:569px;width:1px;height:18px;background:#54809C;"></div>
<div class="t" style="left:376px;top:572px;font:normal 12px/12px 'Liberation Sans', sans-serif;color:#000;white-space:pre;transform-origin:0 0;transform:scaleX(0.8652);">Import Filter</div>
<div style="left:6px;top:600px;width:765px;height:1px;background:#54809C;"></div>
<div style="left:6px;top:600px;width:1px;height:21px;background:#54809C;"></div>
<div style="left:7px;top:601px;width:763px;height:1px;background:#000000;"></div>
<div style="left:7px;top:601px;width:1px;height:19px;background:#000000;"></div>
<div style="left:6px;top:620px;width:765px;height:1px;background:#D3DFE7;"></div>
<div style="left:770px;top:600px;width:1px;height:21px;background:#D3DFE7;"></div>
<div class="t" style="left:12px;top:603px;font:normal 14px/14px 'Liberation Sans', sans-serif;color:#000;white-space:pre;transform-origin:0 0;transform:scaleX(0.9492);">Computing Response ... done.</div>
</div></body></html>
